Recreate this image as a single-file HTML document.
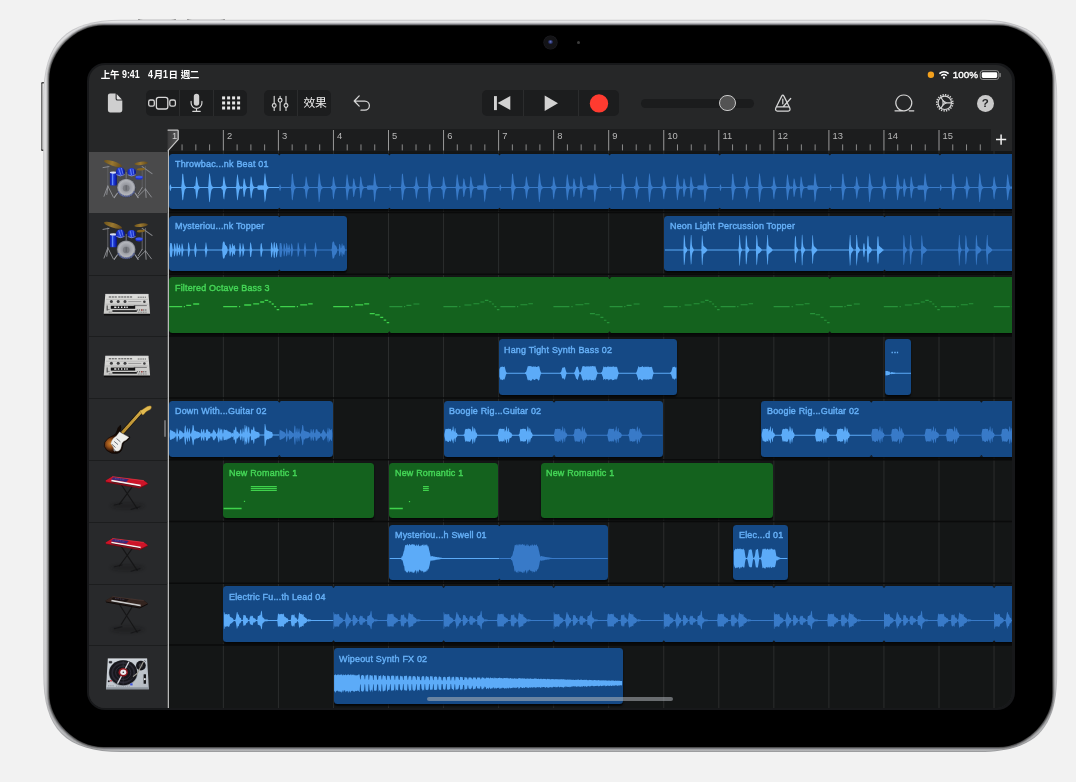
<!DOCTYPE html>
<html lang="zh-Hant">
<head>
<meta charset="utf-8">
<title>GarageBand</title>
<style>

*{box-sizing:border-box;margin:0;padding:0}
html,body{width:1076px;height:782px;overflow:hidden}
body{position:relative;background:#f2f2f2;font-family:"Liberation Sans","Noto Sans CJK TC",sans-serif;color:#fff}
.abs,.screen,.ui,.cam,.camdot,.sidebtn,.topbtn,.homebar{position:absolute}
.sidebtn{left:41.4px;top:81.8px;width:3.4px;height:69.6px;border-radius:1.6px 0 0 1.6px;background:linear-gradient(180deg,#1d1d1d 0,rgba(30,30,30,0) 3.5%,rgba(30,30,30,0) 96.5%,#1d1d1d 100%),linear-gradient(90deg,#8a8a8a 0,#5e5e5e 22%,#e8e8e8 50%,#f3f3f3 100%)}
.topbtn{top:18.7px;height:1.4px;border-radius:1px 1px 0 0;background:linear-gradient(90deg,#555 0,#b8b8b8 2.4px,#dcdcdc 5px,#dcdcdc calc(100% - 5px),#b8b8b8 calc(100% - 2.4px),#555 100%)}
.tb1{left:137.6px;width:38.4px}.tb2{left:187px;width:38.4px}
.cam{left:544px;top:35.5px;width:13px;height:13px;border-radius:50%;background:#131316;box-shadow:0 0 0 .6px #1d1d22}
.cam i{position:absolute;left:4.2px;top:4.2px;width:4.6px;height:4.6px;border-radius:50%;background:radial-gradient(circle at 50% 45%,#6d7bc8 0,#2b356e 45%,#10132a 100%)}
.camdot{left:576.5px;top:40.6px;width:3px;height:3px;border-radius:50%;background:#3c3c3c}
.screen{left:86.6px;top:62.8px;width:928.6px;height:647px;border-radius:18px;background:#17181a}
.ui{left:88.5px;top:64.5px;width:923.6px;height:643.3px;border-radius:16px;background:#262728;overflow:hidden}
.pg{position:absolute;left:-88.5px;top:-64.5px;width:1076px;height:782px;will-change:transform}
.pg>*{position:absolute}
.pg svg{position:absolute;overflow:visible}
/* status bar */
.st{top:68px;height:14px;line-height:14px;font-size:9.5px;font-weight:700;color:#fff;white-space:nowrap;letter-spacing:-.1px}
.st.cj{font-size:9.5px;letter-spacing:-.35px}
.st.dg{font-size:10.3px;transform:scaleX(.86);transform-origin:0 50%;letter-spacing:0}
/* toolbar */
.grp{top:90px;height:26.2px;border-radius:5px;background:#1c1d1e}
.grp i{position:absolute;top:0;width:1px;height:26.2px;background:#2b2c2d}
.fx{left:303.4px;top:95px;width:24px;height:16px;line-height:16px;font-size:11.8px;color:#ececec;white-space:nowrap;letter-spacing:-.2px}
.slider{left:640.7px;top:98.5px;width:113.7px;height:9.2px;border-radius:4.6px;background:#1b1c1d}
.knob{left:719.4px;top:95.1px;width:16.2px;height:16.2px;border-radius:50%;background:#535353;border:1.2px solid #c9c9c9}
.help{left:976.6px;top:94.8px;width:17.4px;height:17.4px;border-radius:50%;background:#c9c9c9;color:#262728;font-size:11.5px;font-weight:700;line-height:17.6px;text-align:center}
/* ruler */
.ruler{left:167px;top:128.7px;width:824px;height:22.5px;background:#1c1d1e}
.rnum{top:130.6px;height:10px;line-height:10px;font-size:9.4px;color:#b9b9b9;white-space:nowrap}
/* tracks */
.tracks{left:167px;top:151px;width:846px;height:557px;background:#141616}
.hdr{left:88.5px;width:78.2px;background:#28292b}
.hdr.sel{background:#4a4a4b}
.hsep{left:88.5px;width:78.2px;height:1px;background:#1c1d1e}
.rsep{left:167px;width:846px;height:1.2px;background:#0c0d0d}
.rg{border-radius:3.5px;background:#154985;overflow:hidden;box-shadow:0 1.2px 1.6px rgba(0,0,0,.75)}
.rg.g{background:#14621e}
.lbl{position:absolute;left:5.5px;top:4.4px;height:11px;line-height:11px;font-size:9.4px;color:#66b0f7;white-space:nowrap;letter-spacing:.2px;-webkit-text-stroke:.42px #66b0f7;transform:scaleX(.955);transform-origin:0 50%}
.rg.g .lbl{color:#45d657;-webkit-text-stroke-color:#45d657}
.homebar{left:338.6px;top:632.8px;width:246.4px;height:4px;border-radius:2px;background:rgba(175,180,186,.55)}
</style>
</head>
<body>
<div class="sidebtn"></div>
<div class="topbtn tb1"></div><div class="topbtn tb2"></div>
<svg class="abs" style="left:0;top:0" width="1076" height="782" viewBox="0 0 1076 782"><defs><linearGradient id="gDevO" x1="0" y1="0" x2="0" y2="1"><stop offset="0" stop-color="#c9c9cb"/><stop offset=".9" stop-color="#c4c4c6"/><stop offset="1" stop-color="#9c9d9f"/></linearGradient><linearGradient id="gDev" x1="0" y1="0" x2="0" y2="1"><stop offset="0" stop-color="#e6e6e8"/><stop offset=".04" stop-color="#dededf"/><stop offset=".55" stop-color="#dadadc"/><stop offset=".9" stop-color="#cdcdcf"/><stop offset="1" stop-color="#b6b7b9"/></linearGradient><filter id="fBez" x="-2%" y="-2%" width="104%" height="104%"><feGaussianBlur stdDeviation="1.05"/></filter></defs><path d="M43.2 97.8C43.2 42.42 65.82 19.8 121.2 19.8H979.2C1034.58 19.8 1057.2 42.42 1057.2 97.8V674C1057.2 729.38 1034.58 752 979.2 752H121.2C65.82 752 43.2 729.38 43.2 674Z" fill="url(#gDevO)"/><path d="M44.1 97.7C44.1 43.03 66.43 20.7 121.1 20.7H979.3C1033.97 20.7 1056.3 43.03 1056.3 97.7V674.1C1056.3 728.77 1033.97 751.1 979.3 751.1H121.1C66.43 751.1 44.1 728.77 44.1 674.1Z" fill="url(#gDev)"/><path d="M49.3 79.5C49.3 51.42 75.22 25.5 103.3 25.5H998.3C1026.38 25.5 1052.3 51.42 1052.3 79.5V692.9C1052.3 720.98 1026.38 746.9 998.3 746.9H103.3C75.22 746.9 49.3 720.98 49.3 692.9Z" fill="#2a2a2c" stroke="#2a2a2c" stroke-width="2.6" filter="url(#fBez)"/><path d="M49.3 79.5C49.3 51.42 75.22 25.5 103.3 25.5H998.3C1026.38 25.5 1052.3 51.42 1052.3 79.5V692.9C1052.3 720.98 1026.38 746.9 998.3 746.9H103.3C75.22 746.9 49.3 720.98 49.3 692.9Z" fill="#000"/></svg>
<div class="cam"><i></i></div><div class="camdot"></div>
<div class="screen"></div>
<div class="ui"><div class="pg">
<div class="tracks"></div><div class="ruler"></div>
<svg style="left:0;top:0" width="1076" height="782" viewBox="0 0 1076 782" fill="none"><path d="M223.35 151V708M278.4 151V708M333.45 151V708M388.5 151V708M443.55 151V708M498.6 151V708M553.65 151V708M608.7 151V708M663.75 151V708M718.8 151V708M773.85 151V708M828.9 151V708M883.95 151V708M939 151V708M994.05 151V708" stroke="#2b2d2d" stroke-width="1"/><path d="M167 212.5H1013M167 274.3H1013M167 336.1H1013M167 397.9H1013M167 459.7H1013M167 521.5H1013M167 583.3H1013M167 645.1H1013" stroke="#0a0b0b" stroke-width="1.5"/></svg>
<div class="rg" style="left:169.2px;top:153.8px;width:847.4px;height:55.6px;border-radius:3.5px 0 0 3.5px"><span class="lbl">Throwbac...nk Beat 01</span></div>
<div class="rg" style="left:169.2px;top:215.6px;width:177.8px;height:55.6px"><span class="lbl">Mysteriou...nk Topper</span></div>
<div class="rg" style="left:664.35px;top:215.6px;width:352.25px;height:55.6px;border-radius:3.5px 0 0 3.5px"><span class="lbl">Neon Light Percussion Topper</span></div>
<div class="rg g" style="left:169.2px;top:277.4px;width:847.4px;height:55.6px;border-radius:3.5px 0 0 3.5px"><span class="lbl">Filtered Octave Bass 3</span></div>
<div class="rg" style="left:498.9px;top:339.2px;width:178px;height:55.6px"><span class="lbl">Hang Tight Synth Bass 02</span></div>
<div class="rg" style="left:885px;top:339.2px;width:26.4px;height:55.6px"><span class="lbl">...</span></div>
<div class="rg" style="left:169.2px;top:401px;width:163.4px;height:55.6px"><span class="lbl">Down With...Guitar 02</span></div>
<div class="rg" style="left:443.95px;top:401px;width:219.25px;height:55.6px"><span class="lbl">Boogie Rig...Guitar 02</span></div>
<div class="rg" style="left:761.2px;top:401px;width:255.4px;height:55.6px;border-radius:3.5px 0 0 3.5px"><span class="lbl">Boogie Rig...Guitar 02</span></div>
<div class="rg g" style="left:223.4px;top:462.8px;width:150.6px;height:55.6px"><span class="lbl">New Romantic 1</span></div>
<div class="rg g" style="left:389.2px;top:462.8px;width:108.4px;height:55.6px"><span class="lbl">New Romantic 1</span></div>
<div class="rg g" style="left:540.6px;top:462.8px;width:232.8px;height:55.6px"><span class="lbl">New Romantic 1</span></div>
<div class="rg" style="left:389.2px;top:524.6px;width:219.2px;height:55.6px"><span class="lbl">Mysteriou...h Swell 01</span></div>
<div class="rg" style="left:733.4px;top:524.6px;width:54.4px;height:55.6px"><span class="lbl">Elec...d 01</span></div>
<div class="rg" style="left:223.4px;top:586.4px;width:793.2px;height:55.6px;border-radius:3.5px 0 0 3.5px"><span class="lbl">Electric Fu...th Lead 04</span></div>
<div class="rg" style="left:333.6px;top:648.2px;width:289.2px;height:55.6px"><span class="lbl">Wipeout Synth FX 02</span></div>
<svg style="left:0;top:0" width="1076" height="782" viewBox="0 0 1076 782" fill="none" shape-rendering="geometricPrecision">
<path d="M277.6 153.6l1.7 1.9l1.7-1.9zM277.6 209.6l1.7-1.9l1.7 1.9z" fill="#141616"/>
<path d="M387.7 153.6l1.7 1.9l1.7-1.9zM387.7 209.6l1.7-1.9l1.7 1.9z" fill="#141616"/>
<path d="M497.8 153.6l1.7 1.9l1.7-1.9zM497.8 209.6l1.7-1.9l1.7 1.9z" fill="#141616"/>
<path d="M607.9 153.6l1.7 1.9l1.7-1.9zM607.9 209.6l1.7-1.9l1.7 1.9z" fill="#141616"/>
<path d="M718 153.6l1.7 1.9l1.7-1.9zM718 209.6l1.7-1.9l1.7 1.9z" fill="#141616"/>
<path d="M828.1 153.6l1.7 1.9l1.7-1.9zM828.1 209.6l1.7-1.9l1.7 1.9z" fill="#141616"/>
<path d="M938.2 153.6l1.7 1.9l1.7-1.9zM938.2 209.6l1.7-1.9l1.7 1.9z" fill="#141616"/>
<path d="M169.7 186L170.2 184.4L170.7 184.4L171.2 186.6L171.7 187.1L172.2 187.1L172.7 187.1L173.2 187.1L173.7 187.1L174.2 187.1L174.7 187.1L175.2 187.1L175.7 187.1L176.2 187.1L176.7 187.1L177.2 187.1L177.7 187.1L178.2 187.1L178.7 187.1L179.2 187.1L179.7 187.1L180.2 187.1L180.7 187.1L181.2 187.1L181.7 183.5L182.2 174.5L182.7 173.4L183.2 174L183.7 179L184.2 182.8L184.7 185L185.2 186L185.7 186.5L186.2 186.9L186.7 187.1L187.2 187.1L187.7 187.1L188.2 187.1L188.7 187.1L189.2 187.1L189.7 187.1L190.2 187.1L190.7 187.1L191.2 187.1L191.7 187.1L192.2 187.1L192.7 187.1L193.2 187.1L193.7 187.1L194.2 186.3L194.7 185.8L195.2 186.4L195.7 182L196.2 176.6L196.7 176.6L197.2 178.7L197.7 182.2L198.2 184.8L198.7 186L199.2 186.5L199.7 186.9L200.2 187.1L200.7 187.1L201.2 187.1L201.7 187.1L202.2 187.1L202.7 187.1L203.2 187.1L203.7 187.1L204.2 187.1L204.7 187.1L205.2 187.1L205.7 187.1L206.2 187.1L206.7 187.1L207.2 187.1L207.7 187.1L208.2 186.8L208.7 180.5L209.2 173.6L209.7 173.6L210.2 176.3L210.7 180.8L211.2 184L211.7 185.6L212.2 186.2L212.7 186.7L213.2 187L213.7 187.1L214.2 187.1L214.7 187.1L215.2 187.1L215.7 187.1L216.2 187.1L216.7 187.1L217.2 187.1L217.7 187.1L218.2 187.1L218.7 187.1L219.2 187.1L219.7 187.1L220.2 187.1L220.7 187.1L221.2 187.1L221.7 186L222.2 185.9L222.7 185.4L223.2 178.9L223.7 176.4L224.2 176.4L224.7 180.1L225.2 183.3L225.7 185.3L226.2 186.3L226.7 186.7L227.2 187L227.7 187.1L228.2 187.1L228.7 187.1L229.2 187.1L229.7 187.1L230.2 187.1L230.7 187.1L231.2 187.1L231.7 187.1L232.2 187.1L232.7 187.1L233.2 187.1L233.7 187.1L234.2 187.1L234.7 187.1L235.2 187.1L235.7 187.1L236.2 186.1L236.7 179.3L237.2 174.6L237.7 174.6L238.2 178.1L238.7 181.9L239.2 184.6L239.7 185.9L240.2 186.4L240.7 186.8L241.2 186.6L241.7 186.2L242.2 187.1L242.7 187.1L243.2 184L243.7 178.4L244.2 178.4L244.7 179.5L245.2 182.6L245.7 184.9L246.2 186.1L246.7 186.6L247.2 186.9L247.7 187.1L248.2 187.1L248.7 187.1L249.2 187.1L249.7 187.1L250.2 183.3L250.7 176.6L251.2 176.6L251.7 177.9L252.2 181.6L252.7 184.3L253.2 185.8L253.7 186.5L254.2 186.8L254.7 187.1L255.2 187.1L255.7 187.1L256.2 187.1L256.7 187.1L257.2 187.1L257.7 185.8L258.2 185.3L258.7 185.4L259.2 185.4L259.7 185.2L260.2 185.2L260.7 185.4L261.2 185.3L261.7 185.3L262.2 185.5L262.7 185.3L263.2 185.4L263.7 185.3L264.2 178.6L264.7 173.4L265.2 173.4L265.7 177.2L266.2 181.4L266.7 184.3L267.2 185.8L267.7 186.3L268.2 186.8L268.7 187.1L269.2 187.1L269.7 187.1L270.2 187.1L270.7 187.1L271.2 187.1L271.7 187.1L272.2 187.1L272.7 187.1L273.2 187.1L273.7 187.1L274.2 187.1L274.7 187.1L275.2 187.1L275.7 187.1L276.2 187.1L276.7 187.1L277.2 187.1L277.7 187.1L278.2 187.1L278.7 187.1L279.2 187.1L279.2 188.1L278.7 188.1L278.2 188.1L277.7 188.1L277.2 188.1L276.7 188.1L276.2 188.1L275.7 188.1L275.2 188.1L274.7 188.1L274.2 188.1L273.7 188.1L273.2 188.1L272.7 188.1L272.2 188.1L271.7 188.1L271.2 188.1L270.7 188.1L270.2 188.1L269.7 188.1L269.2 188.1L268.7 188.2L268.2 188.5L267.7 189L267.2 189.5L266.7 190.8L266.2 193.3L265.7 198.7L265.2 201.1L264.7 202.5L264.2 195.7L263.7 189.9L263.2 189.7L262.7 189.9L262.2 189.5L261.7 189.7L261.2 190L260.7 189.6L260.2 190.1L259.7 189.8L259.2 189.9L258.7 189.7L258.2 189.8L257.7 189.4L257.2 188.1L256.7 188.1L256.2 188.1L255.7 188.1L255.2 188.1L254.7 188.1L254.2 188.4L253.7 188.6L253.2 189.3L252.7 190.7L252.2 193.1L251.7 197L251.2 198.8L250.7 197.5L250.2 191.5L249.7 188.1L249.2 188.1L248.7 188.1L248.2 188.1L247.7 188.1L247.2 188.2L246.7 188.4L246.2 189.1L245.7 190.1L245.2 192.2L244.7 195.4L244.2 197L243.7 196.7L243.2 191.5L242.7 188.1L242.2 188.1L241.7 188.9L241.2 188.7L240.7 188.4L240.2 188.7L239.7 189.3L239.2 190.8L238.7 193.3L238.2 196.4L237.7 200.2L237.2 199.9L236.7 194.9L236.2 189.1L235.7 188.1L235.2 188.1L234.7 188.1L234.2 188.1L233.7 188.1L233.2 188.1L232.7 188.1L232.2 188.1L231.7 188.1L231.2 188.1L230.7 188.1L230.2 188.1L229.7 188.1L229.2 188.1L228.7 188.1L228.2 188.1L227.7 188.1L227.2 188.2L226.7 188.5L226.2 188.8L225.7 190.1L225.2 192.1L224.7 194.5L224.2 199.5L223.7 199L223.2 196.6L222.7 189.9L222.2 189.4L221.7 189.2L221.2 188.1L220.7 188.1L220.2 188.1L219.7 188.1L219.2 188.1L218.7 188.1L218.2 188.1L217.7 188.1L217.2 188.1L216.7 188.1L216.2 188.1L215.7 188.1L215.2 188.1L214.7 188.1L214.2 188.1L213.7 188.1L213.2 188.2L212.7 188.4L212.2 188.9L211.7 189.5L211.2 191.2L210.7 194L210.2 198.5L209.7 202.1L209.2 202.2L208.7 194.7L208.2 188.5L207.7 188.1L207.2 188.1L206.7 188.1L206.2 188.1L205.7 188.1L205.2 188.1L204.7 188.1L204.2 188.1L203.7 188.1L203.2 188.1L202.7 188.1L202.2 188.1L201.7 188.1L201.2 188.1L200.7 188.1L200.2 188.1L199.7 188.3L199.2 188.7L198.7 189.3L198.2 190.6L197.7 193.2L197.2 197.1L196.7 199.4L196.2 197.3L195.7 193.1L195.2 188.8L194.7 189.2L194.2 188.7L193.7 188.1L193.2 188.1L192.7 188.1L192.2 188.1L191.7 188.1L191.2 188.1L190.7 188.1L190.2 188.1L189.7 188.1L189.2 188.1L188.7 188.1L188.2 188.1L187.7 188.1L187.2 188.1L186.7 188.1L186.2 188.3L185.7 188.7L185.2 189.1L184.7 190.1L184.2 192.4L183.7 195.2L183.2 199.6L182.7 200.4L182.2 199.3L181.7 191.4L181.2 188.1L180.7 188.1L180.2 188.1L179.7 188.1L179.2 188.1L178.7 188.1L178.2 188.1L177.7 188.1L177.2 188.1L176.7 188.1L176.2 188.1L175.7 188.1L175.2 188.1L174.7 188.1L174.2 188.1L173.7 188.1L173.2 188.1L172.7 188.1L172.2 188.1L171.7 188.1L171.2 188.7L170.7 190.9L170.2 190.8L169.7 189.1Z" fill="#5cabf8"/>
<path d="M279.3 186L279.8 184.4L280.3 184.4L280.8 186.6L281.3 187.1L281.8 187.1L282.3 187.1L282.8 187.1L283.3 187.1L283.8 187.1L284.3 187.1L284.8 187.1L285.3 187.1L285.8 187.1L286.3 187.1L286.8 187.1L287.3 187.1L287.8 187.1L288.3 187.1L288.8 187.1L289.3 187.1L289.8 187.1L290.3 187.1L290.8 187.1L291.3 183.5L291.8 174.5L292.3 173.4L292.8 174L293.3 179L293.8 182.8L294.3 185L294.8 186L295.3 186.5L295.8 186.9L296.3 187.1L296.8 187.1L297.3 187.1L297.8 187.1L298.3 187.1L298.8 187.1L299.3 187.1L299.8 187.1L300.3 187.1L300.8 187.1L301.3 187.1L301.8 187.1L302.3 187.1L302.8 187.1L303.3 187.1L303.8 186.3L304.3 185.8L304.8 186.4L305.3 182L305.8 176.6L306.3 176.6L306.8 178.7L307.3 182.2L307.8 184.8L308.3 186L308.8 186.5L309.3 186.9L309.8 187.1L310.3 187.1L310.8 187.1L311.3 187.1L311.8 187.1L312.3 187.1L312.8 187.1L313.3 187.1L313.8 187.1L314.3 187.1L314.8 187.1L315.3 187.1L315.8 187.1L316.3 187.1L316.8 187.1L317.3 187.1L317.8 186.8L318.3 180.5L318.8 173.6L319.3 173.6L319.8 176.3L320.3 180.8L320.8 184L321.3 185.6L321.8 186.2L322.3 186.7L322.8 187L323.3 187.1L323.8 187.1L324.3 187.1L324.8 187.1L325.3 187.1L325.8 187.1L326.3 187.1L326.8 187.1L327.3 187.1L327.8 187.1L328.3 187.1L328.8 187.1L329.3 187.1L329.8 187.1L330.3 187.1L330.8 187.1L331.3 186L331.8 185.9L332.3 185.4L332.8 178.9L333.3 176.4L333.8 176.4L334.3 180.1L334.8 183.3L335.3 185.3L335.8 186.3L336.3 186.7L336.8 187L337.3 187.1L337.8 187.1L338.3 187.1L338.8 187.1L339.3 187.1L339.8 187.1L340.3 187.1L340.8 187.1L341.3 187.1L341.8 187.1L342.3 187.1L342.8 187.1L343.3 187.1L343.8 187.1L344.3 187.1L344.8 187.1L345.3 187.1L345.8 186.1L346.3 179.3L346.8 174.6L347.3 174.6L347.8 178.1L348.3 181.9L348.8 184.6L349.3 185.9L349.8 186.4L350.3 186.8L350.8 186.6L351.3 186.2L351.8 187.1L352.3 187.1L352.8 184L353.3 178.4L353.8 178.4L354.3 179.5L354.8 182.6L355.3 184.9L355.8 186.1L356.3 186.6L356.8 186.9L357.3 187.1L357.8 187.1L358.3 187.1L358.8 187.1L359.3 187.1L359.8 183.3L360.3 176.6L360.8 176.6L361.3 177.9L361.8 181.6L362.3 184.3L362.8 185.8L363.3 186.5L363.8 186.8L364.3 187.1L364.8 187.1L365.3 187.1L365.8 187.1L366.3 187.1L366.8 187.1L367.3 185.8L367.8 185.3L368.3 185.4L368.8 185.4L369.3 185.2L369.8 185.2L370.3 185.4L370.8 185.3L371.3 185.3L371.8 185.5L372.3 185.3L372.8 185.4L373.3 185.3L373.8 178.6L374.3 173.4L374.8 173.4L375.3 177.2L375.8 181.4L376.3 184.3L376.8 185.8L377.3 186.3L377.8 186.8L378.3 187.1L378.8 187.1L379.3 187.1L379.8 187.1L380.3 187.1L380.8 187.1L381.3 187.1L381.8 187.1L382.3 187.1L382.8 187.1L383.3 187.1L383.8 187.1L384.3 187.1L384.8 187.1L385.3 187.1L385.8 187.1L386.3 187.1L386.8 187.1L387.3 187.1L387.8 187.1L388.3 187.1L388.8 187.1L389.3 187.1L389.3 188.1L388.8 188.1L388.3 188.1L387.8 188.1L387.3 188.1L386.8 188.1L386.3 188.1L385.8 188.1L385.3 188.1L384.8 188.1L384.3 188.1L383.8 188.1L383.3 188.1L382.8 188.1L382.3 188.1L381.8 188.1L381.3 188.1L380.8 188.1L380.3 188.1L379.8 188.1L379.3 188.1L378.8 188.1L378.3 188.2L377.8 188.5L377.3 189L376.8 189.5L376.3 190.8L375.8 193.3L375.3 198.7L374.8 201.1L374.3 202.5L373.8 195.7L373.3 189.9L372.8 189.7L372.3 189.9L371.8 189.5L371.3 189.7L370.8 190L370.3 189.6L369.8 190.1L369.3 189.8L368.8 189.9L368.3 189.7L367.8 189.8L367.3 189.4L366.8 188.1L366.3 188.1L365.8 188.1L365.3 188.1L364.8 188.1L364.3 188.1L363.8 188.4L363.3 188.6L362.8 189.3L362.3 190.7L361.8 193.1L361.3 197L360.8 198.8L360.3 197.5L359.8 191.5L359.3 188.1L358.8 188.1L358.3 188.1L357.8 188.1L357.3 188.1L356.8 188.2L356.3 188.4L355.8 189.1L355.3 190.1L354.8 192.2L354.3 195.4L353.8 197L353.3 196.7L352.8 191.5L352.3 188.1L351.8 188.1L351.3 188.9L350.8 188.7L350.3 188.4L349.8 188.7L349.3 189.3L348.8 190.8L348.3 193.3L347.8 196.4L347.3 200.2L346.8 199.9L346.3 194.9L345.8 189.1L345.3 188.1L344.8 188.1L344.3 188.1L343.8 188.1L343.3 188.1L342.8 188.1L342.3 188.1L341.8 188.1L341.3 188.1L340.8 188.1L340.3 188.1L339.8 188.1L339.3 188.1L338.8 188.1L338.3 188.1L337.8 188.1L337.3 188.1L336.8 188.2L336.3 188.5L335.8 188.8L335.3 190.1L334.8 192.1L334.3 194.5L333.8 199.5L333.3 199L332.8 196.6L332.3 189.9L331.8 189.4L331.3 189.2L330.8 188.1L330.3 188.1L329.8 188.1L329.3 188.1L328.8 188.1L328.3 188.1L327.8 188.1L327.3 188.1L326.8 188.1L326.3 188.1L325.8 188.1L325.3 188.1L324.8 188.1L324.3 188.1L323.8 188.1L323.3 188.1L322.8 188.2L322.3 188.4L321.8 188.9L321.3 189.5L320.8 191.2L320.3 194L319.8 198.5L319.3 202.1L318.8 202.2L318.3 194.7L317.8 188.5L317.3 188.1L316.8 188.1L316.3 188.1L315.8 188.1L315.3 188.1L314.8 188.1L314.3 188.1L313.8 188.1L313.3 188.1L312.8 188.1L312.3 188.1L311.8 188.1L311.3 188.1L310.8 188.1L310.3 188.1L309.8 188.1L309.3 188.3L308.8 188.7L308.3 189.3L307.8 190.6L307.3 193.2L306.8 197.1L306.3 199.4L305.8 197.3L305.3 193.1L304.8 188.8L304.3 189.2L303.8 188.7L303.3 188.1L302.8 188.1L302.3 188.1L301.8 188.1L301.3 188.1L300.8 188.1L300.3 188.1L299.8 188.1L299.3 188.1L298.8 188.1L298.3 188.1L297.8 188.1L297.3 188.1L296.8 188.1L296.3 188.1L295.8 188.3L295.3 188.7L294.8 189.1L294.3 190.1L293.8 192.4L293.3 195.2L292.8 199.6L292.3 200.4L291.8 199.3L291.3 191.4L290.8 188.1L290.3 188.1L289.8 188.1L289.3 188.1L288.8 188.1L288.3 188.1L287.8 188.1L287.3 188.1L286.8 188.1L286.3 188.1L285.8 188.1L285.3 188.1L284.8 188.1L284.3 188.1L283.8 188.1L283.3 188.1L282.8 188.1L282.3 188.1L281.8 188.1L281.3 188.1L280.8 188.7L280.3 190.9L279.8 190.8L279.3 189.1Z" fill="#387ac8"/>
<path d="M389.4 186L389.9 184.4L390.4 184.4L390.9 186.6L391.4 187.1L391.9 187.1L392.4 187.1L392.9 187.1L393.4 187.1L393.9 187.1L394.4 187.1L394.9 187.1L395.4 187.1L395.9 187.1L396.4 187.1L396.9 187.1L397.4 187.1L397.9 187.1L398.4 187.1L398.9 187.1L399.4 187.1L399.9 187.1L400.4 187.1L400.9 187.1L401.4 183.5L401.9 174.5L402.4 173.4L402.9 174L403.4 179L403.9 182.8L404.4 185L404.9 186L405.4 186.5L405.9 186.9L406.4 187.1L406.9 187.1L407.4 187.1L407.9 187.1L408.4 187.1L408.9 187.1L409.4 187.1L409.9 187.1L410.4 187.1L410.9 187.1L411.4 187.1L411.9 187.1L412.4 187.1L412.9 187.1L413.4 187.1L413.9 186.3L414.4 185.8L414.9 186.4L415.4 182L415.9 176.6L416.4 176.6L416.9 178.7L417.4 182.2L417.9 184.8L418.4 186L418.9 186.5L419.4 186.9L419.9 187.1L420.4 187.1L420.9 187.1L421.4 187.1L421.9 187.1L422.4 187.1L422.9 187.1L423.4 187.1L423.9 187.1L424.4 187.1L424.9 187.1L425.4 187.1L425.9 187.1L426.4 187.1L426.9 187.1L427.4 187.1L427.9 186.8L428.4 180.5L428.9 173.6L429.4 173.6L429.9 176.3L430.4 180.8L430.9 184L431.4 185.6L431.9 186.2L432.4 186.7L432.9 187L433.4 187.1L433.9 187.1L434.4 187.1L434.9 187.1L435.4 187.1L435.9 187.1L436.4 187.1L436.9 187.1L437.4 187.1L437.9 187.1L438.4 187.1L438.9 187.1L439.4 187.1L439.9 187.1L440.4 187.1L440.9 187.1L441.4 186L441.9 185.9L442.4 185.4L442.9 178.9L443.4 176.4L443.9 176.4L444.4 180.1L444.9 183.3L445.4 185.3L445.9 186.3L446.4 186.7L446.9 187L447.4 187.1L447.9 187.1L448.4 187.1L448.9 187.1L449.4 187.1L449.9 187.1L450.4 187.1L450.9 187.1L451.4 187.1L451.9 187.1L452.4 187.1L452.9 187.1L453.4 187.1L453.9 187.1L454.4 187.1L454.9 187.1L455.4 187.1L455.9 186.1L456.4 179.3L456.9 174.6L457.4 174.6L457.9 178.1L458.4 181.9L458.9 184.6L459.4 185.9L459.9 186.4L460.4 186.8L460.9 186.6L461.4 186.2L461.9 187.1L462.4 187.1L462.9 184L463.4 178.4L463.9 178.4L464.4 179.5L464.9 182.6L465.4 184.9L465.9 186.1L466.4 186.6L466.9 186.9L467.4 187.1L467.9 187.1L468.4 187.1L468.9 187.1L469.4 187.1L469.9 183.3L470.4 176.6L470.9 176.6L471.4 177.9L471.9 181.6L472.4 184.3L472.9 185.8L473.4 186.5L473.9 186.8L474.4 187.1L474.9 187.1L475.4 187.1L475.9 187.1L476.4 187.1L476.9 187.1L477.4 185.8L477.9 185.3L478.4 185.4L478.9 185.4L479.4 185.2L479.9 185.2L480.4 185.4L480.9 185.3L481.4 185.3L481.9 185.5L482.4 185.3L482.9 185.4L483.4 185.3L483.9 178.6L484.4 173.4L484.9 173.4L485.4 177.2L485.9 181.4L486.4 184.3L486.9 185.8L487.4 186.3L487.9 186.8L488.4 187.1L488.9 187.1L489.4 187.1L489.9 187.1L490.4 187.1L490.9 187.1L491.4 187.1L491.9 187.1L492.4 187.1L492.9 187.1L493.4 187.1L493.9 187.1L494.4 187.1L494.9 187.1L495.4 187.1L495.9 187.1L496.4 187.1L496.9 187.1L497.4 187.1L497.9 187.1L498.4 187.1L498.9 187.1L499.4 187.1L499.4 188.1L498.9 188.1L498.4 188.1L497.9 188.1L497.4 188.1L496.9 188.1L496.4 188.1L495.9 188.1L495.4 188.1L494.9 188.1L494.4 188.1L493.9 188.1L493.4 188.1L492.9 188.1L492.4 188.1L491.9 188.1L491.4 188.1L490.9 188.1L490.4 188.1L489.9 188.1L489.4 188.1L488.9 188.1L488.4 188.2L487.9 188.5L487.4 189L486.9 189.5L486.4 190.8L485.9 193.3L485.4 198.7L484.9 201.1L484.4 202.5L483.9 195.7L483.4 189.9L482.9 189.7L482.4 189.9L481.9 189.5L481.4 189.7L480.9 190L480.4 189.6L479.9 190.1L479.4 189.8L478.9 189.9L478.4 189.7L477.9 189.8L477.4 189.4L476.9 188.1L476.4 188.1L475.9 188.1L475.4 188.1L474.9 188.1L474.4 188.1L473.9 188.4L473.4 188.6L472.9 189.3L472.4 190.7L471.9 193.1L471.4 197L470.9 198.8L470.4 197.5L469.9 191.5L469.4 188.1L468.9 188.1L468.4 188.1L467.9 188.1L467.4 188.1L466.9 188.2L466.4 188.4L465.9 189.1L465.4 190.1L464.9 192.2L464.4 195.4L463.9 197L463.4 196.7L462.9 191.5L462.4 188.1L461.9 188.1L461.4 188.9L460.9 188.7L460.4 188.4L459.9 188.7L459.4 189.3L458.9 190.8L458.4 193.3L457.9 196.4L457.4 200.2L456.9 199.9L456.4 194.9L455.9 189.1L455.4 188.1L454.9 188.1L454.4 188.1L453.9 188.1L453.4 188.1L452.9 188.1L452.4 188.1L451.9 188.1L451.4 188.1L450.9 188.1L450.4 188.1L449.9 188.1L449.4 188.1L448.9 188.1L448.4 188.1L447.9 188.1L447.4 188.1L446.9 188.2L446.4 188.5L445.9 188.8L445.4 190.1L444.9 192.1L444.4 194.5L443.9 199.5L443.4 199L442.9 196.6L442.4 189.9L441.9 189.4L441.4 189.2L440.9 188.1L440.4 188.1L439.9 188.1L439.4 188.1L438.9 188.1L438.4 188.1L437.9 188.1L437.4 188.1L436.9 188.1L436.4 188.1L435.9 188.1L435.4 188.1L434.9 188.1L434.4 188.1L433.9 188.1L433.4 188.1L432.9 188.2L432.4 188.4L431.9 188.9L431.4 189.5L430.9 191.2L430.4 194L429.9 198.5L429.4 202.1L428.9 202.2L428.4 194.7L427.9 188.5L427.4 188.1L426.9 188.1L426.4 188.1L425.9 188.1L425.4 188.1L424.9 188.1L424.4 188.1L423.9 188.1L423.4 188.1L422.9 188.1L422.4 188.1L421.9 188.1L421.4 188.1L420.9 188.1L420.4 188.1L419.9 188.1L419.4 188.3L418.9 188.7L418.4 189.3L417.9 190.6L417.4 193.2L416.9 197.1L416.4 199.4L415.9 197.3L415.4 193.1L414.9 188.8L414.4 189.2L413.9 188.7L413.4 188.1L412.9 188.1L412.4 188.1L411.9 188.1L411.4 188.1L410.9 188.1L410.4 188.1L409.9 188.1L409.4 188.1L408.9 188.1L408.4 188.1L407.9 188.1L407.4 188.1L406.9 188.1L406.4 188.1L405.9 188.3L405.4 188.7L404.9 189.1L404.4 190.1L403.9 192.4L403.4 195.2L402.9 199.6L402.4 200.4L401.9 199.3L401.4 191.4L400.9 188.1L400.4 188.1L399.9 188.1L399.4 188.1L398.9 188.1L398.4 188.1L397.9 188.1L397.4 188.1L396.9 188.1L396.4 188.1L395.9 188.1L395.4 188.1L394.9 188.1L394.4 188.1L393.9 188.1L393.4 188.1L392.9 188.1L392.4 188.1L391.9 188.1L391.4 188.1L390.9 188.7L390.4 190.9L389.9 190.8L389.4 189.1Z" fill="#387ac8"/>
<path d="M499.5 186L500 184.4L500.5 184.4L501 186.6L501.5 187.1L502 187.1L502.5 187.1L503 187.1L503.5 187.1L504 187.1L504.5 187.1L505 187.1L505.5 187.1L506 187.1L506.5 187.1L507 187.1L507.5 187.1L508 187.1L508.5 187.1L509 187.1L509.5 187.1L510 187.1L510.5 187.1L511 187.1L511.5 183.5L512 174.5L512.5 173.4L513 174L513.5 179L514 182.8L514.5 185L515 186L515.5 186.5L516 186.9L516.5 187.1L517 187.1L517.5 187.1L518 187.1L518.5 187.1L519 187.1L519.5 187.1L520 187.1L520.5 187.1L521 187.1L521.5 187.1L522 187.1L522.5 187.1L523 187.1L523.5 187.1L524 186.3L524.5 185.8L525 186.4L525.5 182L526 176.6L526.5 176.6L527 178.7L527.5 182.2L528 184.8L528.5 186L529 186.5L529.5 186.9L530 187.1L530.5 187.1L531 187.1L531.5 187.1L532 187.1L532.5 187.1L533 187.1L533.5 187.1L534 187.1L534.5 187.1L535 187.1L535.5 187.1L536 187.1L536.5 187.1L537 187.1L537.5 187.1L538 186.8L538.5 180.5L539 173.6L539.5 173.6L540 176.3L540.5 180.8L541 184L541.5 185.6L542 186.2L542.5 186.7L543 187L543.5 187.1L544 187.1L544.5 187.1L545 187.1L545.5 187.1L546 187.1L546.5 187.1L547 187.1L547.5 187.1L548 187.1L548.5 187.1L549 187.1L549.5 187.1L550 187.1L550.5 187.1L551 187.1L551.5 186L552 185.9L552.5 185.4L553 178.9L553.5 176.4L554 176.4L554.5 180.1L555 183.3L555.5 185.3L556 186.3L556.5 186.7L557 187L557.5 187.1L558 187.1L558.5 187.1L559 187.1L559.5 187.1L560 187.1L560.5 187.1L561 187.1L561.5 187.1L562 187.1L562.5 187.1L563 187.1L563.5 187.1L564 187.1L564.5 187.1L565 187.1L565.5 187.1L566 186.1L566.5 179.3L567 174.6L567.5 174.6L568 178.1L568.5 181.9L569 184.6L569.5 185.9L570 186.4L570.5 186.8L571 186.6L571.5 186.2L572 187.1L572.5 187.1L573 184L573.5 178.4L574 178.4L574.5 179.5L575 182.6L575.5 184.9L576 186.1L576.5 186.6L577 186.9L577.5 187.1L578 187.1L578.5 187.1L579 187.1L579.5 187.1L580 183.3L580.5 176.6L581 176.6L581.5 177.9L582 181.6L582.5 184.3L583 185.8L583.5 186.5L584 186.8L584.5 187.1L585 187.1L585.5 187.1L586 187.1L586.5 187.1L587 187.1L587.5 185.8L588 185.3L588.5 185.4L589 185.4L589.5 185.2L590 185.2L590.5 185.4L591 185.3L591.5 185.3L592 185.5L592.5 185.3L593 185.4L593.5 185.3L594 178.6L594.5 173.4L595 173.4L595.5 177.2L596 181.4L596.5 184.3L597 185.8L597.5 186.3L598 186.8L598.5 187.1L599 187.1L599.5 187.1L600 187.1L600.5 187.1L601 187.1L601.5 187.1L602 187.1L602.5 187.1L603 187.1L603.5 187.1L604 187.1L604.5 187.1L605 187.1L605.5 187.1L606 187.1L606.5 187.1L607 187.1L607.5 187.1L608 187.1L608.5 187.1L609 187.1L609.5 187.1L609.5 188.1L609 188.1L608.5 188.1L608 188.1L607.5 188.1L607 188.1L606.5 188.1L606 188.1L605.5 188.1L605 188.1L604.5 188.1L604 188.1L603.5 188.1L603 188.1L602.5 188.1L602 188.1L601.5 188.1L601 188.1L600.5 188.1L600 188.1L599.5 188.1L599 188.1L598.5 188.2L598 188.5L597.5 189L597 189.5L596.5 190.8L596 193.3L595.5 198.7L595 201.1L594.5 202.5L594 195.7L593.5 189.9L593 189.7L592.5 189.9L592 189.5L591.5 189.7L591 190L590.5 189.6L590 190.1L589.5 189.8L589 189.9L588.5 189.7L588 189.8L587.5 189.4L587 188.1L586.5 188.1L586 188.1L585.5 188.1L585 188.1L584.5 188.1L584 188.4L583.5 188.6L583 189.3L582.5 190.7L582 193.1L581.5 197L581 198.8L580.5 197.5L580 191.5L579.5 188.1L579 188.1L578.5 188.1L578 188.1L577.5 188.1L577 188.2L576.5 188.4L576 189.1L575.5 190.1L575 192.2L574.5 195.4L574 197L573.5 196.7L573 191.5L572.5 188.1L572 188.1L571.5 188.9L571 188.7L570.5 188.4L570 188.7L569.5 189.3L569 190.8L568.5 193.3L568 196.4L567.5 200.2L567 199.9L566.5 194.9L566 189.1L565.5 188.1L565 188.1L564.5 188.1L564 188.1L563.5 188.1L563 188.1L562.5 188.1L562 188.1L561.5 188.1L561 188.1L560.5 188.1L560 188.1L559.5 188.1L559 188.1L558.5 188.1L558 188.1L557.5 188.1L557 188.2L556.5 188.5L556 188.8L555.5 190.1L555 192.1L554.5 194.5L554 199.5L553.5 199L553 196.6L552.5 189.9L552 189.4L551.5 189.2L551 188.1L550.5 188.1L550 188.1L549.5 188.1L549 188.1L548.5 188.1L548 188.1L547.5 188.1L547 188.1L546.5 188.1L546 188.1L545.5 188.1L545 188.1L544.5 188.1L544 188.1L543.5 188.1L543 188.2L542.5 188.4L542 188.9L541.5 189.5L541 191.2L540.5 194L540 198.5L539.5 202.1L539 202.2L538.5 194.7L538 188.5L537.5 188.1L537 188.1L536.5 188.1L536 188.1L535.5 188.1L535 188.1L534.5 188.1L534 188.1L533.5 188.1L533 188.1L532.5 188.1L532 188.1L531.5 188.1L531 188.1L530.5 188.1L530 188.1L529.5 188.3L529 188.7L528.5 189.3L528 190.6L527.5 193.2L527 197.1L526.5 199.4L526 197.3L525.5 193.1L525 188.8L524.5 189.2L524 188.7L523.5 188.1L523 188.1L522.5 188.1L522 188.1L521.5 188.1L521 188.1L520.5 188.1L520 188.1L519.5 188.1L519 188.1L518.5 188.1L518 188.1L517.5 188.1L517 188.1L516.5 188.1L516 188.3L515.5 188.7L515 189.1L514.5 190.1L514 192.4L513.5 195.2L513 199.6L512.5 200.4L512 199.3L511.5 191.4L511 188.1L510.5 188.1L510 188.1L509.5 188.1L509 188.1L508.5 188.1L508 188.1L507.5 188.1L507 188.1L506.5 188.1L506 188.1L505.5 188.1L505 188.1L504.5 188.1L504 188.1L503.5 188.1L503 188.1L502.5 188.1L502 188.1L501.5 188.1L501 188.7L500.5 190.9L500 190.8L499.5 189.1Z" fill="#387ac8"/>
<path d="M609.6 186L610.1 184.4L610.6 184.4L611.1 186.6L611.6 187.1L612.1 187.1L612.6 187.1L613.1 187.1L613.6 187.1L614.1 187.1L614.6 187.1L615.1 187.1L615.6 187.1L616.1 187.1L616.6 187.1L617.1 187.1L617.6 187.1L618.1 187.1L618.6 187.1L619.1 187.1L619.6 187.1L620.1 187.1L620.6 187.1L621.1 187.1L621.6 183.5L622.1 174.5L622.6 173.4L623.1 174L623.6 179L624.1 182.8L624.6 185L625.1 186L625.6 186.5L626.1 186.9L626.6 187.1L627.1 187.1L627.6 187.1L628.1 187.1L628.6 187.1L629.1 187.1L629.6 187.1L630.1 187.1L630.6 187.1L631.1 187.1L631.6 187.1L632.1 187.1L632.6 187.1L633.1 187.1L633.6 187.1L634.1 186.3L634.6 185.8L635.1 186.4L635.6 182L636.1 176.6L636.6 176.6L637.1 178.7L637.6 182.2L638.1 184.8L638.6 186L639.1 186.5L639.6 186.9L640.1 187.1L640.6 187.1L641.1 187.1L641.6 187.1L642.1 187.1L642.6 187.1L643.1 187.1L643.6 187.1L644.1 187.1L644.6 187.1L645.1 187.1L645.6 187.1L646.1 187.1L646.6 187.1L647.1 187.1L647.6 187.1L648.1 186.8L648.6 180.5L649.1 173.6L649.6 173.6L650.1 176.3L650.6 180.8L651.1 184L651.6 185.6L652.1 186.2L652.6 186.7L653.1 187L653.6 187.1L654.1 187.1L654.6 187.1L655.1 187.1L655.6 187.1L656.1 187.1L656.6 187.1L657.1 187.1L657.6 187.1L658.1 187.1L658.6 187.1L659.1 187.1L659.6 187.1L660.1 187.1L660.6 187.1L661.1 187.1L661.6 186L662.1 185.9L662.6 185.4L663.1 178.9L663.6 176.4L664.1 176.4L664.6 180.1L665.1 183.3L665.6 185.3L666.1 186.3L666.6 186.7L667.1 187L667.6 187.1L668.1 187.1L668.6 187.1L669.1 187.1L669.6 187.1L670.1 187.1L670.6 187.1L671.1 187.1L671.6 187.1L672.1 187.1L672.6 187.1L673.1 187.1L673.6 187.1L674.1 187.1L674.6 187.1L675.1 187.1L675.6 187.1L676.1 186.1L676.6 179.3L677.1 174.6L677.6 174.6L678.1 178.1L678.6 181.9L679.1 184.6L679.6 185.9L680.1 186.4L680.6 186.8L681.1 186.6L681.6 186.2L682.1 187.1L682.6 187.1L683.1 184L683.6 178.4L684.1 178.4L684.6 179.5L685.1 182.6L685.6 184.9L686.1 186.1L686.6 186.6L687.1 186.9L687.6 187.1L688.1 187.1L688.6 187.1L689.1 187.1L689.6 187.1L690.1 183.3L690.6 176.6L691.1 176.6L691.6 177.9L692.1 181.6L692.6 184.3L693.1 185.8L693.6 186.5L694.1 186.8L694.6 187.1L695.1 187.1L695.6 187.1L696.1 187.1L696.6 187.1L697.1 187.1L697.6 185.8L698.1 185.3L698.6 185.4L699.1 185.4L699.6 185.2L700.1 185.2L700.6 185.4L701.1 185.3L701.6 185.3L702.1 185.5L702.6 185.3L703.1 185.4L703.6 185.3L704.1 178.6L704.6 173.4L705.1 173.4L705.6 177.2L706.1 181.4L706.6 184.3L707.1 185.8L707.6 186.3L708.1 186.8L708.6 187.1L709.1 187.1L709.6 187.1L710.1 187.1L710.6 187.1L711.1 187.1L711.6 187.1L712.1 187.1L712.6 187.1L713.1 187.1L713.6 187.1L714.1 187.1L714.6 187.1L715.1 187.1L715.6 187.1L716.1 187.1L716.6 187.1L717.1 187.1L717.6 187.1L718.1 187.1L718.6 187.1L719.1 187.1L719.6 187.1L719.6 188.1L719.1 188.1L718.6 188.1L718.1 188.1L717.6 188.1L717.1 188.1L716.6 188.1L716.1 188.1L715.6 188.1L715.1 188.1L714.6 188.1L714.1 188.1L713.6 188.1L713.1 188.1L712.6 188.1L712.1 188.1L711.6 188.1L711.1 188.1L710.6 188.1L710.1 188.1L709.6 188.1L709.1 188.1L708.6 188.2L708.1 188.5L707.6 189L707.1 189.5L706.6 190.8L706.1 193.3L705.6 198.7L705.1 201.1L704.6 202.5L704.1 195.7L703.6 189.9L703.1 189.7L702.6 189.9L702.1 189.5L701.6 189.7L701.1 190L700.6 189.6L700.1 190.1L699.6 189.8L699.1 189.9L698.6 189.7L698.1 189.8L697.6 189.4L697.1 188.1L696.6 188.1L696.1 188.1L695.6 188.1L695.1 188.1L694.6 188.1L694.1 188.4L693.6 188.6L693.1 189.3L692.6 190.7L692.1 193.1L691.6 197L691.1 198.8L690.6 197.5L690.1 191.5L689.6 188.1L689.1 188.1L688.6 188.1L688.1 188.1L687.6 188.1L687.1 188.2L686.6 188.4L686.1 189.1L685.6 190.1L685.1 192.2L684.6 195.4L684.1 197L683.6 196.7L683.1 191.5L682.6 188.1L682.1 188.1L681.6 188.9L681.1 188.7L680.6 188.4L680.1 188.7L679.6 189.3L679.1 190.8L678.6 193.3L678.1 196.4L677.6 200.2L677.1 199.9L676.6 194.9L676.1 189.1L675.6 188.1L675.1 188.1L674.6 188.1L674.1 188.1L673.6 188.1L673.1 188.1L672.6 188.1L672.1 188.1L671.6 188.1L671.1 188.1L670.6 188.1L670.1 188.1L669.6 188.1L669.1 188.1L668.6 188.1L668.1 188.1L667.6 188.1L667.1 188.2L666.6 188.5L666.1 188.8L665.6 190.1L665.1 192.1L664.6 194.5L664.1 199.5L663.6 199L663.1 196.6L662.6 189.9L662.1 189.4L661.6 189.2L661.1 188.1L660.6 188.1L660.1 188.1L659.6 188.1L659.1 188.1L658.6 188.1L658.1 188.1L657.6 188.1L657.1 188.1L656.6 188.1L656.1 188.1L655.6 188.1L655.1 188.1L654.6 188.1L654.1 188.1L653.6 188.1L653.1 188.2L652.6 188.4L652.1 188.9L651.6 189.5L651.1 191.2L650.6 194L650.1 198.5L649.6 202.1L649.1 202.2L648.6 194.7L648.1 188.5L647.6 188.1L647.1 188.1L646.6 188.1L646.1 188.1L645.6 188.1L645.1 188.1L644.6 188.1L644.1 188.1L643.6 188.1L643.1 188.1L642.6 188.1L642.1 188.1L641.6 188.1L641.1 188.1L640.6 188.1L640.1 188.1L639.6 188.3L639.1 188.7L638.6 189.3L638.1 190.6L637.6 193.2L637.1 197.1L636.6 199.4L636.1 197.3L635.6 193.1L635.1 188.8L634.6 189.2L634.1 188.7L633.6 188.1L633.1 188.1L632.6 188.1L632.1 188.1L631.6 188.1L631.1 188.1L630.6 188.1L630.1 188.1L629.6 188.1L629.1 188.1L628.6 188.1L628.1 188.1L627.6 188.1L627.1 188.1L626.6 188.1L626.1 188.3L625.6 188.7L625.1 189.1L624.6 190.1L624.1 192.4L623.6 195.2L623.1 199.6L622.6 200.4L622.1 199.3L621.6 191.4L621.1 188.1L620.6 188.1L620.1 188.1L619.6 188.1L619.1 188.1L618.6 188.1L618.1 188.1L617.6 188.1L617.1 188.1L616.6 188.1L616.1 188.1L615.6 188.1L615.1 188.1L614.6 188.1L614.1 188.1L613.6 188.1L613.1 188.1L612.6 188.1L612.1 188.1L611.6 188.1L611.1 188.7L610.6 190.9L610.1 190.8L609.6 189.1Z" fill="#387ac8"/>
<path d="M719.7 186L720.2 184.4L720.7 184.4L721.2 186.6L721.7 187.1L722.2 187.1L722.7 187.1L723.2 187.1L723.7 187.1L724.2 187.1L724.7 187.1L725.2 187.1L725.7 187.1L726.2 187.1L726.7 187.1L727.2 187.1L727.7 187.1L728.2 187.1L728.7 187.1L729.2 187.1L729.7 187.1L730.2 187.1L730.7 187.1L731.2 187.1L731.7 183.5L732.2 174.5L732.7 173.4L733.2 174L733.7 179L734.2 182.8L734.7 185L735.2 186L735.7 186.5L736.2 186.9L736.7 187.1L737.2 187.1L737.7 187.1L738.2 187.1L738.7 187.1L739.2 187.1L739.7 187.1L740.2 187.1L740.7 187.1L741.2 187.1L741.7 187.1L742.2 187.1L742.7 187.1L743.2 187.1L743.7 187.1L744.2 186.3L744.7 185.8L745.2 186.4L745.7 182L746.2 176.6L746.7 176.6L747.2 178.7L747.7 182.2L748.2 184.8L748.7 186L749.2 186.5L749.7 186.9L750.2 187.1L750.7 187.1L751.2 187.1L751.7 187.1L752.2 187.1L752.7 187.1L753.2 187.1L753.7 187.1L754.2 187.1L754.7 187.1L755.2 187.1L755.7 187.1L756.2 187.1L756.7 187.1L757.2 187.1L757.7 187.1L758.2 186.8L758.7 180.5L759.2 173.6L759.7 173.6L760.2 176.3L760.7 180.8L761.2 184L761.7 185.6L762.2 186.2L762.7 186.7L763.2 187L763.7 187.1L764.2 187.1L764.7 187.1L765.2 187.1L765.7 187.1L766.2 187.1L766.7 187.1L767.2 187.1L767.7 187.1L768.2 187.1L768.7 187.1L769.2 187.1L769.7 187.1L770.2 187.1L770.7 187.1L771.2 187.1L771.7 186L772.2 185.9L772.7 185.4L773.2 178.9L773.7 176.4L774.2 176.4L774.7 180.1L775.2 183.3L775.7 185.3L776.2 186.3L776.7 186.7L777.2 187L777.7 187.1L778.2 187.1L778.7 187.1L779.2 187.1L779.7 187.1L780.2 187.1L780.7 187.1L781.2 187.1L781.7 187.1L782.2 187.1L782.7 187.1L783.2 187.1L783.7 187.1L784.2 187.1L784.7 187.1L785.2 187.1L785.7 187.1L786.2 186.1L786.7 179.3L787.2 174.6L787.7 174.6L788.2 178.1L788.7 181.9L789.2 184.6L789.7 185.9L790.2 186.4L790.7 186.8L791.2 186.6L791.7 186.2L792.2 187.1L792.7 187.1L793.2 184L793.7 178.4L794.2 178.4L794.7 179.5L795.2 182.6L795.7 184.9L796.2 186.1L796.7 186.6L797.2 186.9L797.7 187.1L798.2 187.1L798.7 187.1L799.2 187.1L799.7 187.1L800.2 183.3L800.7 176.6L801.2 176.6L801.7 177.9L802.2 181.6L802.7 184.3L803.2 185.8L803.7 186.5L804.2 186.8L804.7 187.1L805.2 187.1L805.7 187.1L806.2 187.1L806.7 187.1L807.2 187.1L807.7 185.8L808.2 185.3L808.7 185.4L809.2 185.4L809.7 185.2L810.2 185.2L810.7 185.4L811.2 185.3L811.7 185.3L812.2 185.5L812.7 185.3L813.2 185.4L813.7 185.3L814.2 178.6L814.7 173.4L815.2 173.4L815.7 177.2L816.2 181.4L816.7 184.3L817.2 185.8L817.7 186.3L818.2 186.8L818.7 187.1L819.2 187.1L819.7 187.1L820.2 187.1L820.7 187.1L821.2 187.1L821.7 187.1L822.2 187.1L822.7 187.1L823.2 187.1L823.7 187.1L824.2 187.1L824.7 187.1L825.2 187.1L825.7 187.1L826.2 187.1L826.7 187.1L827.2 187.1L827.7 187.1L828.2 187.1L828.7 187.1L829.2 187.1L829.7 187.1L829.7 188.1L829.2 188.1L828.7 188.1L828.2 188.1L827.7 188.1L827.2 188.1L826.7 188.1L826.2 188.1L825.7 188.1L825.2 188.1L824.7 188.1L824.2 188.1L823.7 188.1L823.2 188.1L822.7 188.1L822.2 188.1L821.7 188.1L821.2 188.1L820.7 188.1L820.2 188.1L819.7 188.1L819.2 188.1L818.7 188.2L818.2 188.5L817.7 189L817.2 189.5L816.7 190.8L816.2 193.3L815.7 198.7L815.2 201.1L814.7 202.5L814.2 195.7L813.7 189.9L813.2 189.7L812.7 189.9L812.2 189.5L811.7 189.7L811.2 190L810.7 189.6L810.2 190.1L809.7 189.8L809.2 189.9L808.7 189.7L808.2 189.8L807.7 189.4L807.2 188.1L806.7 188.1L806.2 188.1L805.7 188.1L805.2 188.1L804.7 188.1L804.2 188.4L803.7 188.6L803.2 189.3L802.7 190.7L802.2 193.1L801.7 197L801.2 198.8L800.7 197.5L800.2 191.5L799.7 188.1L799.2 188.1L798.7 188.1L798.2 188.1L797.7 188.1L797.2 188.2L796.7 188.4L796.2 189.1L795.7 190.1L795.2 192.2L794.7 195.4L794.2 197L793.7 196.7L793.2 191.5L792.7 188.1L792.2 188.1L791.7 188.9L791.2 188.7L790.7 188.4L790.2 188.7L789.7 189.3L789.2 190.8L788.7 193.3L788.2 196.4L787.7 200.2L787.2 199.9L786.7 194.9L786.2 189.1L785.7 188.1L785.2 188.1L784.7 188.1L784.2 188.1L783.7 188.1L783.2 188.1L782.7 188.1L782.2 188.1L781.7 188.1L781.2 188.1L780.7 188.1L780.2 188.1L779.7 188.1L779.2 188.1L778.7 188.1L778.2 188.1L777.7 188.1L777.2 188.2L776.7 188.5L776.2 188.8L775.7 190.1L775.2 192.1L774.7 194.5L774.2 199.5L773.7 199L773.2 196.6L772.7 189.9L772.2 189.4L771.7 189.2L771.2 188.1L770.7 188.1L770.2 188.1L769.7 188.1L769.2 188.1L768.7 188.1L768.2 188.1L767.7 188.1L767.2 188.1L766.7 188.1L766.2 188.1L765.7 188.1L765.2 188.1L764.7 188.1L764.2 188.1L763.7 188.1L763.2 188.2L762.7 188.4L762.2 188.9L761.7 189.5L761.2 191.2L760.7 194L760.2 198.5L759.7 202.1L759.2 202.2L758.7 194.7L758.2 188.5L757.7 188.1L757.2 188.1L756.7 188.1L756.2 188.1L755.7 188.1L755.2 188.1L754.7 188.1L754.2 188.1L753.7 188.1L753.2 188.1L752.7 188.1L752.2 188.1L751.7 188.1L751.2 188.1L750.7 188.1L750.2 188.1L749.7 188.3L749.2 188.7L748.7 189.3L748.2 190.6L747.7 193.2L747.2 197.1L746.7 199.4L746.2 197.3L745.7 193.1L745.2 188.8L744.7 189.2L744.2 188.7L743.7 188.1L743.2 188.1L742.7 188.1L742.2 188.1L741.7 188.1L741.2 188.1L740.7 188.1L740.2 188.1L739.7 188.1L739.2 188.1L738.7 188.1L738.2 188.1L737.7 188.1L737.2 188.1L736.7 188.1L736.2 188.3L735.7 188.7L735.2 189.1L734.7 190.1L734.2 192.4L733.7 195.2L733.2 199.6L732.7 200.4L732.2 199.3L731.7 191.4L731.2 188.1L730.7 188.1L730.2 188.1L729.7 188.1L729.2 188.1L728.7 188.1L728.2 188.1L727.7 188.1L727.2 188.1L726.7 188.1L726.2 188.1L725.7 188.1L725.2 188.1L724.7 188.1L724.2 188.1L723.7 188.1L723.2 188.1L722.7 188.1L722.2 188.1L721.7 188.1L721.2 188.7L720.7 190.9L720.2 190.8L719.7 189.1Z" fill="#387ac8"/>
<path d="M829.8 186L830.3 184.4L830.8 184.4L831.3 186.6L831.8 187.1L832.3 187.1L832.8 187.1L833.3 187.1L833.8 187.1L834.3 187.1L834.8 187.1L835.3 187.1L835.8 187.1L836.3 187.1L836.8 187.1L837.3 187.1L837.8 187.1L838.3 187.1L838.8 187.1L839.3 187.1L839.8 187.1L840.3 187.1L840.8 187.1L841.3 187.1L841.8 183.5L842.3 174.5L842.8 173.4L843.3 174L843.8 179L844.3 182.8L844.8 185L845.3 186L845.8 186.5L846.3 186.9L846.8 187.1L847.3 187.1L847.8 187.1L848.3 187.1L848.8 187.1L849.3 187.1L849.8 187.1L850.3 187.1L850.8 187.1L851.3 187.1L851.8 187.1L852.3 187.1L852.8 187.1L853.3 187.1L853.8 187.1L854.3 186.3L854.8 185.8L855.3 186.4L855.8 182L856.3 176.6L856.8 176.6L857.3 178.7L857.8 182.2L858.3 184.8L858.8 186L859.3 186.5L859.8 186.9L860.3 187.1L860.8 187.1L861.3 187.1L861.8 187.1L862.3 187.1L862.8 187.1L863.3 187.1L863.8 187.1L864.3 187.1L864.8 187.1L865.3 187.1L865.8 187.1L866.3 187.1L866.8 187.1L867.3 187.1L867.8 187.1L868.3 186.8L868.8 180.5L869.3 173.6L869.8 173.6L870.3 176.3L870.8 180.8L871.3 184L871.8 185.6L872.3 186.2L872.8 186.7L873.3 187L873.8 187.1L874.3 187.1L874.8 187.1L875.3 187.1L875.8 187.1L876.3 187.1L876.8 187.1L877.3 187.1L877.8 187.1L878.3 187.1L878.8 187.1L879.3 187.1L879.8 187.1L880.3 187.1L880.8 187.1L881.3 187.1L881.8 186L882.3 185.9L882.8 185.4L883.3 178.9L883.8 176.4L884.3 176.4L884.8 180.1L885.3 183.3L885.8 185.3L886.3 186.3L886.8 186.7L887.3 187L887.8 187.1L888.3 187.1L888.8 187.1L889.3 187.1L889.8 187.1L890.3 187.1L890.8 187.1L891.3 187.1L891.8 187.1L892.3 187.1L892.8 187.1L893.3 187.1L893.8 187.1L894.3 187.1L894.8 187.1L895.3 187.1L895.8 187.1L896.3 186.1L896.8 179.3L897.3 174.6L897.8 174.6L898.3 178.1L898.8 181.9L899.3 184.6L899.8 185.9L900.3 186.4L900.8 186.8L901.3 186.6L901.8 186.2L902.3 187.1L902.8 187.1L903.3 184L903.8 178.4L904.3 178.4L904.8 179.5L905.3 182.6L905.8 184.9L906.3 186.1L906.8 186.6L907.3 186.9L907.8 187.1L908.3 187.1L908.8 187.1L909.3 187.1L909.8 187.1L910.3 183.3L910.8 176.6L911.3 176.6L911.8 177.9L912.3 181.6L912.8 184.3L913.3 185.8L913.8 186.5L914.3 186.8L914.8 187.1L915.3 187.1L915.8 187.1L916.3 187.1L916.8 187.1L917.3 187.1L917.8 185.8L918.3 185.3L918.8 185.4L919.3 185.4L919.8 185.2L920.3 185.2L920.8 185.4L921.3 185.3L921.8 185.3L922.3 185.5L922.8 185.3L923.3 185.4L923.8 185.3L924.3 178.6L924.8 173.4L925.3 173.4L925.8 177.2L926.3 181.4L926.8 184.3L927.3 185.8L927.8 186.3L928.3 186.8L928.8 187.1L929.3 187.1L929.8 187.1L930.3 187.1L930.8 187.1L931.3 187.1L931.8 187.1L932.3 187.1L932.8 187.1L933.3 187.1L933.8 187.1L934.3 187.1L934.8 187.1L935.3 187.1L935.8 187.1L936.3 187.1L936.8 187.1L937.3 187.1L937.8 187.1L938.3 187.1L938.8 187.1L939.3 187.1L939.8 187.1L939.8 188.1L939.3 188.1L938.8 188.1L938.3 188.1L937.8 188.1L937.3 188.1L936.8 188.1L936.3 188.1L935.8 188.1L935.3 188.1L934.8 188.1L934.3 188.1L933.8 188.1L933.3 188.1L932.8 188.1L932.3 188.1L931.8 188.1L931.3 188.1L930.8 188.1L930.3 188.1L929.8 188.1L929.3 188.1L928.8 188.2L928.3 188.5L927.8 189L927.3 189.5L926.8 190.8L926.3 193.3L925.8 198.7L925.3 201.1L924.8 202.5L924.3 195.7L923.8 189.9L923.3 189.7L922.8 189.9L922.3 189.5L921.8 189.7L921.3 190L920.8 189.6L920.3 190.1L919.8 189.8L919.3 189.9L918.8 189.7L918.3 189.8L917.8 189.4L917.3 188.1L916.8 188.1L916.3 188.1L915.8 188.1L915.3 188.1L914.8 188.1L914.3 188.4L913.8 188.6L913.3 189.3L912.8 190.7L912.3 193.1L911.8 197L911.3 198.8L910.8 197.5L910.3 191.5L909.8 188.1L909.3 188.1L908.8 188.1L908.3 188.1L907.8 188.1L907.3 188.2L906.8 188.4L906.3 189.1L905.8 190.1L905.3 192.2L904.8 195.4L904.3 197L903.8 196.7L903.3 191.5L902.8 188.1L902.3 188.1L901.8 188.9L901.3 188.7L900.8 188.4L900.3 188.7L899.8 189.3L899.3 190.8L898.8 193.3L898.3 196.4L897.8 200.2L897.3 199.9L896.8 194.9L896.3 189.1L895.8 188.1L895.3 188.1L894.8 188.1L894.3 188.1L893.8 188.1L893.3 188.1L892.8 188.1L892.3 188.1L891.8 188.1L891.3 188.1L890.8 188.1L890.3 188.1L889.8 188.1L889.3 188.1L888.8 188.1L888.3 188.1L887.8 188.1L887.3 188.2L886.8 188.5L886.3 188.8L885.8 190.1L885.3 192.1L884.8 194.5L884.3 199.5L883.8 199L883.3 196.6L882.8 189.9L882.3 189.4L881.8 189.2L881.3 188.1L880.8 188.1L880.3 188.1L879.8 188.1L879.3 188.1L878.8 188.1L878.3 188.1L877.8 188.1L877.3 188.1L876.8 188.1L876.3 188.1L875.8 188.1L875.3 188.1L874.8 188.1L874.3 188.1L873.8 188.1L873.3 188.2L872.8 188.4L872.3 188.9L871.8 189.5L871.3 191.2L870.8 194L870.3 198.5L869.8 202.1L869.3 202.2L868.8 194.7L868.3 188.5L867.8 188.1L867.3 188.1L866.8 188.1L866.3 188.1L865.8 188.1L865.3 188.1L864.8 188.1L864.3 188.1L863.8 188.1L863.3 188.1L862.8 188.1L862.3 188.1L861.8 188.1L861.3 188.1L860.8 188.1L860.3 188.1L859.8 188.3L859.3 188.7L858.8 189.3L858.3 190.6L857.8 193.2L857.3 197.1L856.8 199.4L856.3 197.3L855.8 193.1L855.3 188.8L854.8 189.2L854.3 188.7L853.8 188.1L853.3 188.1L852.8 188.1L852.3 188.1L851.8 188.1L851.3 188.1L850.8 188.1L850.3 188.1L849.8 188.1L849.3 188.1L848.8 188.1L848.3 188.1L847.8 188.1L847.3 188.1L846.8 188.1L846.3 188.3L845.8 188.7L845.3 189.1L844.8 190.1L844.3 192.4L843.8 195.2L843.3 199.6L842.8 200.4L842.3 199.3L841.8 191.4L841.3 188.1L840.8 188.1L840.3 188.1L839.8 188.1L839.3 188.1L838.8 188.1L838.3 188.1L837.8 188.1L837.3 188.1L836.8 188.1L836.3 188.1L835.8 188.1L835.3 188.1L834.8 188.1L834.3 188.1L833.8 188.1L833.3 188.1L832.8 188.1L832.3 188.1L831.8 188.1L831.3 188.7L830.8 190.9L830.3 190.8L829.8 189.1Z" fill="#387ac8"/>
<path d="M939.9 186L940.4 184.4L940.9 184.4L941.4 186.6L941.9 187.1L942.4 187.1L942.9 187.1L943.4 187.1L943.9 187.1L944.4 187.1L944.9 187.1L945.4 187.1L945.9 187.1L946.4 187.1L946.9 187.1L947.4 187.1L947.9 187.1L948.4 187.1L948.9 187.1L949.4 187.1L949.9 187.1L950.4 187.1L950.9 187.1L951.4 187.1L951.9 183.5L952.4 174.5L952.9 173.4L953.4 174L953.9 179L954.4 182.8L954.9 185L955.4 186L955.9 186.5L956.4 186.9L956.9 187.1L957.4 187.1L957.9 187.1L958.4 187.1L958.9 187.1L959.4 187.1L959.9 187.1L960.4 187.1L960.9 187.1L961.4 187.1L961.9 187.1L962.4 187.1L962.9 187.1L963.4 187.1L963.9 187.1L964.4 186.3L964.9 185.8L965.4 186.4L965.9 182L966.4 176.6L966.9 176.6L967.4 178.7L967.9 182.2L968.4 184.8L968.9 186L969.4 186.5L969.9 186.9L970.4 187.1L970.9 187.1L971.4 187.1L971.9 187.1L972.4 187.1L972.9 187.1L973.4 187.1L973.9 187.1L974.4 187.1L974.9 187.1L975.4 187.1L975.9 187.1L976.4 187.1L976.9 187.1L977.4 187.1L977.9 187.1L978.4 186.8L978.9 180.5L979.4 173.6L979.9 173.6L980.4 176.3L980.9 180.8L981.4 184L981.9 185.6L982.4 186.2L982.9 186.7L983.4 187L983.9 187.1L984.4 187.1L984.9 187.1L985.4 187.1L985.9 187.1L986.4 187.1L986.9 187.1L987.4 187.1L987.9 187.1L988.4 187.1L988.9 187.1L989.4 187.1L989.9 187.1L990.4 187.1L990.9 187.1L991.4 187.1L991.9 186L992.4 185.9L992.9 185.4L993.4 178.9L993.9 176.4L994.4 176.4L994.9 180.1L995.4 183.3L995.9 185.3L996.4 186.3L996.9 186.7L997.4 187L997.9 187.1L998.4 187.1L998.9 187.1L999.4 187.1L999.9 187.1L1000.4 187.1L1000.9 187.1L1001.4 187.1L1001.9 187.1L1002.4 187.1L1002.9 187.1L1003.4 187.1L1003.9 187.1L1004.4 187.1L1004.9 187.1L1005.4 187.1L1005.9 187.1L1006.4 186.1L1006.9 179.3L1007.4 174.6L1007.9 174.6L1008.4 178.1L1008.9 181.9L1009.4 184.6L1009.9 185.9L1010.4 186.4L1010.9 186.8L1011.4 186.6L1011.9 186.2L1012.4 187.1L1012.4 188.1L1011.9 188.9L1011.4 188.7L1010.9 188.4L1010.4 188.7L1009.9 189.3L1009.4 190.8L1008.9 193.3L1008.4 196.4L1007.9 200.2L1007.4 199.9L1006.9 194.9L1006.4 189.1L1005.9 188.1L1005.4 188.1L1004.9 188.1L1004.4 188.1L1003.9 188.1L1003.4 188.1L1002.9 188.1L1002.4 188.1L1001.9 188.1L1001.4 188.1L1000.9 188.1L1000.4 188.1L999.9 188.1L999.4 188.1L998.9 188.1L998.4 188.1L997.9 188.1L997.4 188.2L996.9 188.5L996.4 188.8L995.9 190.1L995.4 192.1L994.9 194.5L994.4 199.5L993.9 199L993.4 196.6L992.9 189.9L992.4 189.4L991.9 189.2L991.4 188.1L990.9 188.1L990.4 188.1L989.9 188.1L989.4 188.1L988.9 188.1L988.4 188.1L987.9 188.1L987.4 188.1L986.9 188.1L986.4 188.1L985.9 188.1L985.4 188.1L984.9 188.1L984.4 188.1L983.9 188.1L983.4 188.2L982.9 188.4L982.4 188.9L981.9 189.5L981.4 191.2L980.9 194L980.4 198.5L979.9 202.1L979.4 202.2L978.9 194.7L978.4 188.5L977.9 188.1L977.4 188.1L976.9 188.1L976.4 188.1L975.9 188.1L975.4 188.1L974.9 188.1L974.4 188.1L973.9 188.1L973.4 188.1L972.9 188.1L972.4 188.1L971.9 188.1L971.4 188.1L970.9 188.1L970.4 188.1L969.9 188.3L969.4 188.7L968.9 189.3L968.4 190.6L967.9 193.2L967.4 197.1L966.9 199.4L966.4 197.3L965.9 193.1L965.4 188.8L964.9 189.2L964.4 188.7L963.9 188.1L963.4 188.1L962.9 188.1L962.4 188.1L961.9 188.1L961.4 188.1L960.9 188.1L960.4 188.1L959.9 188.1L959.4 188.1L958.9 188.1L958.4 188.1L957.9 188.1L957.4 188.1L956.9 188.1L956.4 188.3L955.9 188.7L955.4 189.1L954.9 190.1L954.4 192.4L953.9 195.2L953.4 199.6L952.9 200.4L952.4 199.3L951.9 191.4L951.4 188.1L950.9 188.1L950.4 188.1L949.9 188.1L949.4 188.1L948.9 188.1L948.4 188.1L947.9 188.1L947.4 188.1L946.9 188.1L946.4 188.1L945.9 188.1L945.4 188.1L944.9 188.1L944.4 188.1L943.9 188.1L943.4 188.1L942.9 188.1L942.4 188.1L941.9 188.1L941.4 188.7L940.9 190.9L940.4 190.8L939.9 189.1Z" fill="#387ac8"/>
<path d="M277.6 215.4l1.7 1.9l1.7-1.9zM277.6 271.4l1.7-1.9l1.7 1.9z" fill="#141616"/>
<path d="M169.7 248.9L170.2 243.1L170.7 243.1L171.2 243.3L171.7 243.1L172.2 245.9L172.7 249.5L173.2 249.5L173.7 249.5L174.2 243.5L174.7 243.5L175.2 245L175.7 248.3L176.2 249.5L176.7 243L177.2 243L177.7 244.6L178.2 248.2L178.7 248L179.2 244.5L179.7 244.5L180.2 247.1L180.7 249.3L181.2 249.5L181.7 243.5L182.2 243.5L182.7 245L183.2 248.3L183.7 249.5L184.2 249.5L184.7 249.5L185.2 249.5L185.7 249.5L186.2 249.5L186.7 249.5L187.2 249.5L187.7 249.5L188.2 242.5L188.7 242.5L189.2 244.2L189.7 248.1L190.2 249.5L190.7 249.5L191.2 249.5L191.7 249.5L192.2 249.5L192.7 249.5L193.2 249.5L193.7 249.5L194.2 249.5L194.7 245.9L195.2 243L195.7 243L196.2 247L196.7 249.4L197.2 249.5L197.7 249.5L198.2 249.5L198.7 249.5L199.2 249.5L199.7 249.5L200.2 249.5L200.7 249.5L201.2 249.5L201.7 249.5L202.2 249.5L202.7 249.5L203.2 249.5L203.7 249.5L204.2 249.5L204.7 249.5L205.2 247.3L205.7 242.5L206.2 242.5L206.7 246L207.2 249L207.7 249.5L208.2 249.5L208.7 249.5L209.2 249.5L209.7 249.5L210.2 249.5L210.7 249.5L211.2 249.5L211.7 249.5L212.2 249.5L212.7 249.5L213.2 249.5L213.7 249.5L214.2 249.5L214.7 249.5L215.2 249.5L215.7 249.5L216.2 249.5L216.7 249.5L217.2 249.5L217.7 249.5L218.2 249.5L218.7 249.5L219.2 249.5L219.7 249.5L220.2 249.5L220.7 249.5L221.2 249.5L221.7 249.5L222.2 248.6L222.7 243L223.2 241.7L223.7 241.4L224.2 241.6L224.7 242.7L225.2 244.9L225.7 245.1L226.2 245.9L226.7 246.2L227.2 247.5L227.7 249.5L228.2 249.5L228.7 249.5L229.2 249.5L229.7 244L230.2 244L230.7 245.3L231.2 248.5L231.7 247.7L232.2 243.5L232.7 243.5L233.2 246.6L233.7 245.7L234.2 245L234.7 245.4L235.2 248.3L235.7 249.5L236.2 249.5L236.7 249.5L237.2 249.5L237.7 249.5L238.2 249.5L238.7 249.5L239.2 248.8L239.7 243L240.2 243L240.7 245.5L241.2 248.7L241.7 249.5L242.2 248.9L242.7 243.5L243.2 243.5L243.7 245.8L244.2 248.8L244.7 249.5L245.2 249.5L245.7 249.5L246.2 249.5L246.7 249.5L247.2 249.5L247.7 249.5L248.2 249.5L248.7 249.5L249.2 249.5L249.7 249.5L250.2 242.5L250.7 242.5L251.2 244.2L251.7 248.1L252.2 249.5L252.7 249.5L253.2 249.5L253.7 249.5L254.2 249.5L254.7 249.5L255.2 249.5L255.7 249.5L256.2 249.5L256.7 249.5L257.2 249.5L257.7 249.5L258.2 249.5L258.7 249.5L259.2 249.5L259.7 249.5L260.2 249.5L260.7 244L261.2 243L261.7 243.5L262.2 247.7L262.7 249.5L263.2 249.5L263.7 249.5L264.2 249.5L264.7 249.5L265.2 249.5L265.7 249.5L266.2 249.5L266.7 249.5L267.2 249.5L267.7 249.5L268.2 249.5L268.7 249.5L269.2 249.5L269.7 249.5L270.2 249.5L270.7 249.5L271.2 242.5L271.7 242.5L272.2 244.2L272.7 248.1L273.2 249.5L273.7 243.2L274.2 242L274.7 242.6L275.2 247.3L275.7 248.8L276.2 243L276.7 243L277.2 245.5L277.7 248.7L278.2 249.5L278.7 249.5L279.2 249.5L279.2 250.5L278.7 250.5L278.2 250.5L277.7 251.4L277.2 254.8L276.7 257.2L276.2 257.3L275.7 251.3L275.2 252.4L274.7 257.6L274.2 258.3L273.7 256.8L273.2 250.5L272.7 252L272.2 255.2L271.7 257.4L271.2 257.2L270.7 250.5L270.2 250.5L269.7 250.5L269.2 250.5L268.7 250.5L268.2 250.5L267.7 250.5L267.2 250.5L266.7 250.5L266.2 250.5L265.7 250.5L265.2 250.5L264.7 250.5L264.2 250.5L263.7 250.5L263.2 250.5L262.7 250.5L262.2 252.5L261.7 255.7L261.2 256.9L260.7 256.4L260.2 250.5L259.7 250.5L259.2 250.5L258.7 250.5L258.2 250.5L257.7 250.5L257.2 250.5L256.7 250.5L256.2 250.5L255.7 250.5L255.2 250.5L254.7 250.5L254.2 250.5L253.7 250.5L253.2 250.5L252.7 250.5L252.2 250.5L251.7 251.9L251.2 256.3L250.7 257.1L250.2 256.9L249.7 250.5L249.2 250.5L248.7 250.5L248.2 250.5L247.7 250.5L247.2 250.5L246.7 250.5L246.2 250.5L245.7 250.5L245.2 250.5L244.7 250.5L244.2 251.2L243.7 254.4L243.2 256L242.7 256.8L242.2 251L241.7 250.5L241.2 251.4L240.7 254.4L240.2 256.8L239.7 257.5L239.2 251.1L238.7 250.5L238.2 250.5L237.7 250.5L237.2 250.5L236.7 250.5L236.2 250.5L235.7 250.5L235.2 251.8L234.7 254.9L234.2 255.1L233.7 253.9L233.2 253.1L232.7 256.9L232.2 256L231.7 252.1L231.2 251.4L230.7 254.3L230.2 256.3L229.7 255.8L229.2 250.5L228.7 250.5L228.2 250.5L227.7 250.5L227.2 252.4L226.7 253.6L226.2 254.2L225.7 255.1L225.2 255.2L224.7 257.3L224.2 258.4L223.7 258.2L223.2 259L222.7 256.5L222.2 251.2L221.7 250.5L221.2 250.5L220.7 250.5L220.2 250.5L219.7 250.5L219.2 250.5L218.7 250.5L218.2 250.5L217.7 250.5L217.2 250.5L216.7 250.5L216.2 250.5L215.7 250.5L215.2 250.5L214.7 250.5L214.2 250.5L213.7 250.5L213.2 250.5L212.7 250.5L212.2 250.5L211.7 250.5L211.2 250.5L210.7 250.5L210.2 250.5L209.7 250.5L209.2 250.5L208.7 250.5L208.2 250.5L207.7 250.5L207.2 251L206.7 253.8L206.2 256.7L205.7 257.6L205.2 252.8L204.7 250.5L204.2 250.5L203.7 250.5L203.2 250.5L202.7 250.5L202.2 250.5L201.7 250.5L201.2 250.5L200.7 250.5L200.2 250.5L199.7 250.5L199.2 250.5L198.7 250.5L198.2 250.5L197.7 250.5L197.2 250.5L196.7 250.6L196.2 253L195.7 257.1L195.2 257.1L194.7 254.3L194.2 250.5L193.7 250.5L193.2 250.5L192.7 250.5L192.2 250.5L191.7 250.5L191.2 250.5L190.7 250.5L190.2 250.5L189.7 251.7L189.2 255.3L188.7 256.6L188.2 256.9L187.7 250.5L187.2 250.5L186.7 250.5L186.2 250.5L185.7 250.5L185.2 250.5L184.7 250.5L184.2 250.5L183.7 250.5L183.2 251.6L182.7 255.2L182.2 256.4L181.7 256.4L181.2 250.5L180.7 250.7L180.2 252.6L179.7 255L179.2 255.4L178.7 251.9L178.2 251.7L177.7 255.1L177.2 256.3L176.7 256.3L176.2 250.5L175.7 251.6L175.2 254.5L174.7 256.5L174.2 256.3L173.7 250.5L173.2 250.5L172.7 250.5L172.2 254.2L171.7 257.2L171.2 257.2L170.7 256.7L170.2 256.8L169.7 251Z" fill="#5cabf8"/>
<path d="M279.3 248.9L279.8 243.1L280.3 243.1L280.8 243.3L281.3 243.1L281.8 245.9L282.3 249.5L282.8 249.5L283.3 249.5L283.8 243.5L284.3 243.5L284.8 245L285.3 248.3L285.8 249.5L286.3 243L286.8 243L287.3 244.6L287.8 248.2L288.3 248L288.8 244.5L289.3 244.5L289.8 247.1L290.3 249.3L290.8 249.5L291.3 243.5L291.8 243.5L292.3 245L292.8 248.3L293.3 249.5L293.8 249.5L294.3 249.5L294.8 249.5L295.3 249.5L295.8 249.5L296.3 249.5L296.8 249.5L297.3 249.5L297.8 242.5L298.3 242.5L298.8 244.2L299.3 248.1L299.8 249.5L300.3 249.5L300.8 249.5L301.3 249.5L301.8 249.5L302.3 249.5L302.8 249.5L303.3 249.5L303.8 249.5L304.3 245.9L304.8 243L305.3 243L305.8 247L306.3 249.4L306.8 249.5L307.3 249.5L307.8 249.5L308.3 249.5L308.8 249.5L309.3 249.5L309.8 249.5L310.3 249.5L310.8 249.5L311.3 249.5L311.8 249.5L312.3 249.5L312.8 249.5L313.3 249.5L313.8 249.5L314.3 249.5L314.8 247.3L315.3 242.5L315.8 242.5L316.3 246L316.8 249L317.3 249.5L317.8 249.5L318.3 249.5L318.8 249.5L319.3 249.5L319.8 249.5L320.3 249.5L320.8 249.5L321.3 249.5L321.8 249.5L322.3 249.5L322.8 249.5L323.3 249.5L323.8 249.5L324.3 249.5L324.8 249.5L325.3 249.5L325.8 249.5L326.3 249.5L326.8 249.5L327.3 249.5L327.8 249.5L328.3 249.5L328.8 249.5L329.3 249.5L329.8 249.5L330.3 249.5L330.8 249.5L331.3 249.5L331.8 248.6L332.3 243L332.8 241.7L333.3 241.4L333.8 241.6L334.3 242.7L334.8 244.9L335.3 245.1L335.8 245.9L336.3 246.2L336.8 247.5L337.3 249.5L337.8 249.5L338.3 249.5L338.8 249.5L339.3 244L339.8 244L340.3 245.3L340.8 248.5L341.3 247.7L341.8 243.5L342.3 243.5L342.8 246.6L343.3 245.7L343.8 245L344.3 245.4L344.8 248.3L345.3 249.5L345.8 249.5L346.3 249.5L346.8 249.5L346.8 250.5L346.3 250.5L345.8 250.5L345.3 250.5L344.8 251.8L344.3 254.9L343.8 255.1L343.3 253.9L342.8 253.1L342.3 256.9L341.8 256L341.3 252.1L340.8 251.4L340.3 254.3L339.8 256.3L339.3 255.8L338.8 250.5L338.3 250.5L337.8 250.5L337.3 250.5L336.8 252.4L336.3 253.6L335.8 254.2L335.3 255.1L334.8 255.2L334.3 257.3L333.8 258.4L333.3 258.2L332.8 259L332.3 256.5L331.8 251.2L331.3 250.5L330.8 250.5L330.3 250.5L329.8 250.5L329.3 250.5L328.8 250.5L328.3 250.5L327.8 250.5L327.3 250.5L326.8 250.5L326.3 250.5L325.8 250.5L325.3 250.5L324.8 250.5L324.3 250.5L323.8 250.5L323.3 250.5L322.8 250.5L322.3 250.5L321.8 250.5L321.3 250.5L320.8 250.5L320.3 250.5L319.8 250.5L319.3 250.5L318.8 250.5L318.3 250.5L317.8 250.5L317.3 250.5L316.8 251L316.3 253.8L315.8 256.7L315.3 257.6L314.8 252.8L314.3 250.5L313.8 250.5L313.3 250.5L312.8 250.5L312.3 250.5L311.8 250.5L311.3 250.5L310.8 250.5L310.3 250.5L309.8 250.5L309.3 250.5L308.8 250.5L308.3 250.5L307.8 250.5L307.3 250.5L306.8 250.5L306.3 250.6L305.8 253L305.3 257.1L304.8 257.1L304.3 254.3L303.8 250.5L303.3 250.5L302.8 250.5L302.3 250.5L301.8 250.5L301.3 250.5L300.8 250.5L300.3 250.5L299.8 250.5L299.3 251.7L298.8 255.3L298.3 256.6L297.8 256.9L297.3 250.5L296.8 250.5L296.3 250.5L295.8 250.5L295.3 250.5L294.8 250.5L294.3 250.5L293.8 250.5L293.3 250.5L292.8 251.6L292.3 255.2L291.8 256.4L291.3 256.4L290.8 250.5L290.3 250.7L289.8 252.6L289.3 255L288.8 255.4L288.3 251.9L287.8 251.7L287.3 255.1L286.8 256.3L286.3 256.3L285.8 250.5L285.3 251.6L284.8 254.5L284.3 256.5L283.8 256.3L283.3 250.5L282.8 250.5L282.3 250.5L281.8 254.2L281.3 257.2L280.8 257.2L280.3 256.7L279.8 256.8L279.3 251Z" fill="#387ac8"/>
<path d="M882.85 215.4l1.7 1.9l1.7-1.9zM882.85 271.4l1.7-1.9l1.7 1.9z" fill="#141616"/>
<path d="M664.9 249.5L665.4 249.5L665.9 249.5L666.4 249.5L666.9 249.5L667.4 249.5L667.9 249.5L668.4 249.5L668.9 249.5L669.4 249.5L669.9 249.5L670.4 249.5L670.9 249.5L671.4 249.5L671.9 249.5L672.4 249.5L672.9 249.5L673.4 249.5L673.9 249.5L674.4 249.5L674.9 249.5L675.4 249.5L675.9 249.5L676.4 249.5L676.9 249.5L677.4 249.5L677.9 249.5L678.4 249.5L678.9 249.5L679.4 249.5L679.9 249.5L680.4 249.5L680.9 249.5L681.4 249.5L681.9 249.5L682.4 249.5L682.9 249.5L683.4 249.5L683.9 235.2L684.4 235.2L684.9 239.1L685.4 246.3L685.9 247.1L686.4 247.8L686.9 248.6L687.4 249.4L687.9 249.5L688.4 249.5L688.9 249.5L689.4 249.5L689.9 249.5L690.4 242.4L690.9 235L691.4 235L691.9 244.9L692.4 247L692.9 247.9L693.4 248.8L693.9 249.5L694.4 249.5L694.9 249.5L695.4 249.5L695.9 249.5L696.4 249.5L696.9 249.5L697.4 249.5L697.9 249.5L698.4 249.5L698.9 249.5L699.4 249.5L699.9 249.5L700.4 249.5L700.9 249.5L701.4 249L701.9 235.6L702.4 235.6L702.9 241.6L703.4 245.8L703.9 246.2L704.4 246.7L704.9 247.1L705.4 247.6L705.9 248L706.4 248.5L706.9 249L707.4 249.5L707.9 249.5L708.4 249.5L708.9 249.5L709.4 249.5L709.9 249.5L710.4 249.5L710.9 249.5L711.4 249.5L711.9 249.5L712.4 249.5L712.9 249.5L713.4 249.5L713.9 249.5L714.4 249.5L714.9 249.5L715.4 249.5L715.9 249.5L716.4 249.5L716.9 249.5L717.4 249.5L717.9 249.5L718.4 249.5L718.9 249.5L719.4 249.5L719.9 249.5L720.4 249.5L720.9 249.5L721.4 249.5L721.9 249.5L722.4 249.5L722.9 249.5L723.4 249.5L723.9 249.5L724.4 249.5L724.9 249.5L725.4 249.5L725.9 249.5L726.4 249.5L726.9 249.5L727.4 249.5L727.9 249.5L728.4 249.5L728.9 249.5L729.4 249.5L729.9 249.5L730.4 249.5L730.9 249.5L731.4 249.5L731.9 249.5L732.4 249.5L732.9 249.5L733.4 249.5L733.9 249.5L734.4 249.5L734.9 249.5L735.4 249.5L735.9 249.5L736.4 249.5L736.9 249.5L737.4 249.5L737.9 249.5L738.4 249.5L738.9 246.2L739.4 234.9L739.9 234.9L740.4 243.2L740.9 247.2L741.4 248.2L741.9 249.3L742.4 249.5L742.9 249.5L743.4 249.5L743.9 249.5L744.4 249.5L744.9 249.5L745.4 249.5L745.9 235.4L746.4 235.4L746.9 239.3L747.4 246.3L747.9 247.1L748.4 247.8L748.9 248.6L749.4 249.4L749.9 249.5L750.4 249.5L750.9 249.5L751.4 249.5L751.9 249.5L752.4 249.5L752.9 249.5L753.4 249.5L753.9 249.5L754.4 249.5L754.9 249.5L755.4 249.5L755.9 249.5L756.4 235.2L756.9 235.2L757.4 239.2L757.9 245.7L758.4 246.2L758.9 246.6L759.4 247L759.9 247.5L760.4 247.9L760.9 248.4L761.4 248.9L761.9 249.4L762.4 249.5L762.9 249.5L763.4 249.5L763.9 249.5L764.4 249.5L764.9 249.5L765.4 249.5L765.9 249.5L766.4 249.5L766.9 242.3L767.4 234.9L767.9 234.9L768.4 244.9L768.9 246L769.4 246.4L769.9 246.9L770.4 247.3L770.9 247.8L771.4 248.2L771.9 248.7L772.4 249.2L772.9 249.5L773.4 249.5L773.9 249.5L774.4 249.5L774.9 249.5L775.4 249.5L775.9 249.5L776.4 249.5L776.9 249.5L777.4 249.5L777.9 249.5L778.4 249.5L778.9 249.5L779.4 249.5L779.9 249.5L780.4 249.5L780.9 249.5L781.4 249.5L781.9 249.5L782.4 249.5L782.9 249.5L783.4 249.5L783.9 249.5L784.4 249.5L784.9 249.5L785.4 249.5L785.9 249.5L786.4 249.5L786.9 249.5L787.4 249.5L787.9 249.5L788.4 249.5L788.9 249.5L789.4 249.5L789.9 249.5L790.4 249.5L790.9 249.5L791.4 249.5L791.9 249.5L792.4 249.5L792.9 249.5L793.4 249.5L793.9 249.5L794.4 249.5L794.9 238L795.4 235.4L795.9 236.8L796.4 246.4L796.9 247.2L797.4 248.1L797.9 249L798.4 249.5L798.9 249.5L799.4 249.5L799.9 249.5L800.4 249.5L800.9 249.5L801.4 246.2L801.9 234.8L802.4 234.8L802.9 243.2L803.4 246.6L803.9 247.4L804.4 248.1L804.9 248.9L805.4 249.5L805.9 249.5L806.4 249.5L806.9 249.5L807.4 249.5L807.9 249.5L808.4 249.5L808.9 249.5L809.4 249.5L809.9 249.5L810.4 249.5L810.9 249.5L811.4 249.5L811.9 246.3L812.4 235.3L812.9 235.3L813.4 243.4L813.9 246L814.4 246.5L814.9 247L815.4 247.5L815.9 248L816.4 248.6L816.9 249.1L817.4 249.5L817.9 249.5L818.4 249.5L818.9 249.5L819.4 249.5L819.9 249.5L820.4 249.5L820.9 249.5L821.4 249.5L821.9 249.5L822.4 249.5L822.9 249.5L823.4 249.5L823.9 249.5L824.4 249.5L824.9 249.5L825.4 249.5L825.9 249.5L826.4 249.5L826.9 249.5L827.4 249.5L827.9 249.5L828.4 249.5L828.9 249.5L829.4 249.5L829.9 249.5L830.4 249.5L830.9 249.5L831.4 249.5L831.9 249.5L832.4 249.5L832.9 249.5L833.4 249.5L833.9 249.5L834.4 249.5L834.9 249.5L835.4 249.5L835.9 249.5L836.4 249.5L836.9 249.5L837.4 249.5L837.9 249.5L838.4 249.5L838.9 249.5L839.4 249.5L839.9 249.5L840.4 249.5L840.9 249.5L841.4 249.5L841.9 249.5L842.4 249.5L842.9 249.5L843.4 249.5L843.9 249.5L844.4 249.5L844.9 249.5L845.4 249.5L845.9 249.5L846.4 249.5L846.9 249.5L847.4 249.5L847.9 249.5L848.4 249.5L848.9 249.5L849.4 242.3L849.9 234.9L850.4 234.9L850.9 244.9L851.4 246.7L851.9 247.4L852.4 248.1L852.9 248.8L853.4 249.5L853.9 249.5L854.4 249.5L854.9 249.5L855.4 249.5L855.9 248.9L856.4 234.9L856.9 234.9L857.4 241.2L857.9 246.4L858.4 247.1L858.9 247.8L859.4 248.5L859.9 249.3L860.4 249.5L860.9 249.5L861.4 249.5L861.9 249.5L862.4 249.5L862.9 249.5L863.4 244.3L863.9 243L864.4 243.7L864.9 248.4L865.4 249.5L865.9 249.5L866.4 249.5L866.9 249.5L867.4 237.9L867.9 235.3L868.4 236.7L868.9 245.9L869.4 246.4L869.9 247L870.4 247.6L870.9 248.1L871.4 248.8L871.9 249.4L872.4 249.5L872.9 249.5L873.4 249.5L873.9 249.5L874.4 249.5L874.9 249.5L875.4 249.5L875.9 249.5L876.4 249.5L876.9 249.5L877.4 238.3L877.9 235.8L878.4 237.1L878.9 245.6L879.4 246.1L879.9 246.5L880.4 246.9L880.9 247.4L881.4 247.8L881.9 248.3L882.4 248.8L882.9 249.3L883.4 249.5L883.9 249.5L884.4 249.5L884.4 250.5L883.9 250.5L883.4 250.5L882.9 250.7L882.4 251.2L881.9 251.8L881.4 252.1L880.9 252.8L880.4 253L879.9 253.5L879.4 253.8L878.9 254.6L878.4 262.4L877.9 264.4L877.4 261.3L876.9 250.5L876.4 250.5L875.9 250.5L875.4 250.5L874.9 250.5L874.4 250.5L873.9 250.5L873.4 250.5L872.9 250.5L872.4 250.5L871.9 250.6L871.4 251.3L870.9 251.9L870.4 252.4L869.9 253.2L869.4 253.5L868.9 253.9L868.4 262.1L867.9 263L867.4 261.1L866.9 250.5L866.4 250.5L865.9 250.5L865.4 250.5L864.9 251.4L864.4 256.3L863.9 257.5L863.4 255.2L862.9 250.5L862.4 250.5L861.9 250.5L861.4 250.5L860.9 250.5L860.4 250.5L859.9 250.7L859.4 251.4L858.9 252.2L858.4 252.9L857.9 253.5L857.4 258.6L856.9 263.5L856.4 266.2L855.9 251.1L855.4 250.5L854.9 250.5L854.4 250.5L853.9 250.5L853.4 250.5L852.9 251.1L852.4 251.8L851.9 252.5L851.4 252.9L850.9 255.3L850.4 264.7L849.9 266.1L849.4 257.5L848.9 250.5L848.4 250.5L847.9 250.5L847.4 250.5L846.9 250.5L846.4 250.5L845.9 250.5L845.4 250.5L844.9 250.5L844.4 250.5L843.9 250.5L843.4 250.5L842.9 250.5L842.4 250.5L841.9 250.5L841.4 250.5L840.9 250.5L840.4 250.5L839.9 250.5L839.4 250.5L838.9 250.5L838.4 250.5L837.9 250.5L837.4 250.5L836.9 250.5L836.4 250.5L835.9 250.5L835.4 250.5L834.9 250.5L834.4 250.5L833.9 250.5L833.4 250.5L832.9 250.5L832.4 250.5L831.9 250.5L831.4 250.5L830.9 250.5L830.4 250.5L829.9 250.5L829.4 250.5L828.9 250.5L828.4 250.5L827.9 250.5L827.4 250.5L826.9 250.5L826.4 250.5L825.9 250.5L825.4 250.5L824.9 250.5L824.4 250.5L823.9 250.5L823.4 250.5L822.9 250.5L822.4 250.5L821.9 250.5L821.4 250.5L820.9 250.5L820.4 250.5L819.9 250.5L819.4 250.5L818.9 250.5L818.4 250.5L817.9 250.5L817.4 250.5L816.9 250.9L816.4 251.4L815.9 252.1L815.4 252.5L814.9 253.2L814.4 253.6L813.9 254.2L813.4 256.1L812.9 263.5L812.4 263.7L811.9 253.6L811.4 250.5L810.9 250.5L810.4 250.5L809.9 250.5L809.4 250.5L808.9 250.5L808.4 250.5L807.9 250.5L807.4 250.5L806.9 250.5L806.4 250.5L805.9 250.5L805.4 250.5L804.9 251L804.4 251.8L803.9 252.4L803.4 253.5L802.9 256L802.4 264.9L801.9 265.4L801.4 253.5L800.9 250.5L800.4 250.5L799.9 250.5L799.4 250.5L798.9 250.5L798.4 250.5L797.9 251L797.4 252L796.9 252.7L796.4 253.7L795.9 261.9L795.4 263.4L794.9 261.1L794.4 250.5L793.9 250.5L793.4 250.5L792.9 250.5L792.4 250.5L791.9 250.5L791.4 250.5L790.9 250.5L790.4 250.5L789.9 250.5L789.4 250.5L788.9 250.5L788.4 250.5L787.9 250.5L787.4 250.5L786.9 250.5L786.4 250.5L785.9 250.5L785.4 250.5L784.9 250.5L784.4 250.5L783.9 250.5L783.4 250.5L782.9 250.5L782.4 250.5L781.9 250.5L781.4 250.5L780.9 250.5L780.4 250.5L779.9 250.5L779.4 250.5L778.9 250.5L778.4 250.5L777.9 250.5L777.4 250.5L776.9 250.5L776.4 250.5L775.9 250.5L775.4 250.5L774.9 250.5L774.4 250.5L773.9 250.5L773.4 250.5L772.9 250.5L772.4 250.7L771.9 251.3L771.4 251.8L770.9 252.2L770.4 252.4L769.9 253.1L769.4 253.4L768.9 253.8L768.4 254.8L767.9 263.9L767.4 264.9L766.9 257.4L766.4 250.5L765.9 250.5L765.4 250.5L764.9 250.5L764.4 250.5L763.9 250.5L763.4 250.5L762.9 250.5L762.4 250.5L761.9 250.6L761.4 251.1L760.9 251.6L760.4 251.9L759.9 252.7L759.4 253L758.9 253.4L758.4 253.5L757.9 254.4L757.4 259.6L756.9 265.4L756.4 264.1L755.9 250.5L755.4 250.5L754.9 250.5L754.4 250.5L753.9 250.5L753.4 250.5L752.9 250.5L752.4 250.5L751.9 250.5L751.4 250.5L750.9 250.5L750.4 250.5L749.9 250.5L749.4 250.6L748.9 251.3L748.4 252.1L747.9 252.6L747.4 253.6L746.9 260.6L746.4 264.3L745.9 264.2L745.4 250.5L744.9 250.5L744.4 250.5L743.9 250.5L743.4 250.5L742.9 250.5L742.4 250.5L741.9 250.8L741.4 251.6L740.9 252.8L740.4 257L739.9 264.7L739.4 266.2L738.9 253.9L738.4 250.5L737.9 250.5L737.4 250.5L736.9 250.5L736.4 250.5L735.9 250.5L735.4 250.5L734.9 250.5L734.4 250.5L733.9 250.5L733.4 250.5L732.9 250.5L732.4 250.5L731.9 250.5L731.4 250.5L730.9 250.5L730.4 250.5L729.9 250.5L729.4 250.5L728.9 250.5L728.4 250.5L727.9 250.5L727.4 250.5L726.9 250.5L726.4 250.5L725.9 250.5L725.4 250.5L724.9 250.5L724.4 250.5L723.9 250.5L723.4 250.5L722.9 250.5L722.4 250.5L721.9 250.5L721.4 250.5L720.9 250.5L720.4 250.5L719.9 250.5L719.4 250.5L718.9 250.5L718.4 250.5L717.9 250.5L717.4 250.5L716.9 250.5L716.4 250.5L715.9 250.5L715.4 250.5L714.9 250.5L714.4 250.5L713.9 250.5L713.4 250.5L712.9 250.5L712.4 250.5L711.9 250.5L711.4 250.5L710.9 250.5L710.4 250.5L709.9 250.5L709.4 250.5L708.9 250.5L708.4 250.5L707.9 250.5L707.4 250.5L706.9 251L706.4 251.5L705.9 251.9L705.4 252.6L704.9 253.1L704.4 253.6L703.9 253.4L703.4 253.9L702.9 258.6L702.4 265.3L701.9 264.4L701.4 251.1L700.9 250.5L700.4 250.5L699.9 250.5L699.4 250.5L698.9 250.5L698.4 250.5L697.9 250.5L697.4 250.5L696.9 250.5L696.4 250.5L695.9 250.5L695.4 250.5L694.9 250.5L694.4 250.5L693.9 250.5L693.4 251.3L692.9 251.9L692.4 253.1L691.9 255.4L691.4 263.7L690.9 264.7L690.4 258.1L689.9 250.5L689.4 250.5L688.9 250.5L688.4 250.5L687.9 250.5L687.4 250.5L686.9 251.4L686.4 252.2L685.9 252.7L685.4 253.7L684.9 261.1L684.4 264.5L683.9 265.2L683.4 250.5L682.9 250.5L682.4 250.5L681.9 250.5L681.4 250.5L680.9 250.5L680.4 250.5L679.9 250.5L679.4 250.5L678.9 250.5L678.4 250.5L677.9 250.5L677.4 250.5L676.9 250.5L676.4 250.5L675.9 250.5L675.4 250.5L674.9 250.5L674.4 250.5L673.9 250.5L673.4 250.5L672.9 250.5L672.4 250.5L671.9 250.5L671.4 250.5L670.9 250.5L670.4 250.5L669.9 250.5L669.4 250.5L668.9 250.5L668.4 250.5L667.9 250.5L667.4 250.5L666.9 250.5L666.4 250.5L665.9 250.5L665.4 250.5L664.9 250.5Z" fill="#5cabf8"/>
<path d="M884.5 249.5L885 249.5L885.5 249.5L886 249.5L886.5 249.5L887 249.5L887.5 249.5L888 249.5L888.5 249.5L889 249.5L889.5 249.5L890 249.5L890.5 249.5L891 249.5L891.5 249.5L892 249.5L892.5 249.5L893 249.5L893.5 249.5L894 249.5L894.5 249.5L895 249.5L895.5 249.5L896 249.5L896.5 249.5L897 249.5L897.5 249.5L898 249.5L898.5 249.5L899 249.5L899.5 249.5L900 249.5L900.5 249.5L901 249.5L901.5 249.5L902 249.5L902.5 249.5L903 249.5L903.5 235.2L904 235.2L904.5 239.1L905 246.3L905.5 247.1L906 247.8L906.5 248.6L907 249.4L907.5 249.5L908 249.5L908.5 249.5L909 249.5L909.5 249.5L910 242.4L910.5 235L911 235L911.5 244.9L912 247L912.5 247.9L913 248.8L913.5 249.5L914 249.5L914.5 249.5L915 249.5L915.5 249.5L916 249.5L916.5 249.5L917 249.5L917.5 249.5L918 249.5L918.5 249.5L919 249.5L919.5 249.5L920 249.5L920.5 249.5L921 249L921.5 235.6L922 235.6L922.5 241.6L923 245.8L923.5 246.2L924 246.7L924.5 247.1L925 247.6L925.5 248L926 248.5L926.5 249L927 249.5L927.5 249.5L928 249.5L928.5 249.5L929 249.5L929.5 249.5L930 249.5L930.5 249.5L931 249.5L931.5 249.5L932 249.5L932.5 249.5L933 249.5L933.5 249.5L934 249.5L934.5 249.5L935 249.5L935.5 249.5L936 249.5L936.5 249.5L937 249.5L937.5 249.5L938 249.5L938.5 249.5L939 249.5L939.5 249.5L940 249.5L940.5 249.5L941 249.5L941.5 249.5L942 249.5L942.5 249.5L943 249.5L943.5 249.5L944 249.5L944.5 249.5L945 249.5L945.5 249.5L946 249.5L946.5 249.5L947 249.5L947.5 249.5L948 249.5L948.5 249.5L949 249.5L949.5 249.5L950 249.5L950.5 249.5L951 249.5L951.5 249.5L952 249.5L952.5 249.5L953 249.5L953.5 249.5L954 249.5L954.5 249.5L955 249.5L955.5 249.5L956 249.5L956.5 249.5L957 249.5L957.5 249.5L958 249.5L958.5 246.2L959 234.9L959.5 234.9L960 243.2L960.5 247.2L961 248.2L961.5 249.3L962 249.5L962.5 249.5L963 249.5L963.5 249.5L964 249.5L964.5 249.5L965 249.5L965.5 235.4L966 235.4L966.5 239.3L967 246.3L967.5 247.1L968 247.8L968.5 248.6L969 249.4L969.5 249.5L970 249.5L970.5 249.5L971 249.5L971.5 249.5L972 249.5L972.5 249.5L973 249.5L973.5 249.5L974 249.5L974.5 249.5L975 249.5L975.5 249.5L976 235.2L976.5 235.2L977 239.2L977.5 245.7L978 246.2L978.5 246.6L979 247L979.5 247.5L980 247.9L980.5 248.4L981 248.9L981.5 249.4L982 249.5L982.5 249.5L983 249.5L983.5 249.5L984 249.5L984.5 249.5L985 249.5L985.5 249.5L986 249.5L986.5 242.3L987 234.9L987.5 234.9L988 244.9L988.5 246L989 246.4L989.5 246.9L990 247.3L990.5 247.8L991 248.2L991.5 248.7L992 249.2L992.5 249.5L993 249.5L993.5 249.5L994 249.5L994.5 249.5L995 249.5L995.5 249.5L996 249.5L996.5 249.5L997 249.5L997.5 249.5L998 249.5L998.5 249.5L999 249.5L999.5 249.5L1000 249.5L1000.5 249.5L1001 249.5L1001.5 249.5L1002 249.5L1002.5 249.5L1003 249.5L1003.5 249.5L1004 249.5L1004.5 249.5L1005 249.5L1005.5 249.5L1006 249.5L1006.5 249.5L1007 249.5L1007.5 249.5L1008 249.5L1008.5 249.5L1009 249.5L1009.5 249.5L1010 249.5L1010.5 249.5L1011 249.5L1011.5 249.5L1012 249.5L1012.5 249.5L1012.5 250.5L1012 250.5L1011.5 250.5L1011 250.5L1010.5 250.5L1010 250.5L1009.5 250.5L1009 250.5L1008.5 250.5L1008 250.5L1007.5 250.5L1007 250.5L1006.5 250.5L1006 250.5L1005.5 250.5L1005 250.5L1004.5 250.5L1004 250.5L1003.5 250.5L1003 250.5L1002.5 250.5L1002 250.5L1001.5 250.5L1001 250.5L1000.5 250.5L1000 250.5L999.5 250.5L999 250.5L998.5 250.5L998 250.5L997.5 250.5L997 250.5L996.5 250.5L996 250.5L995.5 250.5L995 250.5L994.5 250.5L994 250.5L993.5 250.5L993 250.5L992.5 250.5L992 250.7L991.5 251.3L991 251.8L990.5 252.2L990 252.4L989.5 253.1L989 253.4L988.5 253.8L988 254.8L987.5 263.9L987 264.9L986.5 257.4L986 250.5L985.5 250.5L985 250.5L984.5 250.5L984 250.5L983.5 250.5L983 250.5L982.5 250.5L982 250.5L981.5 250.6L981 251.1L980.5 251.6L980 251.9L979.5 252.7L979 253L978.5 253.4L978 253.5L977.5 254.4L977 259.6L976.5 265.4L976 264.1L975.5 250.5L975 250.5L974.5 250.5L974 250.5L973.5 250.5L973 250.5L972.5 250.5L972 250.5L971.5 250.5L971 250.5L970.5 250.5L970 250.5L969.5 250.5L969 250.6L968.5 251.3L968 252.1L967.5 252.6L967 253.6L966.5 260.6L966 264.3L965.5 264.2L965 250.5L964.5 250.5L964 250.5L963.5 250.5L963 250.5L962.5 250.5L962 250.5L961.5 250.8L961 251.6L960.5 252.8L960 257L959.5 264.7L959 266.2L958.5 253.9L958 250.5L957.5 250.5L957 250.5L956.5 250.5L956 250.5L955.5 250.5L955 250.5L954.5 250.5L954 250.5L953.5 250.5L953 250.5L952.5 250.5L952 250.5L951.5 250.5L951 250.5L950.5 250.5L950 250.5L949.5 250.5L949 250.5L948.5 250.5L948 250.5L947.5 250.5L947 250.5L946.5 250.5L946 250.5L945.5 250.5L945 250.5L944.5 250.5L944 250.5L943.5 250.5L943 250.5L942.5 250.5L942 250.5L941.5 250.5L941 250.5L940.5 250.5L940 250.5L939.5 250.5L939 250.5L938.5 250.5L938 250.5L937.5 250.5L937 250.5L936.5 250.5L936 250.5L935.5 250.5L935 250.5L934.5 250.5L934 250.5L933.5 250.5L933 250.5L932.5 250.5L932 250.5L931.5 250.5L931 250.5L930.5 250.5L930 250.5L929.5 250.5L929 250.5L928.5 250.5L928 250.5L927.5 250.5L927 250.5L926.5 251L926 251.5L925.5 251.9L925 252.6L924.5 253.1L924 253.6L923.5 253.4L923 253.9L922.5 258.6L922 265.3L921.5 264.4L921 251.1L920.5 250.5L920 250.5L919.5 250.5L919 250.5L918.5 250.5L918 250.5L917.5 250.5L917 250.5L916.5 250.5L916 250.5L915.5 250.5L915 250.5L914.5 250.5L914 250.5L913.5 250.5L913 251.3L912.5 251.9L912 253.1L911.5 255.4L911 263.7L910.5 264.7L910 258.1L909.5 250.5L909 250.5L908.5 250.5L908 250.5L907.5 250.5L907 250.5L906.5 251.4L906 252.2L905.5 252.7L905 253.7L904.5 261.1L904 264.5L903.5 265.2L903 250.5L902.5 250.5L902 250.5L901.5 250.5L901 250.5L900.5 250.5L900 250.5L899.5 250.5L899 250.5L898.5 250.5L898 250.5L897.5 250.5L897 250.5L896.5 250.5L896 250.5L895.5 250.5L895 250.5L894.5 250.5L894 250.5L893.5 250.5L893 250.5L892.5 250.5L892 250.5L891.5 250.5L891 250.5L890.5 250.5L890 250.5L889.5 250.5L889 250.5L888.5 250.5L888 250.5L887.5 250.5L887 250.5L886.5 250.5L886 250.5L885.5 250.5L885 250.5L884.5 250.5Z" fill="#387ac8"/>
<path d="M387.7 277.2l1.7 1.9l1.7-1.9zM387.7 333.2l1.7-1.9l1.7 1.9z" fill="#141616"/>
<path d="M607.9 277.2l1.7 1.9l1.7-1.9zM607.9 333.2l1.7-1.9l1.7 1.9z" fill="#141616"/>
<path d="M828.1 277.2l1.7 1.9l1.7-1.9zM828.1 333.2l1.7-1.9l1.7 1.9z" fill="#141616"/>
<path d="M499.4 369.6L499.9 367.9L500.4 367.2L500.9 366.7L501.4 366.8L501.9 366.9L502.4 366.4L502.9 366.8L503.4 366.9L503.9 367.1L504.4 366.3L504.9 367.6L505.4 369.4L505.9 371.5L506.4 372.3L506.9 372.7L507.4 372.7L507.9 372.7L508.4 372.7L508.9 372.7L509.4 372.7L509.9 372.7L510.4 372.7L510.9 372.7L511.4 372.7L511.9 372.7L512.4 372.7L512.9 372.7L513.4 372.7L513.9 372.7L514.4 372.7L514.9 372.7L515.4 372.7L515.9 372.7L516.4 372.7L516.9 372.7L517.4 372.7L517.9 372.7L518.4 372.7L518.9 372.7L519.4 372.7L519.9 372.7L520.4 372.7L520.9 372.7L521.4 372.7L521.9 372.7L522.4 372.7L522.9 372.7L523.4 372.7L523.9 372.7L524.4 372.7L524.9 372.7L525.4 372.1L525.9 372.3L526.4 371.1L526.9 369.2L527.4 367.4L527.9 366.1L528.4 365.9L528.9 366.5L529.4 366L529.9 366.1L530.4 366.2L530.9 365.9L531.4 366.4L531.9 366.4L532.4 366.9L532.9 366.5L533.4 366.6L533.9 366.5L534.4 366.7L534.9 366.4L535.4 366.2L535.9 367.1L536.4 367.1L536.9 366.9L537.4 366.7L537.9 366.3L538.4 366.2L538.9 366.2L539.4 366.8L539.9 369.3L540.4 370.9L540.9 372.3L541.4 372.7L541.9 372.7L542.4 372.7L542.9 372.7L543.4 372.7L543.9 372.7L544.4 372.7L544.9 372.7L545.4 372.7L545.9 372.7L546.4 372.7L546.9 372.7L547.4 372.7L547.9 372.7L548.4 372.7L548.9 372.7L549.4 372.7L549.9 372.7L550.4 372.7L550.9 372.7L551.4 372.7L551.9 372.7L552.4 372.7L552.9 372.7L553.4 372.7L553.9 372.7L554.4 372.7L554.9 372.7L555.4 372.7L555.9 372.7L556.4 372.7L556.9 372.7L557.4 372.7L557.9 372.7L558.4 372.7L558.9 372.7L559.4 372.7L559.9 372.7L560.4 372.3L560.9 372.4L561.4 371L561.9 368.9L562.4 367.4L562.9 367.7L563.4 367.3L563.9 367.8L564.4 367.2L564.9 366.9L565.4 369L565.9 370.7L566.4 372.2L566.9 372.7L567.4 372.7L567.9 372.7L568.4 372.7L568.9 372.7L569.4 372.7L569.9 372.7L570.4 372.7L570.9 372.7L571.4 372.7L571.9 372.7L572.4 372.7L572.9 372.7L573.4 372.7L573.9 372.7L574.4 372.2L574.9 371.5L575.4 370.1L575.9 368.4L576.4 366.7L576.9 366.9L577.4 366.7L577.9 366.7L578.4 369L578.9 370.4L579.4 372.2L579.9 372.7L580.4 372.2L580.9 372L581.4 370.3L581.9 368L582.4 366.6L582.9 365.9L583.4 366.3L583.9 366.1L584.4 366.1L584.9 366.9L585.4 366.8L585.9 366.2L586.4 366.8L586.9 366L587.4 366.3L587.9 366.8L588.4 366.6L588.9 365.9L589.4 367L589.9 366.1L590.4 366.1L590.9 366.7L591.4 366.2L591.9 366.2L592.4 365.9L592.9 365.9L593.4 366.5L593.9 366.1L594.4 366.5L594.9 366.2L595.4 366.3L595.9 368L596.4 369.4L596.9 371.3L597.4 372.2L597.9 372.7L598.4 372.7L598.9 372.7L599.4 372.7L599.9 372.7L600.4 372.7L600.9 372.7L601.4 372.2L601.9 372.1L602.4 370.5L602.9 368.8L603.4 366.5L603.9 366.4L604.4 367L604.9 367.3L605.4 366.4L605.9 367.3L606.4 367.2L606.9 366.9L607.4 366.7L607.9 366.3L608.4 366.2L608.9 367.3L609.4 366.5L609.9 367L610.4 366.5L610.9 367.1L611.4 366.9L611.9 366.5L612.4 366.4L612.9 367L613.4 366.3L613.9 366.5L614.4 366.8L614.9 367.2L615.4 366.9L615.9 366.5L616.4 367.2L616.9 366.4L617.4 368.2L617.9 370.2L618.4 372.1L618.9 372.7L619.4 372.7L619.9 372.7L620.4 372.7L620.9 372.7L621.4 372.7L621.9 372.7L622.4 372.7L622.9 372.7L623.4 372.7L623.9 372.7L624.4 372.7L624.9 372.7L625.4 372.7L625.9 372.7L626.4 372.7L626.9 372.7L627.4 372.7L627.9 372.7L628.4 372.7L628.9 372.7L629.4 372.7L629.9 372.7L630.4 372.7L630.9 372.7L631.4 372.7L631.9 372.7L632.4 372.7L632.9 372.7L633.4 372.7L633.9 372.7L634.4 372.7L634.9 372.7L635.4 372.7L635.9 372.7L636.4 372.2L636.9 371.3L637.4 369.5L637.9 367.9L638.4 366.3L638.9 366.6L639.4 367.2L639.9 367.3L640.4 366.9L640.9 367L641.4 366.9L641.9 366.4L642.4 366.2L642.9 366.2L643.4 367.2L643.9 367L644.4 367.3L644.9 366.2L645.4 366.9L645.9 366.7L646.4 367L646.9 366.6L647.4 367.3L647.9 366.3L648.4 366.8L648.9 367L649.4 367.2L649.9 367L650.4 367L650.9 367.1L651.4 367.2L651.9 366.6L652.4 368.7L652.9 370.5L653.4 372.2L653.9 372.7L654.4 372.7L654.9 372.7L655.4 372.7L655.9 372.7L656.4 372.7L656.9 372.7L657.4 372.7L657.9 372.7L658.4 372.7L658.9 372.7L659.4 372.7L659.9 372.7L660.4 372.7L660.9 372.7L661.4 372.7L661.9 372.7L662.4 372.7L662.9 372.7L663.4 372.7L663.9 372.7L664.4 372.7L664.9 372.7L665.4 372.7L665.9 372.7L666.4 372.7L666.9 372.7L667.4 372.7L667.9 372.7L668.4 372.7L668.9 372.7L669.4 372.7L669.9 372.7L670.4 372.2L670.9 372.3L671.4 371.2L671.9 369.4L672.4 367.8L672.9 366.8L673.4 367L673.9 367.1L674.4 366.5L674.9 367.1L675.4 367.5L675.9 367.4L676.4 367.2L676.4 378.6L675.9 378.8L675.4 378.3L674.9 379.6L674.4 379.6L673.9 379.3L673.4 378.6L672.9 379L672.4 378.2L671.9 376.8L671.4 375.3L670.9 374.1L670.4 374.2L669.9 373.7L669.4 373.7L668.9 373.7L668.4 373.7L667.9 373.7L667.4 373.7L666.9 373.7L666.4 373.7L665.9 373.7L665.4 373.7L664.9 373.7L664.4 373.7L663.9 373.7L663.4 373.7L662.9 373.7L662.4 373.7L661.9 373.7L661.4 373.7L660.9 373.7L660.4 373.7L659.9 373.7L659.4 373.7L658.9 373.7L658.4 373.7L657.9 373.7L657.4 373.7L656.9 373.7L656.4 373.7L655.9 373.7L655.4 373.7L654.9 373.7L654.4 373.7L653.9 373.7L653.4 374.1L652.9 375.8L652.4 377.4L651.9 380L651.4 378.7L650.9 379.2L650.4 378.7L649.9 379.5L649.4 378.9L648.9 379.5L648.4 379.6L647.9 380L647.4 379L646.9 379.6L646.4 379.8L645.9 379.3L645.4 379.5L644.9 380L644.4 378.8L643.9 379.7L643.4 378.7L642.9 380.4L642.4 380.2L641.9 380.3L641.4 380L640.9 379.7L640.4 379.1L639.9 378.7L639.4 379.5L638.9 380.1L638.4 380.6L637.9 378L637.4 377.1L636.9 375.1L636.4 374.2L635.9 373.7L635.4 373.7L634.9 373.7L634.4 373.7L633.9 373.7L633.4 373.7L632.9 373.7L632.4 373.7L631.9 373.7L631.4 373.7L630.9 373.7L630.4 373.7L629.9 373.7L629.4 373.7L628.9 373.7L628.4 373.7L627.9 373.7L627.4 373.7L626.9 373.7L626.4 373.7L625.9 373.7L625.4 373.7L624.9 373.7L624.4 373.7L623.9 373.7L623.4 373.7L622.9 373.7L622.4 373.7L621.9 373.7L621.4 373.7L620.9 373.7L620.4 373.7L619.9 373.7L619.4 373.7L618.9 373.7L618.4 374.2L617.9 376.1L617.4 377.8L616.9 379.9L616.4 378.5L615.9 379.9L615.4 378.9L614.9 378.8L614.4 379.7L613.9 380.1L613.4 380L612.9 379.7L612.4 380.4L611.9 379.8L611.4 379.3L610.9 379L610.4 379.5L609.9 379.6L609.4 379.9L608.9 379L608.4 380.7L607.9 379.7L607.4 379L606.9 379L606.4 379.5L605.9 378.5L605.4 380.5L604.9 379.1L604.4 379L603.9 379.6L603.4 380.2L602.9 377.1L602.4 376L601.9 374.3L601.4 374.1L600.9 373.7L600.4 373.7L599.9 373.7L599.4 373.7L598.9 373.7L598.4 373.7L597.9 373.7L597.4 374.1L596.9 375L596.4 377.2L595.9 378L595.4 380.4L594.9 379.8L594.4 379.5L593.9 380.7L593.4 380.2L592.9 380L592.4 380L591.9 380.6L591.4 380.4L590.9 379.4L590.4 379.8L589.9 380.1L589.4 379.2L588.9 380.7L588.4 380L587.9 379.4L587.4 380.4L586.9 379.8L586.4 379.2L585.9 380.5L585.4 379.9L584.9 379.5L584.4 380L583.9 380.9L583.4 380.3L582.9 380.4L582.4 379L581.9 378.2L581.4 376L580.9 374.5L580.4 374.3L579.9 373.7L579.4 374.1L578.9 376.1L578.4 377.3L577.9 379.4L577.4 380.1L576.9 379L576.4 379L575.9 378L575.4 376.3L574.9 375L574.4 374.1L573.9 373.7L573.4 373.7L572.9 373.7L572.4 373.7L571.9 373.7L571.4 373.7L570.9 373.7L570.4 373.7L569.9 373.7L569.4 373.7L568.9 373.7L568.4 373.7L567.9 373.7L567.4 373.7L566.9 373.7L566.4 374.1L565.9 375.8L565.4 377.5L564.9 379.7L564.4 379.6L563.9 378.3L563.4 378.8L562.9 378.2L562.4 378.8L561.9 377.2L561.4 375.3L560.9 374L560.4 374.1L559.9 373.7L559.4 373.7L558.9 373.7L558.4 373.7L557.9 373.7L557.4 373.7L556.9 373.7L556.4 373.7L555.9 373.7L555.4 373.7L554.9 373.7L554.4 373.7L553.9 373.7L553.4 373.7L552.9 373.7L552.4 373.7L551.9 373.7L551.4 373.7L550.9 373.7L550.4 373.7L549.9 373.7L549.4 373.7L548.9 373.7L548.4 373.7L547.9 373.7L547.4 373.7L546.9 373.7L546.4 373.7L545.9 373.7L545.4 373.7L544.9 373.7L544.4 373.7L543.9 373.7L543.4 373.7L542.9 373.7L542.4 373.7L541.9 373.7L541.4 373.7L540.9 374.1L540.4 375.4L539.9 377L539.4 379.8L538.9 380.2L538.4 380.8L537.9 379.6L537.4 379.6L536.9 378.8L536.4 379L535.9 378.7L535.4 379.5L534.9 380.1L534.4 379.9L533.9 379.7L533.4 379.3L532.9 379.5L532.4 378.8L531.9 380.3L531.4 380.4L530.9 380.8L530.4 380.7L529.9 380.3L529.4 380.3L528.9 379.5L528.4 380.4L527.9 380.2L527.4 379.2L526.9 377L526.4 375.2L525.9 374.1L525.4 374.2L524.9 373.7L524.4 373.7L523.9 373.7L523.4 373.7L522.9 373.7L522.4 373.7L521.9 373.7L521.4 373.7L520.9 373.7L520.4 373.7L519.9 373.7L519.4 373.7L518.9 373.7L518.4 373.7L517.9 373.7L517.4 373.7L516.9 373.7L516.4 373.7L515.9 373.7L515.4 373.7L514.9 373.7L514.4 373.7L513.9 373.7L513.4 373.7L512.9 373.7L512.4 373.7L511.9 373.7L511.4 373.7L510.9 373.7L510.4 373.7L509.9 373.7L509.4 373.7L508.9 373.7L508.4 373.7L507.9 373.7L507.4 373.7L506.9 373.7L506.4 374.1L505.9 374.8L505.4 376.7L504.9 378.2L504.4 379.4L503.9 379.8L503.4 378.9L502.9 379.7L502.4 380.3L501.9 379.7L501.4 379.5L500.9 379.7L500.4 379.5L499.9 378.1L499.4 376.7Z" fill="#5cabf8"/>
<path d="M885.5 370.9L886 371L886.5 371.1L887 371.1L887.5 371.1L888 371.3L888.5 371.4L889 371.5L889.5 371.6L890 372.4L890.5 372.7L891 372.6L891.5 372.1L892 372.1L892.5 372.3L893 372.3L893.5 372.4L894 372.5L894.5 372.6L895 372.6L895.5 372.7L896 372.7L896.5 372.7L897 372.7L897.5 372.7L898 372.7L898.5 372.7L899 372.7L899.5 372.7L900 372.7L900.5 372.7L901 372.7L901.5 372.7L902 372.7L902.5 372.7L903 372.7L903.5 372.7L904 372.7L904.5 372.7L905 372.7L905.5 372.7L906 372.7L906.5 372.7L907 372.7L907.5 372.7L908 372.7L908.5 372.7L909 372.7L909.5 372.7L910 372.7L910.5 372.7L911 372.7L911 373.7L910.5 373.7L910 373.7L909.5 373.7L909 373.7L908.5 373.7L908 373.7L907.5 373.7L907 373.7L906.5 373.7L906 373.7L905.5 373.7L905 373.7L904.5 373.7L904 373.7L903.5 373.7L903 373.7L902.5 373.7L902 373.7L901.5 373.7L901 373.7L900.5 373.7L900 373.7L899.5 373.7L899 373.7L898.5 373.7L898 373.7L897.5 373.7L897 373.7L896.5 373.7L896 373.7L895.5 373.7L895 373.7L894.5 373.9L894 373.9L893.5 374L893 374.1L892.5 374L892 374.1L891.5 374.3L891 373.9L890.5 373.7L890 374L889.5 374.7L889 375L888.5 375L888 374.9L887.5 375.4L887 375.1L886.5 375.5L886 375.4L885.5 375.3Z" fill="#5cabf8"/>
<path d="M277.6 400.8l1.7 1.9l1.7-1.9zM277.6 456.8l1.7-1.9l1.7 1.9z" fill="#141616"/>
<path d="M169.7 433.8L170.2 429.5L170.7 430L171.2 430.4L171.7 430.6L172.2 430.7L172.7 431.1L173.2 431.5L173.7 431.7L174.2 431.8L174.7 432.2L175.2 432.2L175.7 433.8L176.2 433.5L176.7 428.6L177.2 428.6L177.7 430.3L178.2 433.8L178.7 434L179.2 431.5L179.7 429.7L180.2 430.5L180.7 430.8L181.2 431L181.7 431.4L182.2 431.8L182.7 432.8L183.2 432.8L183.7 433.4L184.2 432.9L184.7 427.1L185.2 425.3L185.7 426.2L186.2 432.8L186.7 431.6L187.2 428.2L187.7 428.2L188.2 432.8L188.7 431.8L189.2 428.6L189.7 428.6L190.2 432.9L190.7 434.1L191.2 433.1L191.7 431.3L192.2 429.6L192.7 425L193.2 425L193.7 426.1L194.2 430.6L194.7 430.7L195.2 430.8L195.7 431.1L196.2 431.5L196.7 431.5L197.2 431.6L197.7 431.8L198.2 432L198.7 432.1L199.2 432.4L199.7 432.6L200.2 433.6L200.7 433L201.2 429.1L201.7 429.1L202.2 431.6L202.7 432.8L203.2 430.1L203.7 429L204.2 429.6L204.7 433.6L205.2 432.7L205.7 432.7L206.2 429.2L206.7 429.6L207.2 428.9L207.7 429.5L208.2 431.2L208.7 431.4L209.2 431.7L209.7 432.1L210.2 432.2L210.7 433.9L211.2 433.2L211.7 433.3L212.2 433.2L212.7 431.5L213.2 430.2L213.7 429.2L214.2 429.8L214.7 431.1L215.2 431.8L215.7 431.9L216.2 433.3L216.7 434.2L217.2 433.1L217.7 431.4L218.2 427.8L218.7 427.8L219.2 432.7L219.7 428.5L220.2 428.5L220.7 430.3L221.2 429.9L221.7 428.8L222.2 429.4L222.7 433.6L223.2 433.2L223.7 429.5L224.2 429.3L224.7 429.8L225.2 430.1L225.7 430.1L226.2 430.5L226.7 429.4L227.2 430L227.7 431.3L228.2 431.3L228.7 431.4L229.2 431.5L229.7 432L230.2 432L230.7 432.4L231.2 432.5L231.7 433.8L232.2 433.1L232.7 432.8L233.2 433.8L233.7 429.6L234.2 430L234.7 430.3L235.2 427.9L235.7 426.4L236.2 427.2L236.7 431.4L237.2 431.5L237.7 431.7L238.2 432.2L238.7 432.9L239.2 434.3L239.7 432.9L240.2 430.3L240.7 429.3L241.2 429.8L241.7 433.7L242.2 433.5L242.7 428.5L243.2 428.5L243.7 432.1L244.2 432.6L244.7 425L245.2 425L245.7 429.2L246.2 427.3L246.7 425.5L247.2 426.4L247.7 432.8L248.2 428.1L248.7 426.5L249.2 427.4L249.7 433.1L250.2 433.3L250.7 434L251.2 429.3L251.7 429.6L252.2 429.8L252.7 430.2L253.2 427.9L253.7 426.3L254.2 427.2L254.7 430.9L255.2 431.2L255.7 431.3L256.2 431.7L256.7 431.7L257.2 432.1L257.7 432L258.2 432.3L258.7 432.5L259.2 432.6L259.7 434.5L260.2 434.5L260.7 434.5L261.2 434.5L261.7 434.5L262.2 434.5L262.7 434.5L263.2 434.5L263.7 434.5L264.2 434.5L264.7 424L265.2 424L265.7 426.6L266.2 429.6L266.7 430.2L267.2 430.4L267.7 430.8L268.2 430.7L268.7 430.9L269.2 431.2L269.7 431.5L270.2 431.4L270.7 431.7L271.2 431.9L271.7 432.1L272.2 432.3L272.7 434.2L273.2 434.5L273.7 434.5L274.2 434.5L274.7 434.5L275.2 434.5L275.7 434.5L276.2 434.5L276.7 434.5L277.2 434.5L277.7 434.5L278.2 434.5L278.7 434.5L279.2 434.2L279.2 435.7L278.7 435.5L278.2 435.5L277.7 435.5L277.2 435.5L276.7 435.5L276.2 435.5L275.7 435.5L275.2 435.5L274.7 435.5L274.2 435.5L273.7 435.5L273.2 435.5L272.7 435.8L272.2 437.5L271.7 437.6L271.2 437.9L270.7 438.3L270.2 438.3L269.7 438.5L269.2 438.5L268.7 438.9L268.2 439.5L267.7 438.9L267.2 439.2L266.7 439.8L266.2 440.6L265.7 444L265.2 445.9L264.7 446.2L264.2 435.5L263.7 435.5L263.2 435.5L262.7 435.5L262.2 435.5L261.7 435.5L261.2 435.5L260.7 435.5L260.2 435.5L259.7 435.5L259.2 437.4L258.7 437.4L258.2 437.5L257.7 437.9L257.2 437.6L256.7 438.5L256.2 438.4L255.7 438.8L255.2 438.9L254.7 438.8L254.2 442.7L253.7 444.2L253.2 441.7L252.7 439.7L252.2 440.1L251.7 440.1L251.2 441L250.7 436L250.2 436.5L249.7 436.8L249.2 442.2L248.7 443.9L248.2 441.8L247.7 437.1L247.2 442.6L246.7 444.5L246.2 442.1L245.7 441.1L245.2 444.7L244.7 444.8L244.2 437.2L243.7 437.6L243.2 440.9L242.7 441.4L242.2 436.4L241.7 436.3L241.2 439.8L240.7 440.6L240.2 439.3L239.7 437.2L239.2 435.6L238.7 437.2L238.2 437.6L237.7 438.4L237.2 438.5L236.7 438.4L236.2 442.4L235.7 444.2L235.2 442.2L234.7 439.4L234.2 439.6L233.7 440.2L233.2 436.1L232.7 437.2L232.2 437L231.7 436.2L231.2 437.4L230.7 437.6L230.2 438L229.7 438.2L229.2 438.4L228.7 438.4L228.2 438.9L227.7 438.8L227.2 439.8L226.7 440.6L226.2 439.1L225.7 440.1L225.2 439.8L224.7 440L224.2 440.2L223.7 440.3L223.2 436.6L222.7 436.5L222.2 440.9L221.7 440.9L221.2 439.5L220.7 439.3L220.2 440.9L219.7 441.7L219.2 437.3L218.7 442.8L218.2 441.8L217.7 438.2L217.2 436.8L216.7 435.8L216.2 436.5L215.7 438.2L215.2 438.4L214.7 439.2L214.2 440.4L213.7 440.3L213.2 440L212.7 438.3L212.2 436.8L211.7 436.7L211.2 436.6L210.7 436L210.2 437.8L209.7 437.9L209.2 438.5L208.7 438.4L208.2 438.6L207.7 440.2L207.2 440.7L206.7 440.4L206.2 440.9L205.7 437.3L205.2 437.1L204.7 436.6L204.2 440.9L203.7 440.4L203.2 440L202.7 437.1L202.2 438.5L201.7 440.9L201.2 440.4L200.7 436.9L200.2 436.2L199.7 437.2L199.2 437.6L198.7 438.1L198.2 438L197.7 438.4L197.2 438.3L196.7 438.6L196.2 438.3L195.7 438.5L195.2 439.5L194.7 439.6L194.2 439.2L193.7 443.8L193.2 445.5L192.7 444.4L192.2 440.2L191.7 438.6L191.2 436.8L190.7 435.9L190.2 437L189.7 441.6L189.2 441.3L188.7 438.3L188.2 437.3L187.7 442.1L187.2 441.6L186.7 438.5L186.2 437.4L185.7 444.4L185.2 444.8L184.7 442.1L184.2 436.8L183.7 436.5L183.2 437L182.7 437L182.2 438.4L181.7 438.6L181.2 438.6L180.7 439.3L180.2 439.1L179.7 440.5L179.2 438.1L178.7 436L178.2 436.1L177.7 439.9L177.2 441.9L176.7 441.5L176.2 436.3L175.7 436.3L175.2 437.5L174.7 437.6L174.2 438L173.7 438.5L173.2 438.7L172.7 438.8L172.2 439.1L171.7 439.4L171.2 439.6L170.7 440.1L170.2 440L169.7 436.1Z" fill="#5cabf8"/>
<path d="M279.3 433.8L279.8 429.5L280.3 430L280.8 430.4L281.3 430.6L281.8 430.7L282.3 431.1L282.8 431.5L283.3 431.7L283.8 431.8L284.3 432.2L284.8 432.2L285.3 433.8L285.8 433.5L286.3 428.6L286.8 428.6L287.3 430.3L287.8 433.8L288.3 434L288.8 431.5L289.3 429.7L289.8 430.5L290.3 430.8L290.8 431L291.3 431.4L291.8 431.8L292.3 432.8L292.8 432.8L293.3 433.4L293.8 432.9L294.3 427.1L294.8 425.3L295.3 426.2L295.8 432.8L296.3 431.6L296.8 428.2L297.3 428.2L297.8 432.8L298.3 431.8L298.8 428.6L299.3 428.6L299.8 432.9L300.3 434.1L300.8 433.1L301.3 431.3L301.8 429.6L302.3 425L302.8 425L303.3 426.1L303.8 430.6L304.3 430.7L304.8 430.8L305.3 431.1L305.8 431.5L306.3 431.5L306.8 431.6L307.3 431.8L307.8 432L308.3 432.1L308.8 432.4L309.3 432.6L309.8 433.6L310.3 433L310.8 429.1L311.3 429.1L311.8 431.6L312.3 432.8L312.8 430.1L313.3 429L313.8 429.6L314.3 433.6L314.8 432.7L315.3 432.7L315.8 429.2L316.3 429.6L316.8 428.9L317.3 429.5L317.8 431.2L318.3 431.4L318.8 431.7L319.3 432.1L319.8 432.2L320.3 433.9L320.8 433.2L321.3 433.3L321.8 433.2L322.3 431.5L322.8 430.2L323.3 429.2L323.8 429.8L324.3 431.1L324.8 431.8L325.3 431.9L325.8 433.3L326.3 434.2L326.8 433.1L327.3 431.4L327.8 427.8L328.3 427.8L328.8 432.7L329.3 428.5L329.8 428.5L330.3 430.3L330.8 429.9L331.3 428.8L331.8 429.4L332.3 433.6L332.3 436.5L331.8 440.9L331.3 440.9L330.8 439.5L330.3 439.3L329.8 440.9L329.3 441.7L328.8 437.3L328.3 442.8L327.8 441.8L327.3 438.2L326.8 436.8L326.3 435.8L325.8 436.5L325.3 438.2L324.8 438.4L324.3 439.2L323.8 440.4L323.3 440.3L322.8 440L322.3 438.3L321.8 436.8L321.3 436.7L320.8 436.6L320.3 436L319.8 437.8L319.3 437.9L318.8 438.5L318.3 438.4L317.8 438.6L317.3 440.2L316.8 440.7L316.3 440.4L315.8 440.9L315.3 437.3L314.8 437.1L314.3 436.6L313.8 440.9L313.3 440.4L312.8 440L312.3 437.1L311.8 438.5L311.3 440.9L310.8 440.4L310.3 436.9L309.8 436.2L309.3 437.2L308.8 437.6L308.3 438.1L307.8 438L307.3 438.4L306.8 438.3L306.3 438.6L305.8 438.3L305.3 438.5L304.8 439.5L304.3 439.6L303.8 439.2L303.3 443.8L302.8 445.5L302.3 444.4L301.8 440.2L301.3 438.6L300.8 436.8L300.3 435.9L299.8 437L299.3 441.6L298.8 441.3L298.3 438.3L297.8 437.3L297.3 442.1L296.8 441.6L296.3 438.5L295.8 437.4L295.3 444.4L294.8 444.8L294.3 442.1L293.8 436.8L293.3 436.5L292.8 437L292.3 437L291.8 438.4L291.3 438.6L290.8 438.6L290.3 439.3L289.8 439.1L289.3 440.5L288.8 438.1L288.3 436L287.8 436.1L287.3 439.9L286.8 441.9L286.3 441.5L285.8 436.3L285.3 436.3L284.8 437.5L284.3 437.6L283.8 438L283.3 438.5L282.8 438.7L282.3 438.8L281.8 439.1L281.3 439.4L280.8 439.6L280.3 440.1L279.8 440L279.3 436.1Z" fill="#387ac8"/>
<path d="M552.35 400.8l1.7 1.9l1.7-1.9zM552.35 456.8l1.7-1.9l1.7 1.9z" fill="#141616"/>
<path d="M444.4 434.3L444.9 431.8L445.4 429.2L445.9 428.8L446.4 429.1L446.9 429.1L447.4 429L447.9 428.7L448.4 428.6L448.9 428.9L449.4 429.1L449.9 428.8L450.4 428.9L450.9 428.8L451.4 431.8L451.9 430.1L452.4 430L452.9 426.6L453.4 426.6L453.9 431.3L454.4 431.7L454.9 428.2L455.4 428.2L455.9 432.5L456.4 432.8L456.9 433.1L457.4 434.3L457.9 434.7L458.4 434.7L458.9 434.7L459.4 434.7L459.9 434.7L460.4 434.7L460.9 434.7L461.4 434.7L461.9 434.7L462.4 434.7L462.9 434.7L463.4 434.7L463.9 434.2L464.4 433.9L464.9 430.3L465.4 429.3L465.9 428.7L466.4 429.1L466.9 429.1L467.4 429.2L467.9 428.6L468.4 428.8L468.9 428.6L469.4 429.1L469.9 428.8L470.4 429.2L470.9 429.6L471.4 431.8L471.9 430.9L472.4 426.6L472.9 426.6L473.4 428.4L473.9 431.8L474.4 428.2L474.9 428.2L475.4 430.1L475.9 432.5L476.4 432.6L476.9 433.6L477.4 434.7L477.9 434.7L478.4 434.7L478.9 434.7L479.4 434.7L479.9 434.7L480.4 434.7L480.9 434.7L481.4 434.7L481.9 434.7L482.4 434.7L482.9 434.7L483.4 434.7L483.9 434.7L484.4 434.7L484.9 434.7L485.4 434.7L485.9 434.7L486.4 434.7L486.9 434.7L487.4 434.7L487.9 434.7L488.4 434.7L488.9 434.7L489.4 434.7L489.9 434.7L490.4 434.7L490.9 434.7L491.4 434.7L491.9 434.7L492.4 434.7L492.9 434.7L493.4 434.7L493.9 434.7L494.4 434.7L494.9 434.7L495.4 434.7L495.9 434.7L496.4 434.7L496.9 434.7L497.4 434.7L497.9 434.2L498.4 431.7L498.9 429.2L499.4 429L499.9 428.8L500.4 428.6L500.9 429.1L501.4 428.8L501.9 428.9L502.4 428.8L502.9 429L503.4 429.1L503.9 428.8L504.4 428.6L504.9 431.9L505.4 430.5L505.9 430L506.4 426.6L506.9 426.6L507.4 431.3L507.9 431.5L508.4 428.2L508.9 428.2L509.4 432L509.9 432.1L510.4 432.4L510.9 432.8L511.4 432.9L511.9 434.2L512.5 434.7L513 434.7L513.5 434.7L514 434.7L514.5 434.7L515 434.7L515.5 434.7L516 434.7L516.5 434.7L517 434.7L517.5 434.7L518 434.7L518.5 434.7L519 434.3L519.5 433.7L520 430.5L520.5 428.7L521 429.1L521.5 429.2L522 429L522.5 428.9L523 428.6L523.5 428.7L524 429L524.5 428.8L525 429L525.5 428.8L526 429.4L526.5 431.7L527 430.5L527.5 426.6L528 426.6L528.5 428.4L529 431.9L529.5 428.2L530 428.2L530.5 430.1L531 432.3L531.5 432.6L532 432.9L532.5 434.4L533 434.7L533.5 434.7L534 434.7L534.5 434.7L535 434.7L535.5 434.7L536 434.7L536.5 434.7L537 434.7L537.5 434.7L538 434.7L538.5 434.7L539 434.7L539.5 434.7L540 434.7L540.5 434.7L541 434.7L541.5 434.7L542 434.7L542.5 434.7L543 434.7L543.5 434.7L544 434.7L544.5 434.7L545 434.7L545.5 434.7L546 434.7L546.5 434.7L547 434.7L547.5 434.7L548 434.7L548.5 434.7L549 434.7L549.5 434.7L550 434.7L550.5 434.7L551 434.7L551.5 434.7L552 434.7L552.5 434.7L553 434.7L553.5 434.7L554 434.7L554 435.7L553.5 435.7L553 435.7L552.5 435.7L552 435.7L551.5 435.7L551 435.7L550.5 435.7L550 435.7L549.5 435.7L549 435.7L548.5 435.7L548 435.7L547.5 435.7L547 435.7L546.5 435.7L546 435.7L545.5 435.7L545 435.7L544.5 435.7L544 435.7L543.5 435.7L543 435.7L542.5 435.7L542 435.7L541.5 435.7L541 435.7L540.5 435.7L540 435.7L539.5 435.7L539 435.7L538.5 435.7L538 435.7L537.5 435.7L537 435.7L536.5 435.7L536 435.7L535.5 435.7L535 435.7L534.5 435.7L534 435.7L533.5 435.7L533 435.7L532.5 435.9L532 437.6L531.5 438L531 438.3L530.5 439.8L530 442.7L529.5 441.8L529 438.7L528.5 441.4L528 443.8L527.5 443.9L527 440.2L526.5 438.7L526 440.7L525.5 441.6L525 441.2L524.5 441.6L524 441.5L523.5 441.3L523 442.2L522.5 441.1L522 441.1L521.5 441.6L521 440.7L520.5 442.1L520 439.8L519.5 436.8L519 436L518.5 435.7L518 435.7L517.5 435.7L517 435.7L516.5 435.7L516 435.7L515.5 435.7L515 435.7L514.5 435.7L514 435.7L513.5 435.7L513 435.7L512.5 435.7L511.9 436.3L511.4 437.5L510.9 437.7L510.4 437.9L509.9 438.2L509.4 438.4L508.9 442.7L508.4 442.5L507.9 439.2L507.4 439.1L506.9 442.8L506.4 443.5L505.9 440.6L505.4 440.1L504.9 438.6L504.4 441.8L503.9 441.7L503.4 440.6L502.9 441.2L502.4 441.7L501.9 441.3L501.4 441.5L500.9 440.9L500.4 441.4L499.9 441.6L499.4 441.7L498.9 441L498.4 438.9L497.9 436.2L497.4 435.7L496.9 435.7L496.4 435.7L495.9 435.7L495.4 435.7L494.9 435.7L494.4 435.7L493.9 435.7L493.4 435.7L492.9 435.7L492.4 435.7L491.9 435.7L491.4 435.7L490.9 435.7L490.4 435.7L489.9 435.7L489.4 435.7L488.9 435.7L488.4 435.7L487.9 435.7L487.4 435.7L486.9 435.7L486.4 435.7L485.9 435.7L485.4 435.7L484.9 435.7L484.4 435.7L483.9 435.7L483.4 435.7L482.9 435.7L482.4 435.7L481.9 435.7L481.4 435.7L480.9 435.7L480.4 435.7L479.9 435.7L479.4 435.7L478.9 435.7L478.4 435.7L477.9 435.7L477.4 435.7L476.9 436.7L476.4 437.9L475.9 437.7L475.4 439.8L474.9 442.7L474.4 442.2L473.9 438.6L473.4 441.2L472.9 444.2L472.4 443L471.9 439.5L471.4 438.7L470.9 440.2L470.4 441.2L469.9 442L469.4 441.5L468.9 441.9L468.4 440.9L467.9 442L467.4 441.1L466.9 441.7L466.4 440.6L465.9 442.1L465.4 441.6L464.9 440L464.4 436.6L463.9 436.1L463.4 435.7L462.9 435.7L462.4 435.7L461.9 435.7L461.4 435.7L460.9 435.7L460.4 435.7L459.9 435.7L459.4 435.7L458.9 435.7L458.4 435.7L457.9 435.7L457.4 436L456.9 437.1L456.4 437.6L455.9 437.8L455.4 442.3L454.9 441.5L454.4 438.3L453.9 439.1L453.4 443.6L452.9 442.8L452.4 440.5L451.9 440.5L451.4 438.5L450.9 442.1L450.4 441.3L449.9 440.9L449.4 440.6L448.9 442L448.4 442.1L447.9 441.5L447.4 441.8L446.9 441.2L446.4 440.6L445.9 441.4L445.4 440.8L444.9 438.3L444.4 436.1Z" fill="#5cabf8"/>
<path d="M554 434.3L554.5 431.8L555 429.2L555.5 428.8L556 429.1L556.5 429.1L557 429L557.5 428.7L558 428.6L558.5 428.9L559 429.1L559.5 428.8L560 428.9L560.5 428.8L561 431.8L561.5 430.1L562 430L562.5 426.6L563 426.6L563.5 431.3L564 431.7L564.5 428.2L565 428.2L565.5 432.5L566 432.8L566.5 433.1L567 434.3L567.5 434.7L568 434.7L568.5 434.7L569 434.7L569.5 434.7L570 434.7L570.5 434.7L571 434.7L571.5 434.7L572 434.7L572.5 434.7L573 434.7L573.5 434.2L574 433.9L574.5 430.3L575 429.3L575.5 428.7L576 429.1L576.5 429.1L577 429.2L577.5 428.6L578 428.8L578.5 428.6L579 429.1L579.5 428.8L580 429.2L580.5 429.6L581 431.8L581.5 430.9L582 426.6L582.5 426.6L583 428.4L583.5 431.8L584 428.2L584.5 428.2L585 430.1L585.5 432.5L586 432.6L586.5 433.6L587 434.7L587.5 434.7L588 434.7L588.5 434.7L589 434.7L589.5 434.7L590 434.7L590.5 434.7L591 434.7L591.5 434.7L592 434.7L592.5 434.7L593 434.7L593.5 434.7L594 434.7L594.5 434.7L595 434.7L595.5 434.7L596 434.7L596.5 434.7L597 434.7L597.5 434.7L598 434.7L598.5 434.7L599 434.7L599.5 434.7L600 434.7L600.5 434.7L601 434.7L601.5 434.7L602 434.7L602.5 434.7L603 434.7L603.5 434.7L604 434.7L604.5 434.7L605 434.7L605.5 434.7L606 434.7L606.5 434.7L607 434.7L607.5 434.2L608 431.7L608.5 429.2L609 429L609.5 428.8L610 428.6L610.5 429.1L611 428.8L611.5 428.9L612 428.8L612.5 429L613 429.1L613.5 428.8L614 428.6L614.5 431.9L615 430.5L615.5 430L616 426.6L616.5 426.6L617 431.3L617.5 431.5L618 428.2L618.5 428.2L619 432L619.5 432.1L620 432.4L620.5 432.8L621 432.9L621.5 434.2L622 434.7L622.5 434.7L623 434.7L623.5 434.7L624 434.7L624.5 434.7L625 434.7L625.5 434.7L626 434.7L626.5 434.7L627 434.7L627.5 434.7L628 434.7L628.5 434.3L629 433.7L629.5 430.5L630 428.7L630.5 429.1L631 429.2L631.5 429L632 428.9L632.5 428.6L633 428.7L633.5 429L634 428.8L634.5 429L635 428.8L635.5 429.4L636 431.7L636.5 430.5L637 426.6L637.5 426.6L638 428.4L638.5 431.9L639 428.2L639.5 428.2L640 430.1L640.5 432.3L641 432.6L641.5 432.9L642 434.4L642.5 434.7L643 434.7L643.5 434.7L644 434.7L644.5 434.7L645 434.7L645.5 434.7L646 434.7L646.5 434.7L647 434.7L647.5 434.7L648 434.7L648.5 434.7L649 434.7L649.5 434.7L650 434.7L650.5 434.7L651 434.7L651.5 434.7L652 434.7L652.5 434.7L653 434.7L653.5 434.7L654 434.7L654.5 434.7L655 434.7L655.5 434.7L656 434.7L656.5 434.7L657 434.7L657.5 434.7L658 434.7L658.5 434.7L659 434.7L659.5 434.7L660 434.7L660.5 434.7L661 434.7L661.5 434.7L662 434.7L662.5 434.7L662.5 435.7L662 435.7L661.5 435.7L661 435.7L660.5 435.7L660 435.7L659.5 435.7L659 435.7L658.5 435.7L658 435.7L657.5 435.7L657 435.7L656.5 435.7L656 435.7L655.5 435.7L655 435.7L654.5 435.7L654 435.7L653.5 435.7L653 435.7L652.5 435.7L652 435.7L651.5 435.7L651 435.7L650.5 435.7L650 435.7L649.5 435.7L649 435.7L648.5 435.7L648 435.7L647.5 435.7L647 435.7L646.5 435.7L646 435.7L645.5 435.7L645 435.7L644.5 435.7L644 435.7L643.5 435.7L643 435.7L642.5 435.7L642 435.9L641.5 437.6L641 438L640.5 438.3L640 439.8L639.5 442.7L639 441.8L638.5 438.7L638 441.4L637.5 443.8L637 443.9L636.5 440.2L636 438.7L635.5 440.7L635 441.6L634.5 441.2L634 441.6L633.5 441.5L633 441.3L632.5 442.2L632 441.1L631.5 441.1L631 441.6L630.5 440.7L630 442.1L629.5 439.8L629 436.8L628.5 436L628 435.7L627.5 435.7L627 435.7L626.5 435.7L626 435.7L625.5 435.7L625 435.7L624.5 435.7L624 435.7L623.5 435.7L623 435.7L622.5 435.7L622 435.7L621.5 436.3L621 437.5L620.5 437.7L620 437.9L619.5 438.2L619 438.4L618.5 442.7L618 442.5L617.5 439.2L617 439.1L616.5 442.8L616 443.5L615.5 440.6L615 440.1L614.5 438.6L614 441.8L613.5 441.7L613 440.6L612.5 441.2L612 441.7L611.5 441.3L611 441.5L610.5 440.9L610 441.4L609.5 441.6L609 441.7L608.5 441L608 438.9L607.5 436.2L607 435.7L606.5 435.7L606 435.7L605.5 435.7L605 435.7L604.5 435.7L604 435.7L603.5 435.7L603 435.7L602.5 435.7L602 435.7L601.5 435.7L601 435.7L600.5 435.7L600 435.7L599.5 435.7L599 435.7L598.5 435.7L598 435.7L597.5 435.7L597 435.7L596.5 435.7L596 435.7L595.5 435.7L595 435.7L594.5 435.7L594 435.7L593.5 435.7L593 435.7L592.5 435.7L592 435.7L591.5 435.7L591 435.7L590.5 435.7L590 435.7L589.5 435.7L589 435.7L588.5 435.7L588 435.7L587.5 435.7L587 435.7L586.5 436.7L586 437.9L585.5 437.7L585 439.8L584.5 442.7L584 442.2L583.5 438.6L583 441.2L582.5 444.2L582 443L581.5 439.5L581 438.7L580.5 440.2L580 441.2L579.5 442L579 441.5L578.5 441.9L578 440.9L577.5 442L577 441.1L576.5 441.7L576 440.6L575.5 442.1L575 441.6L574.5 440L574 436.6L573.5 436.1L573 435.7L572.5 435.7L572 435.7L571.5 435.7L571 435.7L570.5 435.7L570 435.7L569.5 435.7L569 435.7L568.5 435.7L568 435.7L567.5 435.7L567 436L566.5 437.1L566 437.6L565.5 437.8L565 442.3L564.5 441.5L564 438.3L563.5 439.1L563 443.6L562.5 442.8L562 440.5L561.5 440.5L561 438.5L560.5 442.1L560 441.3L559.5 440.9L559 440.6L558.5 442L558 442.1L557.5 441.5L557 441.8L556.5 441.2L556 440.6L555.5 441.4L555 440.8L554.5 438.3L554 436.1Z" fill="#387ac8"/>
<path d="M869.6 400.8l1.7 1.9l1.7-1.9zM869.6 456.8l1.7-1.9l1.7 1.9z" fill="#141616"/>
<path d="M979.7 400.8l1.7 1.9l1.7-1.9zM979.7 456.8l1.7-1.9l1.7 1.9z" fill="#141616"/>
<path d="M761.7 434.3L762.2 431.8L762.7 429.2L763.2 428.8L763.7 429.1L764.2 429.1L764.7 429L765.2 428.7L765.7 428.6L766.2 428.9L766.7 429.1L767.2 428.8L767.7 428.9L768.2 428.8L768.7 431.8L769.2 430.1L769.7 430L770.2 426.6L770.7 426.6L771.2 431.3L771.7 431.7L772.2 428.2L772.7 428.2L773.2 432.5L773.7 432.8L774.2 433.1L774.7 434.3L775.2 434.7L775.7 434.7L776.2 434.7L776.7 434.7L777.2 434.7L777.7 434.7L778.2 434.7L778.7 434.7L779.2 434.7L779.7 434.7L780.2 434.7L780.7 434.7L781.2 434.2L781.7 433.9L782.2 430.3L782.7 429.3L783.2 428.7L783.7 429.1L784.2 429.1L784.7 429.2L785.2 428.6L785.7 428.8L786.2 428.6L786.7 429.1L787.2 428.8L787.7 429.2L788.2 429.6L788.7 431.8L789.2 430.9L789.7 426.6L790.2 426.6L790.7 428.4L791.2 431.8L791.7 428.2L792.2 428.2L792.7 430.1L793.2 432.5L793.7 432.6L794.2 433.6L794.7 434.7L795.2 434.7L795.7 434.7L796.2 434.7L796.7 434.7L797.2 434.7L797.7 434.7L798.2 434.7L798.7 434.7L799.2 434.7L799.7 434.7L800.2 434.7L800.7 434.7L801.2 434.7L801.7 434.7L802.2 434.7L802.7 434.7L803.2 434.7L803.7 434.7L804.2 434.7L804.7 434.7L805.2 434.7L805.7 434.7L806.2 434.7L806.7 434.7L807.2 434.7L807.7 434.7L808.2 434.7L808.7 434.7L809.2 434.7L809.7 434.7L810.2 434.7L810.7 434.7L811.2 434.7L811.7 434.7L812.2 434.7L812.7 434.7L813.2 434.7L813.7 434.7L814.2 434.7L814.7 434.7L815.2 434.2L815.7 431.7L816.2 429.2L816.7 429L817.2 428.8L817.7 428.6L818.2 429.1L818.7 428.8L819.2 428.9L819.7 428.8L820.2 429L820.7 429.1L821.2 428.8L821.7 428.6L822.2 431.9L822.7 430.5L823.2 430L823.7 426.6L824.2 426.6L824.7 431.3L825.2 431.5L825.7 428.2L826.2 428.2L826.7 432L827.2 432.1L827.7 432.4L828.2 432.8L828.7 432.9L829.2 434.2L829.7 434.7L830.2 434.7L830.7 434.7L831.2 434.7L831.7 434.7L832.2 434.7L832.7 434.7L833.2 434.7L833.7 434.7L834.2 434.7L834.7 434.7L835.2 434.7L835.7 434.7L836.2 434.3L836.7 433.7L837.2 430.5L837.7 428.7L838.2 429.1L838.7 429.2L839.2 429L839.7 428.9L840.2 428.6L840.7 428.7L841.2 429L841.7 428.8L842.2 429L842.7 428.8L843.2 429.4L843.7 431.7L844.2 430.5L844.7 426.6L845.2 426.6L845.7 428.4L846.2 431.9L846.7 428.2L847.2 428.2L847.7 430.1L848.2 432.3L848.7 432.6L849.2 432.9L849.7 434.4L850.2 434.7L850.7 434.7L851.2 434.7L851.7 434.7L852.2 434.7L852.7 434.7L853.2 434.7L853.7 434.7L854.2 434.7L854.7 434.7L855.2 434.7L855.7 434.7L856.2 434.7L856.7 434.7L857.2 434.7L857.7 434.7L858.2 434.7L858.7 434.7L859.2 434.7L859.7 434.7L860.2 434.7L860.7 434.7L861.2 434.7L861.7 434.7L862.2 434.7L862.7 434.7L863.2 434.7L863.7 434.7L864.2 434.7L864.7 434.7L865.2 434.7L865.7 434.7L866.2 434.7L866.7 434.7L867.2 434.7L867.7 434.7L868.2 434.7L868.7 434.7L869.2 434.7L869.7 434.7L870.2 434.7L870.7 434.7L871.2 434.7L871.2 435.7L870.7 435.7L870.2 435.7L869.7 435.7L869.2 435.7L868.7 435.7L868.2 435.7L867.7 435.7L867.2 435.7L866.7 435.7L866.2 435.7L865.7 435.7L865.2 435.7L864.7 435.7L864.2 435.7L863.7 435.7L863.2 435.7L862.7 435.7L862.2 435.7L861.7 435.7L861.2 435.7L860.7 435.7L860.2 435.7L859.7 435.7L859.2 435.7L858.7 435.7L858.2 435.7L857.7 435.7L857.2 435.7L856.7 435.7L856.2 435.7L855.7 435.7L855.2 435.7L854.7 435.7L854.2 435.7L853.7 435.7L853.2 435.7L852.7 435.7L852.2 435.7L851.7 435.7L851.2 435.7L850.7 435.7L850.2 435.7L849.7 435.9L849.2 437.6L848.7 438L848.2 438.3L847.7 439.8L847.2 442.7L846.7 441.8L846.2 438.7L845.7 441.4L845.2 443.8L844.7 443.9L844.2 440.2L843.7 438.7L843.2 440.7L842.7 441.6L842.2 441.2L841.7 441.6L841.2 441.5L840.7 441.3L840.2 442.2L839.7 441.1L839.2 441.1L838.7 441.6L838.2 440.7L837.7 442.1L837.2 439.8L836.7 436.8L836.2 436L835.7 435.7L835.2 435.7L834.7 435.7L834.2 435.7L833.7 435.7L833.2 435.7L832.7 435.7L832.2 435.7L831.7 435.7L831.2 435.7L830.7 435.7L830.2 435.7L829.7 435.7L829.2 436.3L828.7 437.5L828.2 437.7L827.7 437.9L827.2 438.2L826.7 438.4L826.2 442.7L825.7 442.5L825.2 439.2L824.7 439.1L824.2 442.8L823.7 443.5L823.2 440.6L822.7 440.1L822.2 438.6L821.7 441.8L821.2 441.7L820.7 440.6L820.2 441.2L819.7 441.7L819.2 441.3L818.7 441.5L818.2 440.9L817.7 441.4L817.2 441.6L816.7 441.7L816.2 441L815.7 438.9L815.2 436.2L814.7 435.7L814.2 435.7L813.7 435.7L813.2 435.7L812.7 435.7L812.2 435.7L811.7 435.7L811.2 435.7L810.7 435.7L810.2 435.7L809.7 435.7L809.2 435.7L808.7 435.7L808.2 435.7L807.7 435.7L807.2 435.7L806.7 435.7L806.2 435.7L805.7 435.7L805.2 435.7L804.7 435.7L804.2 435.7L803.7 435.7L803.2 435.7L802.7 435.7L802.2 435.7L801.7 435.7L801.2 435.7L800.7 435.7L800.2 435.7L799.7 435.7L799.2 435.7L798.7 435.7L798.2 435.7L797.7 435.7L797.2 435.7L796.7 435.7L796.2 435.7L795.7 435.7L795.2 435.7L794.7 435.7L794.2 436.7L793.7 437.9L793.2 437.7L792.7 439.8L792.2 442.7L791.7 442.2L791.2 438.6L790.7 441.2L790.2 444.2L789.7 443L789.2 439.5L788.7 438.7L788.2 440.2L787.7 441.2L787.2 442L786.7 441.5L786.2 441.9L785.7 440.9L785.2 442L784.7 441.1L784.2 441.7L783.7 440.6L783.2 442.1L782.7 441.6L782.2 440L781.7 436.6L781.2 436.1L780.7 435.7L780.2 435.7L779.7 435.7L779.2 435.7L778.7 435.7L778.2 435.7L777.7 435.7L777.2 435.7L776.7 435.7L776.2 435.7L775.7 435.7L775.2 435.7L774.7 436L774.2 437.1L773.7 437.6L773.2 437.8L772.7 442.3L772.2 441.5L771.7 438.3L771.2 439.1L770.7 443.6L770.2 442.8L769.7 440.5L769.2 440.5L768.7 438.5L768.2 442.1L767.7 441.3L767.2 440.9L766.7 440.6L766.2 442L765.7 442.1L765.2 441.5L764.7 441.8L764.2 441.2L763.7 440.6L763.2 441.4L762.7 440.8L762.2 438.3L761.7 436.1Z" fill="#5cabf8"/>
<path d="M871.3 434.3L871.8 431.8L872.3 429.2L872.8 428.8L873.3 429.1L873.8 429.1L874.3 429L874.8 428.7L875.3 428.6L875.8 428.9L876.3 429.1L876.8 428.8L877.3 428.9L877.8 428.8L878.3 431.8L878.8 430.1L879.3 430L879.8 426.6L880.3 426.6L880.8 431.3L881.3 431.7L881.8 428.2L882.3 428.2L882.8 432.5L883.3 432.8L883.8 433.1L884.3 434.3L884.8 434.7L885.3 434.7L885.8 434.7L886.3 434.7L886.8 434.7L887.3 434.7L887.8 434.7L888.3 434.7L888.8 434.7L889.3 434.7L889.8 434.7L890.3 434.7L890.8 434.2L891.3 433.9L891.8 430.3L892.3 429.3L892.8 428.7L893.3 429.1L893.8 429.1L894.3 429.2L894.8 428.6L895.3 428.8L895.8 428.6L896.3 429.1L896.8 428.8L897.3 429.2L897.8 429.6L898.3 431.8L898.8 430.9L899.3 426.6L899.8 426.6L900.3 428.4L900.8 431.8L901.3 428.2L901.8 428.2L902.3 430.1L902.8 432.5L903.3 432.6L903.8 433.6L904.3 434.7L904.8 434.7L905.3 434.7L905.8 434.7L906.3 434.7L906.8 434.7L907.3 434.7L907.8 434.7L908.3 434.7L908.8 434.7L909.3 434.7L909.8 434.7L910.3 434.7L910.8 434.7L911.3 434.7L911.8 434.7L912.3 434.7L912.8 434.7L913.3 434.7L913.8 434.7L914.3 434.7L914.8 434.7L915.3 434.7L915.8 434.7L916.3 434.7L916.8 434.7L917.3 434.7L917.8 434.7L918.3 434.7L918.8 434.7L919.3 434.7L919.8 434.7L920.3 434.7L920.8 434.7L921.3 434.7L921.8 434.7L922.3 434.7L922.8 434.7L923.3 434.7L923.8 434.7L924.3 434.7L924.8 434.2L925.3 431.7L925.8 429.2L926.3 429L926.8 428.8L927.3 428.6L927.8 429.1L928.3 428.8L928.8 428.9L929.3 428.8L929.8 429L930.3 429.1L930.8 428.8L931.3 428.6L931.8 431.9L932.3 430.5L932.8 430L933.3 426.6L933.8 426.6L934.3 431.3L934.8 431.5L935.3 428.2L935.8 428.2L936.3 432L936.8 432.1L937.3 432.4L937.8 432.8L938.3 432.9L938.8 434.2L939.3 434.7L939.8 434.7L940.3 434.7L940.8 434.7L941.3 434.7L941.8 434.7L942.3 434.7L942.8 434.7L943.3 434.7L943.8 434.7L944.3 434.7L944.8 434.7L945.3 434.7L945.8 434.3L946.3 433.7L946.8 430.5L947.3 428.7L947.8 429.1L948.3 429.2L948.8 429L949.3 428.9L949.8 428.6L950.3 428.7L950.8 429L951.3 428.8L951.8 429L952.3 428.8L952.8 429.4L953.3 431.7L953.8 430.5L954.3 426.6L954.8 426.6L955.3 428.4L955.8 431.9L956.3 428.2L956.8 428.2L957.3 430.1L957.8 432.3L958.3 432.6L958.8 432.9L959.3 434.4L959.8 434.7L960.3 434.7L960.8 434.7L961.3 434.7L961.8 434.7L962.3 434.7L962.8 434.7L963.3 434.7L963.8 434.7L964.3 434.7L964.8 434.7L965.3 434.7L965.8 434.7L966.3 434.7L966.8 434.7L967.3 434.7L967.8 434.7L968.3 434.7L968.8 434.7L969.3 434.7L969.8 434.7L970.3 434.7L970.8 434.7L971.3 434.7L971.8 434.7L972.3 434.7L972.8 434.7L973.3 434.7L973.8 434.7L974.3 434.7L974.8 434.7L975.3 434.7L975.8 434.7L976.3 434.7L976.8 434.7L977.3 434.7L977.8 434.7L978.3 434.7L978.8 434.7L979.3 434.7L979.8 434.7L980.3 434.7L980.8 434.7L981.3 434.7L981.3 435.7L980.8 435.7L980.3 435.7L979.8 435.7L979.3 435.7L978.8 435.7L978.3 435.7L977.8 435.7L977.3 435.7L976.8 435.7L976.3 435.7L975.8 435.7L975.3 435.7L974.8 435.7L974.3 435.7L973.8 435.7L973.3 435.7L972.8 435.7L972.3 435.7L971.8 435.7L971.3 435.7L970.8 435.7L970.3 435.7L969.8 435.7L969.3 435.7L968.8 435.7L968.3 435.7L967.8 435.7L967.3 435.7L966.8 435.7L966.3 435.7L965.8 435.7L965.3 435.7L964.8 435.7L964.3 435.7L963.8 435.7L963.3 435.7L962.8 435.7L962.3 435.7L961.8 435.7L961.3 435.7L960.8 435.7L960.3 435.7L959.8 435.7L959.3 435.9L958.8 437.6L958.3 438L957.8 438.3L957.3 439.8L956.8 442.7L956.3 441.8L955.8 438.7L955.3 441.4L954.8 443.8L954.3 443.9L953.8 440.2L953.3 438.7L952.8 440.7L952.3 441.6L951.8 441.2L951.3 441.6L950.8 441.5L950.3 441.3L949.8 442.2L949.3 441.1L948.8 441.1L948.3 441.6L947.8 440.7L947.3 442.1L946.8 439.8L946.3 436.8L945.8 436L945.3 435.7L944.8 435.7L944.3 435.7L943.8 435.7L943.3 435.7L942.8 435.7L942.3 435.7L941.8 435.7L941.3 435.7L940.8 435.7L940.3 435.7L939.8 435.7L939.3 435.7L938.8 436.3L938.3 437.5L937.8 437.7L937.3 437.9L936.8 438.2L936.3 438.4L935.8 442.7L935.3 442.5L934.8 439.2L934.3 439.1L933.8 442.8L933.3 443.5L932.8 440.6L932.3 440.1L931.8 438.6L931.3 441.8L930.8 441.7L930.3 440.6L929.8 441.2L929.3 441.7L928.8 441.3L928.3 441.5L927.8 440.9L927.3 441.4L926.8 441.6L926.3 441.7L925.8 441L925.3 438.9L924.8 436.2L924.3 435.7L923.8 435.7L923.3 435.7L922.8 435.7L922.3 435.7L921.8 435.7L921.3 435.7L920.8 435.7L920.3 435.7L919.8 435.7L919.3 435.7L918.8 435.7L918.3 435.7L917.8 435.7L917.3 435.7L916.8 435.7L916.3 435.7L915.8 435.7L915.3 435.7L914.8 435.7L914.3 435.7L913.8 435.7L913.3 435.7L912.8 435.7L912.3 435.7L911.8 435.7L911.3 435.7L910.8 435.7L910.3 435.7L909.8 435.7L909.3 435.7L908.8 435.7L908.3 435.7L907.8 435.7L907.3 435.7L906.8 435.7L906.3 435.7L905.8 435.7L905.3 435.7L904.8 435.7L904.3 435.7L903.8 436.7L903.3 437.9L902.8 437.7L902.3 439.8L901.8 442.7L901.3 442.2L900.8 438.6L900.3 441.2L899.8 444.2L899.3 443L898.8 439.5L898.3 438.7L897.8 440.2L897.3 441.2L896.8 442L896.3 441.5L895.8 441.9L895.3 440.9L894.8 442L894.3 441.1L893.8 441.7L893.3 440.6L892.8 442.1L892.3 441.6L891.8 440L891.3 436.6L890.8 436.1L890.3 435.7L889.8 435.7L889.3 435.7L888.8 435.7L888.3 435.7L887.8 435.7L887.3 435.7L886.8 435.7L886.3 435.7L885.8 435.7L885.3 435.7L884.8 435.7L884.3 436L883.8 437.1L883.3 437.6L882.8 437.8L882.3 442.3L881.8 441.5L881.3 438.3L880.8 439.1L880.3 443.6L879.8 442.8L879.3 440.5L878.8 440.5L878.3 438.5L877.8 442.1L877.3 441.3L876.8 440.9L876.3 440.6L875.8 442L875.3 442.1L874.8 441.5L874.3 441.8L873.8 441.2L873.3 440.6L872.8 441.4L872.3 440.8L871.8 438.3L871.3 436.1Z" fill="#387ac8"/>
<path d="M981.4 434.3L981.9 431.8L982.4 429.2L982.9 428.8L983.4 429.1L983.9 429.1L984.4 429L984.9 428.7L985.4 428.6L985.9 428.9L986.4 429.1L986.9 428.8L987.4 428.9L987.9 428.8L988.4 431.8L988.9 430.1L989.4 430L989.9 426.6L990.4 426.6L990.9 431.3L991.4 431.7L991.9 428.2L992.4 428.2L992.9 432.5L993.4 432.8L993.9 433.1L994.4 434.3L994.9 434.7L995.4 434.7L995.9 434.7L996.4 434.7L996.9 434.7L997.4 434.7L997.9 434.7L998.4 434.7L998.9 434.7L999.4 434.7L999.9 434.7L1000.4 434.7L1000.9 434.2L1001.4 433.9L1001.9 430.3L1002.4 429.3L1002.9 428.7L1003.4 429.1L1003.9 429.1L1004.4 429.2L1004.9 428.6L1005.4 428.8L1005.9 428.6L1006.4 429.1L1006.9 428.8L1007.4 429.2L1007.9 429.6L1008.4 431.8L1008.9 430.9L1009.4 426.6L1009.9 426.6L1010.4 428.4L1010.9 431.8L1011.4 428.2L1011.9 428.2L1012.4 430.1L1012.4 439.8L1011.9 442.7L1011.4 442.2L1010.9 438.6L1010.4 441.2L1009.9 444.2L1009.4 443L1008.9 439.5L1008.4 438.7L1007.9 440.2L1007.4 441.2L1006.9 442L1006.4 441.5L1005.9 441.9L1005.4 440.9L1004.9 442L1004.4 441.1L1003.9 441.7L1003.4 440.6L1002.9 442.1L1002.4 441.6L1001.9 440L1001.4 436.6L1000.9 436.1L1000.4 435.7L999.9 435.7L999.4 435.7L998.9 435.7L998.4 435.7L997.9 435.7L997.4 435.7L996.9 435.7L996.4 435.7L995.9 435.7L995.4 435.7L994.9 435.7L994.4 436L993.9 437.1L993.4 437.6L992.9 437.8L992.4 442.3L991.9 441.5L991.4 438.3L990.9 439.1L990.4 443.6L989.9 442.8L989.4 440.5L988.9 440.5L988.4 438.5L987.9 442.1L987.4 441.3L986.9 440.9L986.4 440.6L985.9 442L985.4 442.1L984.9 441.5L984.4 441.8L983.9 441.2L983.4 440.6L982.9 441.4L982.4 440.8L981.9 438.3L981.4 436.1Z" fill="#387ac8"/>
<path d="M497.6 524.4l1.7 1.9l1.7-1.9zM497.6 580.4l1.7-1.9l1.7 1.9z" fill="#141616"/>
<path d="M389.7 557.9L390.2 557.9L390.7 557.9L391.2 557.9L391.7 557.9L392.2 557.9L392.7 557.9L393.2 557.9L393.7 557.9L394.2 557.9L394.7 557.9L395.2 557.9L395.7 557.9L396.2 557.9L396.7 557.9L397.2 557.9L397.7 557.9L398.2 557.9L398.7 557.9L399.2 557.9L399.7 557.9L400.2 557.9L400.7 557.9L401.2 557.9L401.7 556.6L402.2 556.6L402.7 555.6L403.2 553.7L403.7 551.6L404.2 550.4L404.7 547.4L405.2 545.1L405.7 545.3L406.2 544.7L406.7 545.4L407.2 543.9L407.7 544.4L408.2 545.4L408.7 545.4L409.2 544.1L409.7 544L410.2 544.9L410.7 545.2L411.2 543.8L411.7 545.1L412.2 544.6L412.7 544L413.2 544.3L413.7 544.6L414.2 545.2L414.7 544.1L415.2 545.6L415.7 546.1L416.2 545.4L416.7 544L417.2 545.7L417.7 545.7L418.2 543.8L418.7 544.9L419.2 545.7L419.7 546.2L420.2 546.3L420.7 545.5L421.2 545.1L421.7 546L422.2 544.4L422.7 545.3L423.2 544L423.7 545.7L424.2 545.7L424.7 544.4L425.2 544.4L425.7 545.3L426.2 545.5L426.7 544.2L427.2 544.7L427.7 546.5L428.2 546.1L428.7 547.8L429.2 550.3L429.7 552.1L430.2 554.6L430.7 556.4L431.2 556.4L431.7 556.1L432.2 556.1L432.7 556.3L433.2 556.4L433.7 556.5L434.2 556.5L434.7 556.8L435.2 556.7L435.7 556.9L436.2 557.1L436.7 557.1L437.2 557.2L437.7 557.2L438.2 557.3L438.7 557.3L439.2 557.4L439.7 557.5L440.2 557.6L440.7 557.7L441.2 557.8L441.7 557.8L442.2 557.9L442.7 557.9L443.2 557.9L443.7 557.9L444.2 557.9L444.7 557.9L445.2 557.9L445.7 557.9L446.2 557.9L446.7 557.9L447.2 557.9L447.7 557.9L448.2 557.9L448.7 557.9L449.2 557.9L449.7 557.9L450.2 557.9L450.7 557.9L451.2 557.9L451.7 557.9L452.2 557.9L452.7 557.9L453.2 557.9L453.7 557.9L454.2 557.9L454.7 557.9L455.2 557.9L455.7 557.9L456.2 557.9L456.7 557.9L457.2 557.9L457.7 557.9L458.2 557.9L458.7 557.9L459.2 557.9L459.7 557.9L460.2 557.9L460.7 557.9L461.2 557.9L461.7 557.9L462.2 557.9L462.7 557.9L463.2 557.9L463.7 557.9L464.2 557.9L464.7 557.9L465.2 557.9L465.7 557.9L466.2 557.9L466.7 557.9L467.2 557.9L467.7 557.9L468.2 557.9L468.7 557.9L469.2 557.9L469.7 557.9L470.2 557.9L470.7 557.9L471.2 557.9L471.7 557.9L472.2 557.9L472.7 557.9L473.2 557.9L473.7 557.9L474.2 557.9L474.7 557.9L475.2 557.9L475.7 557.9L476.2 557.9L476.7 557.9L477.2 557.9L477.7 557.9L478.2 557.9L478.7 557.9L479.2 557.9L479.7 557.9L480.2 557.9L480.7 557.9L481.2 557.9L481.7 557.9L482.2 557.9L482.7 557.9L483.2 557.9L483.7 557.9L484.2 557.9L484.7 557.9L485.2 557.9L485.7 557.9L486.2 557.9L486.7 557.9L487.2 557.9L487.7 557.9L488.2 557.9L488.7 557.9L489.2 557.9L489.7 557.9L490.2 557.9L490.7 557.9L491.2 557.9L491.7 557.9L492.2 557.9L492.7 557.9L493.2 557.9L493.7 557.9L494.2 557.9L494.7 557.9L495.2 557.9L495.7 557.9L496.2 557.9L496.7 557.9L497.2 557.9L497.7 557.9L498.2 557.9L498.7 557.9L499.2 557.9L499.2 558.9L498.7 558.9L498.2 558.9L497.7 558.9L497.2 558.9L496.7 558.9L496.2 558.9L495.7 558.9L495.2 558.9L494.7 558.9L494.2 558.9L493.7 558.9L493.2 558.9L492.7 558.9L492.2 558.9L491.7 558.9L491.2 558.9L490.7 558.9L490.2 558.9L489.7 558.9L489.2 558.9L488.7 558.9L488.2 558.9L487.7 558.9L487.2 558.9L486.7 558.9L486.2 558.9L485.7 558.9L485.2 558.9L484.7 558.9L484.2 558.9L483.7 558.9L483.2 558.9L482.7 558.9L482.2 558.9L481.7 558.9L481.2 558.9L480.7 558.9L480.2 558.9L479.7 558.9L479.2 558.9L478.7 558.9L478.2 558.9L477.7 558.9L477.2 558.9L476.7 558.9L476.2 558.9L475.7 558.9L475.2 558.9L474.7 558.9L474.2 558.9L473.7 558.9L473.2 558.9L472.7 558.9L472.2 558.9L471.7 558.9L471.2 558.9L470.7 558.9L470.2 558.9L469.7 558.9L469.2 558.9L468.7 558.9L468.2 558.9L467.7 558.9L467.2 558.9L466.7 558.9L466.2 558.9L465.7 558.9L465.2 558.9L464.7 558.9L464.2 558.9L463.7 558.9L463.2 558.9L462.7 558.9L462.2 558.9L461.7 558.9L461.2 558.9L460.7 558.9L460.2 558.9L459.7 558.9L459.2 558.9L458.7 558.9L458.2 558.9L457.7 558.9L457.2 558.9L456.7 558.9L456.2 558.9L455.7 558.9L455.2 558.9L454.7 558.9L454.2 558.9L453.7 558.9L453.2 558.9L452.7 558.9L452.2 558.9L451.7 558.9L451.2 558.9L450.7 558.9L450.2 558.9L449.7 558.9L449.2 558.9L448.7 558.9L448.2 558.9L447.7 558.9L447.2 558.9L446.7 558.9L446.2 558.9L445.7 558.9L445.2 558.9L444.7 558.9L444.2 558.9L443.7 558.9L443.2 558.9L442.7 558.9L442.2 558.9L441.7 559L441.2 559L440.7 559.1L440.2 559.2L439.7 559.3L439.2 559.4L438.7 559.4L438.2 559.4L437.7 559.6L437.2 559.7L436.7 559.8L436.2 559.7L435.7 559.8L435.2 560.2L434.7 560L434.2 560.4L433.7 560.2L433.2 560.4L432.7 560.5L432.2 560.5L431.7 560.9L431.2 560.3L430.7 560.5L430.2 561.8L429.7 564.8L429.2 566.7L428.7 568.4L428.2 569.5L427.7 569.3L427.2 571L426.7 571.7L426.2 569.9L425.7 571.8L425.2 571.7L424.7 572.6L424.2 571.6L423.7 571.6L423.2 573L422.7 571.1L422.2 570.7L421.7 571.8L421.2 570.6L420.7 571.1L420.2 570.1L419.7 569.6L419.2 570.1L418.7 571.1L418.2 572.9L417.7 570.2L417.2 571.9L416.7 573.9L416.2 571.1L415.7 569.8L415.2 571.2L414.7 573.1L414.2 571.1L413.7 573.2L413.2 572.6L412.7 572.9L412.2 571.5L411.7 572.4L411.2 571.3L410.7 572.1L410.2 571.4L409.7 571.6L409.2 573.3L408.7 570.5L408.2 571.5L407.7 573L407.2 572L406.7 572.4L406.2 572L405.7 570.2L405.2 571.7L404.7 570.2L404.2 566.1L403.7 565.5L403.2 563L402.7 560.9L402.2 560L401.7 560.2L401.2 558.9L400.7 558.9L400.2 558.9L399.7 558.9L399.2 558.9L398.7 558.9L398.2 558.9L397.7 558.9L397.2 558.9L396.7 558.9L396.2 558.9L395.7 558.9L395.2 558.9L394.7 558.9L394.2 558.9L393.7 558.9L393.2 558.9L392.7 558.9L392.2 558.9L391.7 558.9L391.2 558.9L390.7 558.9L390.2 558.9L389.7 558.9Z" fill="#5cabf8"/>
<path d="M499.3 557.9L499.8 557.9L500.3 557.9L500.8 557.9L501.3 557.9L501.8 557.9L502.3 557.9L502.8 557.9L503.3 557.9L503.8 557.9L504.3 557.9L504.8 557.9L505.3 557.9L505.8 557.9L506.3 557.9L506.8 557.9L507.3 557.9L507.8 557.9L508.3 557.9L508.8 557.9L509.3 557.9L509.8 557.9L510.3 557.9L510.8 557.9L511.3 556.6L511.8 556.6L512.3 555.6L512.8 553.7L513.3 551.6L513.8 550.4L514.3 547.4L514.8 545.1L515.3 545.3L515.8 544.7L516.3 545.4L516.8 543.9L517.3 544.4L517.8 545.4L518.3 545.4L518.8 544.1L519.3 544L519.8 544.9L520.3 545.2L520.8 543.8L521.3 545.1L521.8 544.6L522.3 544L522.8 544.3L523.3 544.6L523.8 545.2L524.3 544.1L524.8 545.6L525.3 546.1L525.8 545.4L526.3 544L526.8 545.7L527.3 545.7L527.8 543.8L528.3 544.9L528.8 545.7L529.3 546.2L529.8 546.3L530.3 545.5L530.8 545.1L531.3 546L531.8 544.4L532.3 545.3L532.8 544L533.3 545.7L533.8 545.7L534.3 544.4L534.8 544.4L535.3 545.3L535.8 545.5L536.3 544.2L536.8 544.7L537.3 546.5L537.8 546.1L538.3 547.8L538.8 550.3L539.3 552.1L539.8 554.6L540.3 556.4L540.8 556.4L541.3 556.1L541.8 556.1L542.3 556.3L542.8 556.4L543.3 556.5L543.8 556.5L544.3 556.8L544.8 556.7L545.3 556.9L545.8 557.1L546.3 557.1L546.8 557.2L547.3 557.2L547.8 557.3L548.3 557.3L548.8 557.4L549.3 557.5L549.8 557.6L550.3 557.7L550.8 557.8L551.3 557.8L551.8 557.9L552.3 557.9L552.8 557.9L553.3 557.9L553.8 557.9L554.3 557.9L554.8 557.9L555.3 557.9L555.8 557.9L556.3 557.9L556.8 557.9L557.3 557.9L557.8 557.9L558.3 557.9L558.8 557.9L559.3 557.9L559.8 557.9L560.3 557.9L560.8 557.9L561.3 557.9L561.8 557.9L562.3 557.9L562.8 557.9L563.3 557.9L563.8 557.9L564.3 557.9L564.8 557.9L565.3 557.9L565.8 557.9L566.3 557.9L566.8 557.9L567.3 557.9L567.8 557.9L568.3 557.9L568.8 557.9L569.3 557.9L569.8 557.9L570.3 557.9L570.8 557.9L571.3 557.9L571.8 557.9L572.3 557.9L572.8 557.9L573.3 557.9L573.8 557.9L574.3 557.9L574.8 557.9L575.3 557.9L575.8 557.9L576.3 557.9L576.8 557.9L577.3 557.9L577.8 557.9L578.3 557.9L578.8 557.9L579.3 557.9L579.8 557.9L580.3 557.9L580.8 557.9L581.3 557.9L581.8 557.9L582.3 557.9L582.8 557.9L583.3 557.9L583.8 557.9L584.3 557.9L584.8 557.9L585.3 557.9L585.8 557.9L586.3 557.9L586.8 557.9L587.3 557.9L587.8 557.9L588.3 557.9L588.8 557.9L589.3 557.9L589.8 557.9L590.3 557.9L590.8 557.9L591.3 557.9L591.8 557.9L592.3 557.9L592.8 557.9L593.3 557.9L593.8 557.9L594.3 557.9L594.8 557.9L595.3 557.9L595.8 557.9L596.3 557.9L596.8 557.9L597.3 557.9L597.8 557.9L598.3 557.9L598.8 557.9L599.3 557.9L599.8 557.9L600.3 557.9L600.8 557.9L601.3 557.9L601.8 557.9L602.3 557.9L602.8 557.9L603.3 557.9L603.8 557.9L604.3 557.9L604.8 557.9L605.3 557.9L605.8 557.9L606.3 557.9L606.8 557.9L607.3 557.9L607.8 557.9L607.8 558.9L607.3 558.9L606.8 558.9L606.3 558.9L605.8 558.9L605.3 558.9L604.8 558.9L604.3 558.9L603.8 558.9L603.3 558.9L602.8 558.9L602.3 558.9L601.8 558.9L601.3 558.9L600.8 558.9L600.3 558.9L599.8 558.9L599.3 558.9L598.8 558.9L598.3 558.9L597.8 558.9L597.3 558.9L596.8 558.9L596.3 558.9L595.8 558.9L595.3 558.9L594.8 558.9L594.3 558.9L593.8 558.9L593.3 558.9L592.8 558.9L592.3 558.9L591.8 558.9L591.3 558.9L590.8 558.9L590.3 558.9L589.8 558.9L589.3 558.9L588.8 558.9L588.3 558.9L587.8 558.9L587.3 558.9L586.8 558.9L586.3 558.9L585.8 558.9L585.3 558.9L584.8 558.9L584.3 558.9L583.8 558.9L583.3 558.9L582.8 558.9L582.3 558.9L581.8 558.9L581.3 558.9L580.8 558.9L580.3 558.9L579.8 558.9L579.3 558.9L578.8 558.9L578.3 558.9L577.8 558.9L577.3 558.9L576.8 558.9L576.3 558.9L575.8 558.9L575.3 558.9L574.8 558.9L574.3 558.9L573.8 558.9L573.3 558.9L572.8 558.9L572.3 558.9L571.8 558.9L571.3 558.9L570.8 558.9L570.3 558.9L569.8 558.9L569.3 558.9L568.8 558.9L568.3 558.9L567.8 558.9L567.3 558.9L566.8 558.9L566.3 558.9L565.8 558.9L565.3 558.9L564.8 558.9L564.3 558.9L563.8 558.9L563.3 558.9L562.8 558.9L562.3 558.9L561.8 558.9L561.3 558.9L560.8 558.9L560.3 558.9L559.8 558.9L559.3 558.9L558.8 558.9L558.3 558.9L557.8 558.9L557.3 558.9L556.8 558.9L556.3 558.9L555.8 558.9L555.3 558.9L554.8 558.9L554.3 558.9L553.8 558.9L553.3 558.9L552.8 558.9L552.3 558.9L551.8 558.9L551.3 559L550.8 559L550.3 559.1L549.8 559.2L549.3 559.3L548.8 559.4L548.3 559.4L547.8 559.4L547.3 559.6L546.8 559.7L546.3 559.8L545.8 559.7L545.3 559.8L544.8 560.2L544.3 560L543.8 560.4L543.3 560.2L542.8 560.4L542.3 560.5L541.8 560.5L541.3 560.9L540.8 560.3L540.3 560.5L539.8 561.8L539.3 564.8L538.8 566.7L538.3 568.4L537.8 569.5L537.3 569.3L536.8 571L536.3 571.7L535.8 569.9L535.3 571.8L534.8 571.7L534.3 572.6L533.8 571.6L533.3 571.6L532.8 573L532.3 571.1L531.8 570.7L531.3 571.8L530.8 570.6L530.3 571.1L529.8 570.1L529.3 569.6L528.8 570.1L528.3 571.1L527.8 572.9L527.3 570.2L526.8 571.9L526.3 573.9L525.8 571.1L525.3 569.8L524.8 571.2L524.3 573.1L523.8 571.1L523.3 573.2L522.8 572.6L522.3 572.9L521.8 571.5L521.3 572.4L520.8 571.3L520.3 572.1L519.8 571.4L519.3 571.6L518.8 573.3L518.3 570.5L517.8 571.5L517.3 573L516.8 572L516.3 572.4L515.8 572L515.3 570.2L514.8 571.7L514.3 570.2L513.8 566.1L513.3 565.5L512.8 563L512.3 560.9L511.8 560L511.3 560.2L510.8 558.9L510.3 558.9L509.8 558.9L509.3 558.9L508.8 558.9L508.3 558.9L507.8 558.9L507.3 558.9L506.8 558.9L506.3 558.9L505.8 558.9L505.3 558.9L504.8 558.9L504.3 558.9L503.8 558.9L503.3 558.9L502.8 558.9L502.3 558.9L501.8 558.9L501.3 558.9L500.8 558.9L500.3 558.9L499.8 558.9L499.3 558.9Z" fill="#387ac8"/>
<path d="M733.9 552.3L734.4 549.9L734.9 549.8L735.4 548.5L735.9 549.3L736.4 549.1L736.9 549.2L737.4 548.6L737.9 548.7L738.4 549.1L738.9 548.8L739.4 549.1L739.9 548.4L740.4 548.5L740.9 549.5L741.4 549.1L741.9 549.2L742.4 549.6L742.9 549L743.4 548.5L743.9 549.7L744.4 550L744.9 553.3L745.4 556.5L745.9 557.9L746.4 557.9L746.9 557.9L747.4 557.2L747.9 555.2L748.4 552.4L748.9 549.5L749.4 549.8L749.9 549.9L750.4 549.4L750.9 549L751.4 549.6L751.9 550.6L752.4 553.5L752.9 556.5L753.4 557.9L753.9 557.9L754.4 557.1L754.9 555.8L755.4 552.5L755.9 549.4L756.4 550.1L756.9 549.2L757.4 549.1L757.9 549L758.4 552.3L758.9 555.8L759.4 557.9L759.9 557.9L760.4 557.9L760.9 557L761.4 556.5L761.9 552.9L762.4 549.5L762.9 548.7L763.4 548.7L763.9 549.5L764.4 549.1L764.9 548.6L765.4 548.4L765.9 549.5L766.4 549.4L766.9 549.6L767.4 548.6L767.9 549.1L768.4 549.7L768.9 549.2L769.4 549.7L769.9 548.5L770.4 549.8L770.9 548.3L771.4 548.9L771.9 548.2L772.4 549.5L772.9 549.3L773.4 549.8L773.9 549.5L774.4 549.7L774.9 549.1L775.4 550.4L775.9 553.3L776.4 556.3L776.9 556.3L777.4 556.5L777.9 556.8L778.4 557L778.9 557.3L779.4 557.4L779.9 557.6L780.4 557.9L780.9 557.9L781.4 557.9L781.9 557.9L782.4 557.9L782.9 557.9L783.4 557.9L783.9 557.9L784.4 557.9L784.9 557.9L785.4 557.9L785.9 557.9L786.4 557.9L786.9 557.9L787.4 557.9L787.4 558.9L786.9 558.9L786.4 558.9L785.9 558.9L785.4 558.9L784.9 558.9L784.4 558.9L783.9 558.9L783.4 558.9L782.9 558.9L782.4 558.9L781.9 558.9L781.4 558.9L780.9 558.9L780.4 558.9L779.9 559.3L779.4 559.3L778.9 559.6L778.4 559.8L777.9 559.9L777.4 560.4L776.9 560.5L776.4 560.3L775.9 563L775.4 565.4L774.9 567.2L774.4 567L773.9 567.6L773.4 567.1L772.9 567.5L772.4 566.8L771.9 567.8L771.4 567.9L770.9 567.4L770.4 566.2L769.9 568.5L769.4 567.3L768.9 566.8L768.4 567.6L767.9 567.9L767.4 567.3L766.9 567.2L766.4 567.3L765.9 567.2L765.4 568.8L764.9 568.4L764.4 568.3L763.9 567.8L763.4 567.4L762.9 568.2L762.4 567.8L761.9 564.2L761.4 560.4L760.9 559.8L760.4 558.9L759.9 558.9L759.4 558.9L758.9 561L758.4 564.5L757.9 567.2L757.4 567.6L756.9 567.9L756.4 566.9L755.9 567.4L755.4 564.8L754.9 561L754.4 559.6L753.9 558.9L753.4 558.9L752.9 560.2L752.4 563L751.9 566.7L751.4 567.6L750.9 567L750.4 567.4L749.9 567.2L749.4 566.7L748.9 566.3L748.4 563.8L747.9 561.6L747.4 559.5L746.9 558.9L746.4 558.9L745.9 558.9L745.4 560.5L744.9 563.1L744.4 567.4L743.9 567.2L743.4 567.8L742.9 567.1L742.4 566.5L741.9 566.9L741.4 568L740.9 566.7L740.4 567.7L739.9 569.1L739.4 568.3L738.9 567L738.4 567.4L737.9 567.1L737.4 568.1L736.9 567.9L736.4 567.4L735.9 567.7L735.4 568.5L734.9 567.3L734.4 566.6L733.9 563.9Z" fill="#5cabf8"/>
<path d="M331.8 586.2l1.7 1.9l1.7-1.9zM331.8 642.2l1.7-1.9l1.7 1.9z" fill="#141616"/>
<path d="M441.9 586.2l1.7 1.9l1.7-1.9zM441.9 642.2l1.7-1.9l1.7 1.9z" fill="#141616"/>
<path d="M552 586.2l1.7 1.9l1.7-1.9zM552 642.2l1.7-1.9l1.7 1.9z" fill="#141616"/>
<path d="M662.1 586.2l1.7 1.9l1.7-1.9zM662.1 642.2l1.7-1.9l1.7 1.9z" fill="#141616"/>
<path d="M772.2 586.2l1.7 1.9l1.7-1.9zM772.2 642.2l1.7-1.9l1.7 1.9z" fill="#141616"/>
<path d="M882.3 586.2l1.7 1.9l1.7-1.9zM882.3 642.2l1.7-1.9l1.7 1.9z" fill="#141616"/>
<path d="M992.4 586.2l1.7 1.9l1.7-1.9zM992.4 642.2l1.7-1.9l1.7 1.9z" fill="#141616"/>
<path d="M223.9 612.2L224.4 612.2L224.9 614.7L225.4 614L225.9 614.3L226.4 614.1L226.9 614.2L227.4 614.9L227.9 613.7L228.4 614.2L228.9 613.9L229.4 614.1L229.9 616.4L230.4 617.1L230.9 617.2L231.4 617.3L231.9 617.9L232.4 618.1L232.9 618.6L233.4 619.4L233.9 619.9L234.4 619.9L234.9 619.9L235.4 619.5L235.9 617.9L236.4 614.5L236.9 612L237.4 612L237.9 614.3L238.4 614.5L238.9 614.8L239.4 617.1L239.9 617.4L240.4 618.1L240.9 618.1L241.4 619.9L241.9 619.9L242.4 619.9L242.9 619.6L243.4 615L243.9 615L244.4 615.2L244.9 614.9L245.4 615.2L245.9 616.2L246.4 617.9L246.9 617.9L247.4 618.1L247.9 619.4L248.4 619.9L248.9 619.9L249.4 619.8L249.9 617L250.4 616.4L250.9 615.6L251.4 615.7L251.9 616.4L252.4 615.4L252.9 616.3L253.4 618.3L253.9 618.1L254.4 618.3L254.9 618.5L255.4 618.7L255.9 619.8L256.4 619.9L256.9 619.9L257.4 619.6L257.9 615.7L258.4 616L258.9 616L259.4 615.6L259.9 615L260.4 615.2L260.9 612.2L261.4 610.6L261.9 611.4L262.4 617.1L262.9 617.5L263.4 617.8L263.9 618.5L264.4 618.8L264.9 619.8L265.4 619.6L265.9 619.2L266.4 619.4L266.9 619.4L267.4 619.6L267.9 619.8L268.4 619.9L268.9 619.9L269.4 619.9L269.9 619.9L270.4 619.9L270.9 619.9L271.4 619.9L271.9 619.9L272.4 619.9L272.9 619.9L273.4 619.9L273.9 619.9L274.4 619.9L274.9 619.9L275.4 619.9L275.9 619.9L276.4 619.9L276.9 619.9L277.4 619.5L277.9 614.5L278.4 613.6L278.9 613.7L279.4 614.5L279.9 614.3L280.4 614.1L280.9 614.3L281.4 614L281.9 613.7L282.4 614.2L282.9 614.3L283.4 613.3L283.9 614.4L284.4 616.7L284.9 616.8L285.4 617.1L285.9 617.5L286.4 618.1L286.9 618.2L287.4 618.3L287.9 618.7L288.4 619.9L288.9 619.9L289.4 619.9L289.9 619.9L290.4 619.9L290.9 619.5L291.4 614.8L291.9 615.3L292.4 614.4L292.9 615.2L293.4 615.2L293.9 614.6L294.4 614.3L294.9 617.4L295.4 617.4L295.9 617.5L296.4 617.9L296.9 619.1L297.4 619.9L297.9 619.5L298.4 618.2L298.9 613.7L299.4 612.2L299.9 613L300.4 614L300.9 614L301.4 613.8L301.9 614.6L302.4 614.4L302.9 614.6L303.4 613.7L303.9 617L304.4 616.8L304.9 617.2L305.4 617.8L305.9 617.9L306.4 618.3L306.9 619.1L307.4 619.9L307.9 619.3L308.4 619.2L308.9 619.3L309.4 619.4L309.9 619.5L310.4 619.6L310.9 619.7L311.4 619.9L311.9 619.9L312.4 619.9L312.9 619.9L313.4 619.9L313.9 619.9L314.4 619.9L314.9 619.9L315.4 619.9L315.9 619.9L316.4 619.9L316.9 619.9L317.4 619.9L317.9 619.9L318.4 619.9L318.9 619.9L319.4 619.9L319.9 619.9L320.4 619.9L320.9 619.9L321.4 619.9L321.9 619.9L322.4 619.9L322.9 619.9L323.4 619.9L323.9 619.9L324.4 619.9L324.9 619.9L325.4 619.9L325.9 619.9L326.4 619.9L326.9 619.9L327.4 619.9L327.9 619.9L328.4 619.9L328.9 619.9L329.4 619.9L329.9 619.9L330.4 619.9L330.9 619.9L331.4 619.9L331.9 619.9L332.4 619.9L332.9 619.9L333.4 619.9L333.4 620.9L332.9 620.9L332.4 620.9L331.9 620.9L331.4 620.9L330.9 620.9L330.4 620.9L329.9 620.9L329.4 620.9L328.9 620.9L328.4 620.9L327.9 620.9L327.4 620.9L326.9 620.9L326.4 620.9L325.9 620.9L325.4 620.9L324.9 620.9L324.4 620.9L323.9 620.9L323.4 620.9L322.9 620.9L322.4 620.9L321.9 620.9L321.4 620.9L320.9 620.9L320.4 620.9L319.9 620.9L319.4 620.9L318.9 620.9L318.4 620.9L317.9 620.9L317.4 620.9L316.9 620.9L316.4 620.9L315.9 620.9L315.4 620.9L314.9 620.9L314.4 620.9L313.9 620.9L313.4 620.9L312.9 620.9L312.4 620.9L311.9 620.9L311.4 620.9L310.9 621L310.4 621.2L309.9 621.3L309.4 621.3L308.9 621.6L308.4 621.6L307.9 621.4L307.4 620.9L306.9 621.8L306.4 622.5L305.9 623.1L305.4 623.1L304.9 623.4L304.4 623.7L303.9 623.6L303.4 626.5L302.9 625.9L302.4 625.8L301.9 626.3L301.4 626.8L300.9 626.7L300.4 626.8L299.9 627L299.4 628.6L298.9 626.3L298.4 622.5L297.9 621.4L297.4 620.9L296.9 621.7L296.4 622.9L295.9 623L295.4 623.2L294.9 623.3L294.4 626.4L293.9 626.7L293.4 625.4L292.9 625.8L292.4 626.8L291.9 625.7L291.4 625.6L290.9 621.3L290.4 620.9L289.9 620.9L289.4 620.9L288.9 620.9L288.4 620.9L287.9 622L287.4 622.6L286.9 622.3L286.4 622.6L285.9 623.4L285.4 623.7L284.9 623.8L284.4 624L283.9 626.6L283.4 627L282.9 626.6L282.4 626.1L281.9 626.8L281.4 626.1L280.9 626.2L280.4 626.7L279.9 626.4L279.4 626.3L278.9 626.6L278.4 626.5L277.9 626.5L277.4 621.3L276.9 620.9L276.4 620.9L275.9 620.9L275.4 620.9L274.9 620.9L274.4 620.9L273.9 620.9L273.4 620.9L272.9 620.9L272.4 620.9L271.9 620.9L271.4 620.9L270.9 620.9L270.4 620.9L269.9 620.9L269.4 620.9L268.9 620.9L268.4 620.9L267.9 621L267.4 621.2L266.9 621.3L266.4 621.3L265.9 621.4L265.4 621.2L264.9 621.1L264.4 621.9L263.9 622.3L263.4 622.7L262.9 623.3L262.4 623.8L261.9 628.8L261.4 629.5L260.9 627.8L260.4 625.8L259.9 626L259.4 624.9L258.9 625L258.4 624.8L257.9 625.2L257.4 621.2L256.9 620.9L256.4 620.9L255.9 621L255.4 621.9L254.9 622.3L254.4 622.6L253.9 622.7L253.4 622.3L252.9 624.5L252.4 625.6L251.9 624.5L251.4 624.9L250.9 625.1L250.4 624.1L249.9 623.8L249.4 621L248.9 620.9L248.4 620.9L247.9 621.5L247.4 622.7L246.9 623L246.4 623L245.9 624.2L245.4 625.2L244.9 625.4L244.4 625.2L243.9 626.1L243.4 625.5L242.9 621.1L242.4 620.9L241.9 620.9L241.4 620.9L240.9 622.6L240.4 622.7L239.9 623.4L239.4 623.6L238.9 625.8L238.4 626.5L237.9 626L237.4 628L236.9 629L236.4 625.7L235.9 622.8L235.4 621.2L234.9 620.9L234.4 620.9L233.9 620.9L233.4 621.4L232.9 622.1L232.4 622.5L231.9 622.9L231.4 623.3L230.9 623.7L230.4 623.7L229.9 624.4L229.4 626.5L228.9 626.6L228.4 627.1L227.9 626.5L227.4 626.1L226.9 626.9L226.4 626L225.9 626.8L225.4 627.2L224.9 625.4L224.4 629.1L223.9 628.8Z" fill="#5cabf8"/>
<path d="M333.5 612.2L334 612.2L334.5 614.7L335 614L335.5 614.3L336 614.1L336.5 614.2L337 614.9L337.5 613.7L338 614.2L338.5 613.9L339 614.1L339.5 616.4L340 617.1L340.5 617.2L341 617.3L341.5 617.9L342 618.1L342.5 618.6L343 619.4L343.5 619.9L344 619.9L344.5 619.9L345 619.5L345.5 617.9L346 614.5L346.5 612L347 612L347.5 614.3L348 614.5L348.5 614.8L349 617.1L349.5 617.4L350 618.1L350.5 618.1L351 619.9L351.5 619.9L352 619.9L352.5 619.6L353 615L353.5 615L354 615.2L354.5 614.9L355 615.2L355.5 616.2L356 617.9L356.5 617.9L357 618.1L357.5 619.4L358 619.9L358.5 619.9L359 619.8L359.5 617L360 616.4L360.5 615.6L361 615.7L361.5 616.4L362 615.4L362.5 616.3L363 618.3L363.5 618.1L364 618.3L364.5 618.5L365 618.7L365.5 619.8L366 619.9L366.5 619.9L367 619.6L367.5 615.7L368 616L368.5 616L369 615.6L369.5 615L370 615.2L370.5 612.2L371 610.6L371.5 611.4L372 617.1L372.5 617.5L373 617.8L373.5 618.5L374 618.8L374.5 619.8L375 619.6L375.5 619.2L376 619.4L376.5 619.4L377 619.6L377.5 619.8L378 619.9L378.5 619.9L379 619.9L379.5 619.9L380 619.9L380.5 619.9L381 619.9L381.5 619.9L382 619.9L382.5 619.9L383 619.9L383.5 619.9L384 619.9L384.5 619.9L385 619.9L385.5 619.9L386 619.9L386.5 619.9L387 619.5L387.5 614.5L388 613.6L388.5 613.7L389 614.5L389.5 614.3L390 614.1L390.5 614.3L391 614L391.5 613.7L392 614.2L392.5 614.3L393 613.3L393.5 614.4L394 616.7L394.5 616.8L395 617.1L395.5 617.5L396 618.1L396.5 618.2L397 618.3L397.5 618.7L398 619.9L398.5 619.9L399 619.9L399.5 619.9L400 619.9L400.5 619.5L401 614.8L401.5 615.3L402 614.4L402.5 615.2L403 615.2L403.5 614.6L404 614.3L404.5 617.4L405 617.4L405.5 617.5L406 617.9L406.5 619.1L407 619.9L407.5 619.5L408 618.2L408.5 613.7L409 612.2L409.5 613L410 614L410.5 614L411 613.8L411.5 614.6L412 614.4L412.5 614.6L413 613.7L413.5 617L414 616.8L414.5 617.2L415 617.8L415.5 617.9L416 618.3L416.5 619.1L417 619.9L417.5 619.3L418 619.2L418.5 619.3L419 619.4L419.5 619.5L420 619.6L420.5 619.7L421 619.9L421.5 619.9L422 619.9L422.5 619.9L423 619.9L423.5 619.9L424 619.9L424.5 619.9L425 619.9L425.5 619.9L426 619.9L426.5 619.9L427 619.9L427.5 619.9L428 619.9L428.5 619.9L429 619.9L429.5 619.9L430 619.9L430.5 619.9L431 619.9L431.5 619.9L432 619.9L432.5 619.9L433 619.9L433.5 619.9L434 619.9L434.5 619.9L435 619.9L435.5 619.9L436 619.9L436.5 619.9L437 619.9L437.5 619.9L438 619.9L438.5 619.9L439 619.9L439.5 619.9L440 619.9L440.5 619.9L441 619.9L441.5 619.9L442 619.9L442.5 619.9L443 619.9L443.5 619.9L443.5 620.9L443 620.9L442.5 620.9L442 620.9L441.5 620.9L441 620.9L440.5 620.9L440 620.9L439.5 620.9L439 620.9L438.5 620.9L438 620.9L437.5 620.9L437 620.9L436.5 620.9L436 620.9L435.5 620.9L435 620.9L434.5 620.9L434 620.9L433.5 620.9L433 620.9L432.5 620.9L432 620.9L431.5 620.9L431 620.9L430.5 620.9L430 620.9L429.5 620.9L429 620.9L428.5 620.9L428 620.9L427.5 620.9L427 620.9L426.5 620.9L426 620.9L425.5 620.9L425 620.9L424.5 620.9L424 620.9L423.5 620.9L423 620.9L422.5 620.9L422 620.9L421.5 620.9L421 620.9L420.5 621L420 621.2L419.5 621.3L419 621.3L418.5 621.6L418 621.6L417.5 621.4L417 620.9L416.5 621.8L416 622.5L415.5 623.1L415 623.1L414.5 623.4L414 623.7L413.5 623.6L413 626.5L412.5 625.9L412 625.8L411.5 626.3L411 626.8L410.5 626.7L410 626.8L409.5 627L409 628.6L408.5 626.3L408 622.5L407.5 621.4L407 620.9L406.5 621.7L406 622.9L405.5 623L405 623.2L404.5 623.3L404 626.4L403.5 626.7L403 625.4L402.5 625.8L402 626.8L401.5 625.7L401 625.6L400.5 621.3L400 620.9L399.5 620.9L399 620.9L398.5 620.9L398 620.9L397.5 622L397 622.6L396.5 622.3L396 622.6L395.5 623.4L395 623.7L394.5 623.8L394 624L393.5 626.6L393 627L392.5 626.6L392 626.1L391.5 626.8L391 626.1L390.5 626.2L390 626.7L389.5 626.4L389 626.3L388.5 626.6L388 626.5L387.5 626.5L387 621.3L386.5 620.9L386 620.9L385.5 620.9L385 620.9L384.5 620.9L384 620.9L383.5 620.9L383 620.9L382.5 620.9L382 620.9L381.5 620.9L381 620.9L380.5 620.9L380 620.9L379.5 620.9L379 620.9L378.5 620.9L378 620.9L377.5 621L377 621.2L376.5 621.3L376 621.3L375.5 621.4L375 621.2L374.5 621.1L374 621.9L373.5 622.3L373 622.7L372.5 623.3L372 623.8L371.5 628.8L371 629.5L370.5 627.8L370 625.8L369.5 626L369 624.9L368.5 625L368 624.8L367.5 625.2L367 621.2L366.5 620.9L366 620.9L365.5 621L365 621.9L364.5 622.3L364 622.6L363.5 622.7L363 622.3L362.5 624.5L362 625.6L361.5 624.5L361 624.9L360.5 625.1L360 624.1L359.5 623.8L359 621L358.5 620.9L358 620.9L357.5 621.5L357 622.7L356.5 623L356 623L355.5 624.2L355 625.2L354.5 625.4L354 625.2L353.5 626.1L353 625.5L352.5 621.1L352 620.9L351.5 620.9L351 620.9L350.5 622.6L350 622.7L349.5 623.4L349 623.6L348.5 625.8L348 626.5L347.5 626L347 628L346.5 629L346 625.7L345.5 622.8L345 621.2L344.5 620.9L344 620.9L343.5 620.9L343 621.4L342.5 622.1L342 622.5L341.5 622.9L341 623.3L340.5 623.7L340 623.7L339.5 624.4L339 626.5L338.5 626.6L338 627.1L337.5 626.5L337 626.1L336.5 626.9L336 626L335.5 626.8L335 627.2L334.5 625.4L334 629.1L333.5 628.8Z" fill="#387ac8"/>
<path d="M443.6 612.2L444.1 612.2L444.6 614.7L445.1 614L445.6 614.3L446.1 614.1L446.6 614.2L447.1 614.9L447.6 613.7L448.1 614.2L448.6 613.9L449.1 614.1L449.6 616.4L450.1 617.1L450.6 617.2L451.1 617.3L451.6 617.9L452.1 618.1L452.6 618.6L453.1 619.4L453.6 619.9L454.1 619.9L454.6 619.9L455.1 619.5L455.6 617.9L456.1 614.5L456.6 612L457.1 612L457.6 614.3L458.1 614.5L458.6 614.8L459.1 617.1L459.6 617.4L460.1 618.1L460.6 618.1L461.1 619.9L461.6 619.9L462.1 619.9L462.6 619.6L463.1 615L463.6 615L464.1 615.2L464.6 614.9L465.1 615.2L465.6 616.2L466.1 617.9L466.6 617.9L467.1 618.1L467.6 619.4L468.1 619.9L468.6 619.9L469.1 619.8L469.6 617L470.1 616.4L470.6 615.6L471.1 615.7L471.6 616.4L472.1 615.4L472.6 616.3L473.1 618.3L473.6 618.1L474.1 618.3L474.6 618.5L475.1 618.7L475.6 619.8L476.1 619.9L476.6 619.9L477.1 619.6L477.6 615.7L478.1 616L478.6 616L479.1 615.6L479.6 615L480.1 615.2L480.6 612.2L481.1 610.6L481.6 611.4L482.1 617.1L482.6 617.5L483.1 617.8L483.6 618.5L484.1 618.8L484.6 619.8L485.1 619.6L485.6 619.2L486.1 619.4L486.6 619.4L487.1 619.6L487.6 619.8L488.1 619.9L488.6 619.9L489.1 619.9L489.6 619.9L490.1 619.9L490.6 619.9L491.1 619.9L491.6 619.9L492.1 619.9L492.6 619.9L493.1 619.9L493.6 619.9L494.1 619.9L494.6 619.9L495.1 619.9L495.6 619.9L496.1 619.9L496.6 619.9L497.1 619.5L497.6 614.5L498.1 613.6L498.6 613.7L499.1 614.5L499.6 614.3L500.1 614.1L500.6 614.3L501.1 614L501.6 613.7L502.1 614.2L502.6 614.3L503.1 613.3L503.6 614.4L504.1 616.7L504.6 616.8L505.1 617.1L505.6 617.5L506.1 618.1L506.6 618.2L507.1 618.3L507.6 618.7L508.1 619.9L508.6 619.9L509.1 619.9L509.6 619.9L510.1 619.9L510.6 619.5L511.1 614.8L511.6 615.3L512.1 614.4L512.6 615.2L513.1 615.2L513.6 614.6L514.1 614.3L514.6 617.4L515.1 617.4L515.6 617.5L516.1 617.9L516.6 619.1L517.1 619.9L517.6 619.5L518.1 618.2L518.6 613.7L519.1 612.2L519.6 613L520.1 614L520.6 614L521.1 613.8L521.6 614.6L522.1 614.4L522.6 614.6L523.1 613.7L523.6 617L524.1 616.8L524.6 617.2L525.1 617.8L525.6 617.9L526.1 618.3L526.6 619.1L527.1 619.9L527.6 619.3L528.1 619.2L528.6 619.3L529.1 619.4L529.6 619.5L530.1 619.6L530.6 619.7L531.1 619.9L531.6 619.9L532.1 619.9L532.6 619.9L533.1 619.9L533.6 619.9L534.1 619.9L534.6 619.9L535.1 619.9L535.6 619.9L536.1 619.9L536.6 619.9L537.1 619.9L537.6 619.9L538.1 619.9L538.6 619.9L539.1 619.9L539.6 619.9L540.1 619.9L540.6 619.9L541.1 619.9L541.6 619.9L542.1 619.9L542.6 619.9L543.1 619.9L543.6 619.9L544.1 619.9L544.6 619.9L545.1 619.9L545.6 619.9L546.1 619.9L546.6 619.9L547.1 619.9L547.6 619.9L548.1 619.9L548.6 619.9L549.1 619.9L549.6 619.9L550.1 619.9L550.6 619.9L551.1 619.9L551.6 619.9L552.1 619.9L552.6 619.9L553.1 619.9L553.6 619.9L553.6 620.9L553.1 620.9L552.6 620.9L552.1 620.9L551.6 620.9L551.1 620.9L550.6 620.9L550.1 620.9L549.6 620.9L549.1 620.9L548.6 620.9L548.1 620.9L547.6 620.9L547.1 620.9L546.6 620.9L546.1 620.9L545.6 620.9L545.1 620.9L544.6 620.9L544.1 620.9L543.6 620.9L543.1 620.9L542.6 620.9L542.1 620.9L541.6 620.9L541.1 620.9L540.6 620.9L540.1 620.9L539.6 620.9L539.1 620.9L538.6 620.9L538.1 620.9L537.6 620.9L537.1 620.9L536.6 620.9L536.1 620.9L535.6 620.9L535.1 620.9L534.6 620.9L534.1 620.9L533.6 620.9L533.1 620.9L532.6 620.9L532.1 620.9L531.6 620.9L531.1 620.9L530.6 621L530.1 621.2L529.6 621.3L529.1 621.3L528.6 621.6L528.1 621.6L527.6 621.4L527.1 620.9L526.6 621.8L526.1 622.5L525.6 623.1L525.1 623.1L524.6 623.4L524.1 623.7L523.6 623.6L523.1 626.5L522.6 625.9L522.1 625.8L521.6 626.3L521.1 626.8L520.6 626.7L520.1 626.8L519.6 627L519.1 628.6L518.6 626.3L518.1 622.5L517.6 621.4L517.1 620.9L516.6 621.7L516.1 622.9L515.6 623L515.1 623.2L514.6 623.3L514.1 626.4L513.6 626.7L513.1 625.4L512.6 625.8L512.1 626.8L511.6 625.7L511.1 625.6L510.6 621.3L510.1 620.9L509.6 620.9L509.1 620.9L508.6 620.9L508.1 620.9L507.6 622L507.1 622.6L506.6 622.3L506.1 622.6L505.6 623.4L505.1 623.7L504.6 623.8L504.1 624L503.6 626.6L503.1 627L502.6 626.6L502.1 626.1L501.6 626.8L501.1 626.1L500.6 626.2L500.1 626.7L499.6 626.4L499.1 626.3L498.6 626.6L498.1 626.5L497.6 626.5L497.1 621.3L496.6 620.9L496.1 620.9L495.6 620.9L495.1 620.9L494.6 620.9L494.1 620.9L493.6 620.9L493.1 620.9L492.6 620.9L492.1 620.9L491.6 620.9L491.1 620.9L490.6 620.9L490.1 620.9L489.6 620.9L489.1 620.9L488.6 620.9L488.1 620.9L487.6 621L487.1 621.2L486.6 621.3L486.1 621.3L485.6 621.4L485.1 621.2L484.6 621.1L484.1 621.9L483.6 622.3L483.1 622.7L482.6 623.3L482.1 623.8L481.6 628.8L481.1 629.5L480.6 627.8L480.1 625.8L479.6 626L479.1 624.9L478.6 625L478.1 624.8L477.6 625.2L477.1 621.2L476.6 620.9L476.1 620.9L475.6 621L475.1 621.9L474.6 622.3L474.1 622.6L473.6 622.7L473.1 622.3L472.6 624.5L472.1 625.6L471.6 624.5L471.1 624.9L470.6 625.1L470.1 624.1L469.6 623.8L469.1 621L468.6 620.9L468.1 620.9L467.6 621.5L467.1 622.7L466.6 623L466.1 623L465.6 624.2L465.1 625.2L464.6 625.4L464.1 625.2L463.6 626.1L463.1 625.5L462.6 621.1L462.1 620.9L461.6 620.9L461.1 620.9L460.6 622.6L460.1 622.7L459.6 623.4L459.1 623.6L458.6 625.8L458.1 626.5L457.6 626L457.1 628L456.6 629L456.1 625.7L455.6 622.8L455.1 621.2L454.6 620.9L454.1 620.9L453.6 620.9L453.1 621.4L452.6 622.1L452.1 622.5L451.6 622.9L451.1 623.3L450.6 623.7L450.1 623.7L449.6 624.4L449.1 626.5L448.6 626.6L448.1 627.1L447.6 626.5L447.1 626.1L446.6 626.9L446.1 626L445.6 626.8L445.1 627.2L444.6 625.4L444.1 629.1L443.6 628.8Z" fill="#387ac8"/>
<path d="M553.7 612.2L554.2 612.2L554.7 614.7L555.2 614L555.7 614.3L556.2 614.1L556.7 614.2L557.2 614.9L557.7 613.7L558.2 614.2L558.7 613.9L559.2 614.1L559.7 616.4L560.2 617.1L560.7 617.2L561.2 617.3L561.7 617.9L562.2 618.1L562.7 618.6L563.2 619.4L563.7 619.9L564.2 619.9L564.7 619.9L565.2 619.5L565.7 617.9L566.2 614.5L566.7 612L567.2 612L567.7 614.3L568.2 614.5L568.7 614.8L569.2 617.1L569.7 617.4L570.2 618.1L570.7 618.1L571.2 619.9L571.7 619.9L572.2 619.9L572.7 619.6L573.2 615L573.7 615L574.2 615.2L574.7 614.9L575.2 615.2L575.7 616.2L576.2 617.9L576.7 617.9L577.2 618.1L577.7 619.4L578.2 619.9L578.7 619.9L579.2 619.8L579.7 617L580.2 616.4L580.7 615.6L581.2 615.7L581.7 616.4L582.2 615.4L582.7 616.3L583.2 618.3L583.7 618.1L584.2 618.3L584.7 618.5L585.2 618.7L585.7 619.8L586.2 619.9L586.7 619.9L587.2 619.6L587.7 615.7L588.2 616L588.7 616L589.2 615.6L589.7 615L590.2 615.2L590.7 612.2L591.2 610.6L591.7 611.4L592.2 617.1L592.7 617.5L593.2 617.8L593.7 618.5L594.2 618.8L594.7 619.8L595.2 619.6L595.7 619.2L596.2 619.4L596.7 619.4L597.2 619.6L597.7 619.8L598.2 619.9L598.7 619.9L599.2 619.9L599.7 619.9L600.2 619.9L600.7 619.9L601.2 619.9L601.7 619.9L602.2 619.9L602.7 619.9L603.2 619.9L603.7 619.9L604.2 619.9L604.7 619.9L605.2 619.9L605.7 619.9L606.2 619.9L606.7 619.9L607.2 619.5L607.7 614.5L608.2 613.6L608.7 613.7L609.2 614.5L609.7 614.3L610.2 614.1L610.7 614.3L611.2 614L611.7 613.7L612.2 614.2L612.7 614.3L613.2 613.3L613.7 614.4L614.2 616.7L614.7 616.8L615.2 617.1L615.7 617.5L616.2 618.1L616.7 618.2L617.2 618.3L617.7 618.7L618.2 619.9L618.7 619.9L619.2 619.9L619.7 619.9L620.2 619.9L620.7 619.5L621.2 614.8L621.7 615.3L622.2 614.4L622.7 615.2L623.2 615.2L623.7 614.6L624.2 614.3L624.7 617.4L625.2 617.4L625.7 617.5L626.2 617.9L626.7 619.1L627.2 619.9L627.7 619.5L628.2 618.2L628.7 613.7L629.2 612.2L629.7 613L630.2 614L630.7 614L631.2 613.8L631.7 614.6L632.2 614.4L632.7 614.6L633.2 613.7L633.7 617L634.2 616.8L634.7 617.2L635.2 617.8L635.7 617.9L636.2 618.3L636.7 619.1L637.2 619.9L637.7 619.3L638.2 619.2L638.7 619.3L639.2 619.4L639.7 619.5L640.2 619.6L640.7 619.7L641.2 619.9L641.7 619.9L642.2 619.9L642.7 619.9L643.2 619.9L643.7 619.9L644.2 619.9L644.7 619.9L645.2 619.9L645.7 619.9L646.2 619.9L646.7 619.9L647.2 619.9L647.7 619.9L648.2 619.9L648.7 619.9L649.2 619.9L649.7 619.9L650.2 619.9L650.7 619.9L651.2 619.9L651.7 619.9L652.2 619.9L652.7 619.9L653.2 619.9L653.7 619.9L654.2 619.9L654.7 619.9L655.2 619.9L655.7 619.9L656.2 619.9L656.7 619.9L657.2 619.9L657.7 619.9L658.2 619.9L658.7 619.9L659.2 619.9L659.7 619.9L660.2 619.9L660.7 619.9L661.2 619.9L661.7 619.9L662.2 619.9L662.7 619.9L663.2 619.9L663.7 619.9L663.7 620.9L663.2 620.9L662.7 620.9L662.2 620.9L661.7 620.9L661.2 620.9L660.7 620.9L660.2 620.9L659.7 620.9L659.2 620.9L658.7 620.9L658.2 620.9L657.7 620.9L657.2 620.9L656.7 620.9L656.2 620.9L655.7 620.9L655.2 620.9L654.7 620.9L654.2 620.9L653.7 620.9L653.2 620.9L652.7 620.9L652.2 620.9L651.7 620.9L651.2 620.9L650.7 620.9L650.2 620.9L649.7 620.9L649.2 620.9L648.7 620.9L648.2 620.9L647.7 620.9L647.2 620.9L646.7 620.9L646.2 620.9L645.7 620.9L645.2 620.9L644.7 620.9L644.2 620.9L643.7 620.9L643.2 620.9L642.7 620.9L642.2 620.9L641.7 620.9L641.2 620.9L640.7 621L640.2 621.2L639.7 621.3L639.2 621.3L638.7 621.6L638.2 621.6L637.7 621.4L637.2 620.9L636.7 621.8L636.2 622.5L635.7 623.1L635.2 623.1L634.7 623.4L634.2 623.7L633.7 623.6L633.2 626.5L632.7 625.9L632.2 625.8L631.7 626.3L631.2 626.8L630.7 626.7L630.2 626.8L629.7 627L629.2 628.6L628.7 626.3L628.2 622.5L627.7 621.4L627.2 620.9L626.7 621.7L626.2 622.9L625.7 623L625.2 623.2L624.7 623.3L624.2 626.4L623.7 626.7L623.2 625.4L622.7 625.8L622.2 626.8L621.7 625.7L621.2 625.6L620.7 621.3L620.2 620.9L619.7 620.9L619.2 620.9L618.7 620.9L618.2 620.9L617.7 622L617.2 622.6L616.7 622.3L616.2 622.6L615.7 623.4L615.2 623.7L614.7 623.8L614.2 624L613.7 626.6L613.2 627L612.7 626.6L612.2 626.1L611.7 626.8L611.2 626.1L610.7 626.2L610.2 626.7L609.7 626.4L609.2 626.3L608.7 626.6L608.2 626.5L607.7 626.5L607.2 621.3L606.7 620.9L606.2 620.9L605.7 620.9L605.2 620.9L604.7 620.9L604.2 620.9L603.7 620.9L603.2 620.9L602.7 620.9L602.2 620.9L601.7 620.9L601.2 620.9L600.7 620.9L600.2 620.9L599.7 620.9L599.2 620.9L598.7 620.9L598.2 620.9L597.7 621L597.2 621.2L596.7 621.3L596.2 621.3L595.7 621.4L595.2 621.2L594.7 621.1L594.2 621.9L593.7 622.3L593.2 622.7L592.7 623.3L592.2 623.8L591.7 628.8L591.2 629.5L590.7 627.8L590.2 625.8L589.7 626L589.2 624.9L588.7 625L588.2 624.8L587.7 625.2L587.2 621.2L586.7 620.9L586.2 620.9L585.7 621L585.2 621.9L584.7 622.3L584.2 622.6L583.7 622.7L583.2 622.3L582.7 624.5L582.2 625.6L581.7 624.5L581.2 624.9L580.7 625.1L580.2 624.1L579.7 623.8L579.2 621L578.7 620.9L578.2 620.9L577.7 621.5L577.2 622.7L576.7 623L576.2 623L575.7 624.2L575.2 625.2L574.7 625.4L574.2 625.2L573.7 626.1L573.2 625.5L572.7 621.1L572.2 620.9L571.7 620.9L571.2 620.9L570.7 622.6L570.2 622.7L569.7 623.4L569.2 623.6L568.7 625.8L568.2 626.5L567.7 626L567.2 628L566.7 629L566.2 625.7L565.7 622.8L565.2 621.2L564.7 620.9L564.2 620.9L563.7 620.9L563.2 621.4L562.7 622.1L562.2 622.5L561.7 622.9L561.2 623.3L560.7 623.7L560.2 623.7L559.7 624.4L559.2 626.5L558.7 626.6L558.2 627.1L557.7 626.5L557.2 626.1L556.7 626.9L556.2 626L555.7 626.8L555.2 627.2L554.7 625.4L554.2 629.1L553.7 628.8Z" fill="#387ac8"/>
<path d="M663.8 612.2L664.3 612.2L664.8 614.7L665.3 614L665.8 614.3L666.3 614.1L666.8 614.2L667.3 614.9L667.8 613.7L668.3 614.2L668.8 613.9L669.3 614.1L669.8 616.4L670.3 617.1L670.8 617.2L671.3 617.3L671.8 617.9L672.3 618.1L672.8 618.6L673.3 619.4L673.8 619.9L674.3 619.9L674.8 619.9L675.3 619.5L675.8 617.9L676.3 614.5L676.8 612L677.3 612L677.8 614.3L678.3 614.5L678.8 614.8L679.3 617.1L679.8 617.4L680.3 618.1L680.8 618.1L681.3 619.9L681.8 619.9L682.3 619.9L682.8 619.6L683.3 615L683.8 615L684.3 615.2L684.8 614.9L685.3 615.2L685.8 616.2L686.3 617.9L686.8 617.9L687.3 618.1L687.8 619.4L688.3 619.9L688.8 619.9L689.3 619.8L689.8 617L690.3 616.4L690.8 615.6L691.3 615.7L691.8 616.4L692.3 615.4L692.8 616.3L693.3 618.3L693.8 618.1L694.3 618.3L694.8 618.5L695.3 618.7L695.8 619.8L696.3 619.9L696.8 619.9L697.3 619.6L697.8 615.7L698.3 616L698.8 616L699.3 615.6L699.8 615L700.3 615.2L700.8 612.2L701.3 610.6L701.8 611.4L702.3 617.1L702.8 617.5L703.3 617.8L703.8 618.5L704.3 618.8L704.8 619.8L705.3 619.6L705.8 619.2L706.3 619.4L706.8 619.4L707.3 619.6L707.8 619.8L708.3 619.9L708.8 619.9L709.3 619.9L709.8 619.9L710.3 619.9L710.8 619.9L711.3 619.9L711.8 619.9L712.3 619.9L712.8 619.9L713.3 619.9L713.8 619.9L714.3 619.9L714.8 619.9L715.3 619.9L715.8 619.9L716.3 619.9L716.8 619.9L717.3 619.5L717.8 614.5L718.3 613.6L718.8 613.7L719.3 614.5L719.8 614.3L720.3 614.1L720.8 614.3L721.3 614L721.8 613.7L722.3 614.2L722.8 614.3L723.3 613.3L723.8 614.4L724.3 616.7L724.8 616.8L725.3 617.1L725.8 617.5L726.3 618.1L726.8 618.2L727.3 618.3L727.8 618.7L728.3 619.9L728.8 619.9L729.3 619.9L729.8 619.9L730.3 619.9L730.8 619.5L731.3 614.8L731.8 615.3L732.3 614.4L732.8 615.2L733.3 615.2L733.8 614.6L734.3 614.3L734.8 617.4L735.3 617.4L735.8 617.5L736.3 617.9L736.8 619.1L737.3 619.9L737.8 619.5L738.3 618.2L738.8 613.7L739.3 612.2L739.8 613L740.3 614L740.8 614L741.3 613.8L741.8 614.6L742.3 614.4L742.8 614.6L743.3 613.7L743.8 617L744.3 616.8L744.8 617.2L745.3 617.8L745.8 617.9L746.3 618.3L746.8 619.1L747.3 619.9L747.8 619.3L748.3 619.2L748.8 619.3L749.3 619.4L749.8 619.5L750.3 619.6L750.8 619.7L751.3 619.9L751.8 619.9L752.3 619.9L752.8 619.9L753.3 619.9L753.8 619.9L754.3 619.9L754.8 619.9L755.3 619.9L755.8 619.9L756.3 619.9L756.8 619.9L757.3 619.9L757.8 619.9L758.3 619.9L758.8 619.9L759.3 619.9L759.8 619.9L760.3 619.9L760.8 619.9L761.3 619.9L761.8 619.9L762.3 619.9L762.8 619.9L763.3 619.9L763.8 619.9L764.3 619.9L764.8 619.9L765.3 619.9L765.8 619.9L766.3 619.9L766.8 619.9L767.3 619.9L767.8 619.9L768.3 619.9L768.8 619.9L769.3 619.9L769.8 619.9L770.3 619.9L770.8 619.9L771.3 619.9L771.8 619.9L772.3 619.9L772.8 619.9L773.3 619.9L773.8 619.9L773.8 620.9L773.3 620.9L772.8 620.9L772.3 620.9L771.8 620.9L771.3 620.9L770.8 620.9L770.3 620.9L769.8 620.9L769.3 620.9L768.8 620.9L768.3 620.9L767.8 620.9L767.3 620.9L766.8 620.9L766.3 620.9L765.8 620.9L765.3 620.9L764.8 620.9L764.3 620.9L763.8 620.9L763.3 620.9L762.8 620.9L762.3 620.9L761.8 620.9L761.3 620.9L760.8 620.9L760.3 620.9L759.8 620.9L759.3 620.9L758.8 620.9L758.3 620.9L757.8 620.9L757.3 620.9L756.8 620.9L756.3 620.9L755.8 620.9L755.3 620.9L754.8 620.9L754.3 620.9L753.8 620.9L753.3 620.9L752.8 620.9L752.3 620.9L751.8 620.9L751.3 620.9L750.8 621L750.3 621.2L749.8 621.3L749.3 621.3L748.8 621.6L748.3 621.6L747.8 621.4L747.3 620.9L746.8 621.8L746.3 622.5L745.8 623.1L745.3 623.1L744.8 623.4L744.3 623.7L743.8 623.6L743.3 626.5L742.8 625.9L742.3 625.8L741.8 626.3L741.3 626.8L740.8 626.7L740.3 626.8L739.8 627L739.3 628.6L738.8 626.3L738.3 622.5L737.8 621.4L737.3 620.9L736.8 621.7L736.3 622.9L735.8 623L735.3 623.2L734.8 623.3L734.3 626.4L733.8 626.7L733.3 625.4L732.8 625.8L732.3 626.8L731.8 625.7L731.3 625.6L730.8 621.3L730.3 620.9L729.8 620.9L729.3 620.9L728.8 620.9L728.3 620.9L727.8 622L727.3 622.6L726.8 622.3L726.3 622.6L725.8 623.4L725.3 623.7L724.8 623.8L724.3 624L723.8 626.6L723.3 627L722.8 626.6L722.3 626.1L721.8 626.8L721.3 626.1L720.8 626.2L720.3 626.7L719.8 626.4L719.3 626.3L718.8 626.6L718.3 626.5L717.8 626.5L717.3 621.3L716.8 620.9L716.3 620.9L715.8 620.9L715.3 620.9L714.8 620.9L714.3 620.9L713.8 620.9L713.3 620.9L712.8 620.9L712.3 620.9L711.8 620.9L711.3 620.9L710.8 620.9L710.3 620.9L709.8 620.9L709.3 620.9L708.8 620.9L708.3 620.9L707.8 621L707.3 621.2L706.8 621.3L706.3 621.3L705.8 621.4L705.3 621.2L704.8 621.1L704.3 621.9L703.8 622.3L703.3 622.7L702.8 623.3L702.3 623.8L701.8 628.8L701.3 629.5L700.8 627.8L700.3 625.8L699.8 626L699.3 624.9L698.8 625L698.3 624.8L697.8 625.2L697.3 621.2L696.8 620.9L696.3 620.9L695.8 621L695.3 621.9L694.8 622.3L694.3 622.6L693.8 622.7L693.3 622.3L692.8 624.5L692.3 625.6L691.8 624.5L691.3 624.9L690.8 625.1L690.3 624.1L689.8 623.8L689.3 621L688.8 620.9L688.3 620.9L687.8 621.5L687.3 622.7L686.8 623L686.3 623L685.8 624.2L685.3 625.2L684.8 625.4L684.3 625.2L683.8 626.1L683.3 625.5L682.8 621.1L682.3 620.9L681.8 620.9L681.3 620.9L680.8 622.6L680.3 622.7L679.8 623.4L679.3 623.6L678.8 625.8L678.3 626.5L677.8 626L677.3 628L676.8 629L676.3 625.7L675.8 622.8L675.3 621.2L674.8 620.9L674.3 620.9L673.8 620.9L673.3 621.4L672.8 622.1L672.3 622.5L671.8 622.9L671.3 623.3L670.8 623.7L670.3 623.7L669.8 624.4L669.3 626.5L668.8 626.6L668.3 627.1L667.8 626.5L667.3 626.1L666.8 626.9L666.3 626L665.8 626.8L665.3 627.2L664.8 625.4L664.3 629.1L663.8 628.8Z" fill="#387ac8"/>
<path d="M773.9 612.2L774.4 612.2L774.9 614.7L775.4 614L775.9 614.3L776.4 614.1L776.9 614.2L777.4 614.9L777.9 613.7L778.4 614.2L778.9 613.9L779.4 614.1L779.9 616.4L780.4 617.1L780.9 617.2L781.4 617.3L781.9 617.9L782.4 618.1L782.9 618.6L783.4 619.4L783.9 619.9L784.4 619.9L784.9 619.9L785.4 619.5L785.9 617.9L786.4 614.5L786.9 612L787.4 612L787.9 614.3L788.4 614.5L788.9 614.8L789.4 617.1L789.9 617.4L790.4 618.1L790.9 618.1L791.4 619.9L791.9 619.9L792.4 619.9L792.9 619.6L793.4 615L793.9 615L794.4 615.2L794.9 614.9L795.4 615.2L795.9 616.2L796.4 617.9L796.9 617.9L797.4 618.1L797.9 619.4L798.4 619.9L798.9 619.9L799.4 619.8L799.9 617L800.4 616.4L800.9 615.6L801.4 615.7L801.9 616.4L802.4 615.4L802.9 616.3L803.4 618.3L803.9 618.1L804.4 618.3L804.9 618.5L805.4 618.7L805.9 619.8L806.4 619.9L806.9 619.9L807.4 619.6L807.9 615.7L808.4 616L808.9 616L809.4 615.6L809.9 615L810.4 615.2L810.9 612.2L811.4 610.6L811.9 611.4L812.4 617.1L812.9 617.5L813.4 617.8L813.9 618.5L814.4 618.8L814.9 619.8L815.4 619.6L815.9 619.2L816.4 619.4L816.9 619.4L817.4 619.6L817.9 619.8L818.4 619.9L818.9 619.9L819.4 619.9L819.9 619.9L820.4 619.9L820.9 619.9L821.4 619.9L821.9 619.9L822.4 619.9L822.9 619.9L823.4 619.9L823.9 619.9L824.4 619.9L824.9 619.9L825.4 619.9L825.9 619.9L826.4 619.9L826.9 619.9L827.4 619.5L827.9 614.5L828.4 613.6L828.9 613.7L829.4 614.5L829.9 614.3L830.4 614.1L830.9 614.3L831.4 614L831.9 613.7L832.4 614.2L832.9 614.3L833.4 613.3L833.9 614.4L834.4 616.7L834.9 616.8L835.4 617.1L835.9 617.5L836.4 618.1L836.9 618.2L837.4 618.3L837.9 618.7L838.4 619.9L838.9 619.9L839.4 619.9L839.9 619.9L840.4 619.9L840.9 619.5L841.4 614.8L841.9 615.3L842.4 614.4L842.9 615.2L843.4 615.2L843.9 614.6L844.4 614.3L844.9 617.4L845.4 617.4L845.9 617.5L846.4 617.9L846.9 619.1L847.4 619.9L847.9 619.5L848.4 618.2L848.9 613.7L849.4 612.2L849.9 613L850.4 614L850.9 614L851.4 613.8L851.9 614.6L852.4 614.4L852.9 614.6L853.4 613.7L853.9 617L854.4 616.8L854.9 617.2L855.4 617.8L855.9 617.9L856.4 618.3L856.9 619.1L857.4 619.9L857.9 619.3L858.4 619.2L858.9 619.3L859.4 619.4L859.9 619.5L860.4 619.6L860.9 619.7L861.4 619.9L861.9 619.9L862.4 619.9L862.9 619.9L863.4 619.9L863.9 619.9L864.4 619.9L864.9 619.9L865.4 619.9L865.9 619.9L866.4 619.9L866.9 619.9L867.4 619.9L867.9 619.9L868.4 619.9L868.9 619.9L869.4 619.9L869.9 619.9L870.4 619.9L870.9 619.9L871.4 619.9L871.9 619.9L872.4 619.9L872.9 619.9L873.4 619.9L873.9 619.9L874.4 619.9L874.9 619.9L875.4 619.9L875.9 619.9L876.4 619.9L876.9 619.9L877.4 619.9L877.9 619.9L878.4 619.9L878.9 619.9L879.4 619.9L879.9 619.9L880.4 619.9L880.9 619.9L881.4 619.9L881.9 619.9L882.4 619.9L882.9 619.9L883.4 619.9L883.9 619.9L883.9 620.9L883.4 620.9L882.9 620.9L882.4 620.9L881.9 620.9L881.4 620.9L880.9 620.9L880.4 620.9L879.9 620.9L879.4 620.9L878.9 620.9L878.4 620.9L877.9 620.9L877.4 620.9L876.9 620.9L876.4 620.9L875.9 620.9L875.4 620.9L874.9 620.9L874.4 620.9L873.9 620.9L873.4 620.9L872.9 620.9L872.4 620.9L871.9 620.9L871.4 620.9L870.9 620.9L870.4 620.9L869.9 620.9L869.4 620.9L868.9 620.9L868.4 620.9L867.9 620.9L867.4 620.9L866.9 620.9L866.4 620.9L865.9 620.9L865.4 620.9L864.9 620.9L864.4 620.9L863.9 620.9L863.4 620.9L862.9 620.9L862.4 620.9L861.9 620.9L861.4 620.9L860.9 621L860.4 621.2L859.9 621.3L859.4 621.3L858.9 621.6L858.4 621.6L857.9 621.4L857.4 620.9L856.9 621.8L856.4 622.5L855.9 623.1L855.4 623.1L854.9 623.4L854.4 623.7L853.9 623.6L853.4 626.5L852.9 625.9L852.4 625.8L851.9 626.3L851.4 626.8L850.9 626.7L850.4 626.8L849.9 627L849.4 628.6L848.9 626.3L848.4 622.5L847.9 621.4L847.4 620.9L846.9 621.7L846.4 622.9L845.9 623L845.4 623.2L844.9 623.3L844.4 626.4L843.9 626.7L843.4 625.4L842.9 625.8L842.4 626.8L841.9 625.7L841.4 625.6L840.9 621.3L840.4 620.9L839.9 620.9L839.4 620.9L838.9 620.9L838.4 620.9L837.9 622L837.4 622.6L836.9 622.3L836.4 622.6L835.9 623.4L835.4 623.7L834.9 623.8L834.4 624L833.9 626.6L833.4 627L832.9 626.6L832.4 626.1L831.9 626.8L831.4 626.1L830.9 626.2L830.4 626.7L829.9 626.4L829.4 626.3L828.9 626.6L828.4 626.5L827.9 626.5L827.4 621.3L826.9 620.9L826.4 620.9L825.9 620.9L825.4 620.9L824.9 620.9L824.4 620.9L823.9 620.9L823.4 620.9L822.9 620.9L822.4 620.9L821.9 620.9L821.4 620.9L820.9 620.9L820.4 620.9L819.9 620.9L819.4 620.9L818.9 620.9L818.4 620.9L817.9 621L817.4 621.2L816.9 621.3L816.4 621.3L815.9 621.4L815.4 621.2L814.9 621.1L814.4 621.9L813.9 622.3L813.4 622.7L812.9 623.3L812.4 623.8L811.9 628.8L811.4 629.5L810.9 627.8L810.4 625.8L809.9 626L809.4 624.9L808.9 625L808.4 624.8L807.9 625.2L807.4 621.2L806.9 620.9L806.4 620.9L805.9 621L805.4 621.9L804.9 622.3L804.4 622.6L803.9 622.7L803.4 622.3L802.9 624.5L802.4 625.6L801.9 624.5L801.4 624.9L800.9 625.1L800.4 624.1L799.9 623.8L799.4 621L798.9 620.9L798.4 620.9L797.9 621.5L797.4 622.7L796.9 623L796.4 623L795.9 624.2L795.4 625.2L794.9 625.4L794.4 625.2L793.9 626.1L793.4 625.5L792.9 621.1L792.4 620.9L791.9 620.9L791.4 620.9L790.9 622.6L790.4 622.7L789.9 623.4L789.4 623.6L788.9 625.8L788.4 626.5L787.9 626L787.4 628L786.9 629L786.4 625.7L785.9 622.8L785.4 621.2L784.9 620.9L784.4 620.9L783.9 620.9L783.4 621.4L782.9 622.1L782.4 622.5L781.9 622.9L781.4 623.3L780.9 623.7L780.4 623.7L779.9 624.4L779.4 626.5L778.9 626.6L778.4 627.1L777.9 626.5L777.4 626.1L776.9 626.9L776.4 626L775.9 626.8L775.4 627.2L774.9 625.4L774.4 629.1L773.9 628.8Z" fill="#387ac8"/>
<path d="M884 612.2L884.5 612.2L885 614.7L885.5 614L886 614.3L886.5 614.1L887 614.2L887.5 614.9L888 613.7L888.5 614.2L889 613.9L889.5 614.1L890 616.4L890.5 617.1L891 617.2L891.5 617.3L892 617.9L892.5 618.1L893 618.6L893.5 619.4L894 619.9L894.5 619.9L895 619.9L895.5 619.5L896 617.9L896.5 614.5L897 612L897.5 612L898 614.3L898.5 614.5L899 614.8L899.5 617.1L900 617.4L900.5 618.1L901 618.1L901.5 619.9L902 619.9L902.5 619.9L903 619.6L903.5 615L904 615L904.5 615.2L905 614.9L905.5 615.2L906 616.2L906.5 617.9L907 617.9L907.5 618.1L908 619.4L908.5 619.9L909 619.9L909.5 619.8L910 617L910.5 616.4L911 615.6L911.5 615.7L912 616.4L912.5 615.4L913 616.3L913.5 618.3L914 618.1L914.5 618.3L915 618.5L915.5 618.7L916 619.8L916.5 619.9L917 619.9L917.5 619.6L918 615.7L918.5 616L919 616L919.5 615.6L920 615L920.5 615.2L921 612.2L921.5 610.6L922 611.4L922.5 617.1L923 617.5L923.5 617.8L924 618.5L924.5 618.8L925 619.8L925.5 619.6L926 619.2L926.5 619.4L927 619.4L927.5 619.6L928 619.8L928.5 619.9L929 619.9L929.5 619.9L930 619.9L930.5 619.9L931 619.9L931.5 619.9L932 619.9L932.5 619.9L933 619.9L933.5 619.9L934 619.9L934.5 619.9L935 619.9L935.5 619.9L936 619.9L936.5 619.9L937 619.9L937.5 619.5L938 614.5L938.5 613.6L939 613.7L939.5 614.5L940 614.3L940.5 614.1L941 614.3L941.5 614L942 613.7L942.5 614.2L943 614.3L943.5 613.3L944 614.4L944.5 616.7L945 616.8L945.5 617.1L946 617.5L946.5 618.1L947 618.2L947.5 618.3L948 618.7L948.5 619.9L949 619.9L949.5 619.9L950 619.9L950.5 619.9L951 619.5L951.5 614.8L952 615.3L952.5 614.4L953 615.2L953.5 615.2L954 614.6L954.5 614.3L955 617.4L955.5 617.4L956 617.5L956.5 617.9L957 619.1L957.5 619.9L958 619.5L958.5 618.2L959 613.7L959.5 612.2L960 613L960.5 614L961 614L961.5 613.8L962 614.6L962.5 614.4L963 614.6L963.5 613.7L964 617L964.5 616.8L965 617.2L965.5 617.8L966 617.9L966.5 618.3L967 619.1L967.5 619.9L968 619.3L968.5 619.2L969 619.3L969.5 619.4L970 619.5L970.5 619.6L971 619.7L971.5 619.9L972 619.9L972.5 619.9L973 619.9L973.5 619.9L974 619.9L974.5 619.9L975 619.9L975.5 619.9L976 619.9L976.5 619.9L977 619.9L977.5 619.9L978 619.9L978.5 619.9L979 619.9L979.5 619.9L980 619.9L980.5 619.9L981 619.9L981.5 619.9L982 619.9L982.5 619.9L983 619.9L983.5 619.9L984 619.9L984.5 619.9L985 619.9L985.5 619.9L986 619.9L986.5 619.9L987 619.9L987.5 619.9L988 619.9L988.5 619.9L989 619.9L989.5 619.9L990 619.9L990.5 619.9L991 619.9L991.5 619.9L992 619.9L992.5 619.9L993 619.9L993.5 619.9L994 619.9L994 620.9L993.5 620.9L993 620.9L992.5 620.9L992 620.9L991.5 620.9L991 620.9L990.5 620.9L990 620.9L989.5 620.9L989 620.9L988.5 620.9L988 620.9L987.5 620.9L987 620.9L986.5 620.9L986 620.9L985.5 620.9L985 620.9L984.5 620.9L984 620.9L983.5 620.9L983 620.9L982.5 620.9L982 620.9L981.5 620.9L981 620.9L980.5 620.9L980 620.9L979.5 620.9L979 620.9L978.5 620.9L978 620.9L977.5 620.9L977 620.9L976.5 620.9L976 620.9L975.5 620.9L975 620.9L974.5 620.9L974 620.9L973.5 620.9L973 620.9L972.5 620.9L972 620.9L971.5 620.9L971 621L970.5 621.2L970 621.3L969.5 621.3L969 621.6L968.5 621.6L968 621.4L967.5 620.9L967 621.8L966.5 622.5L966 623.1L965.5 623.1L965 623.4L964.5 623.7L964 623.6L963.5 626.5L963 625.9L962.5 625.8L962 626.3L961.5 626.8L961 626.7L960.5 626.8L960 627L959.5 628.6L959 626.3L958.5 622.5L958 621.4L957.5 620.9L957 621.7L956.5 622.9L956 623L955.5 623.2L955 623.3L954.5 626.4L954 626.7L953.5 625.4L953 625.8L952.5 626.8L952 625.7L951.5 625.6L951 621.3L950.5 620.9L950 620.9L949.5 620.9L949 620.9L948.5 620.9L948 622L947.5 622.6L947 622.3L946.5 622.6L946 623.4L945.5 623.7L945 623.8L944.5 624L944 626.6L943.5 627L943 626.6L942.5 626.1L942 626.8L941.5 626.1L941 626.2L940.5 626.7L940 626.4L939.5 626.3L939 626.6L938.5 626.5L938 626.5L937.5 621.3L937 620.9L936.5 620.9L936 620.9L935.5 620.9L935 620.9L934.5 620.9L934 620.9L933.5 620.9L933 620.9L932.5 620.9L932 620.9L931.5 620.9L931 620.9L930.5 620.9L930 620.9L929.5 620.9L929 620.9L928.5 620.9L928 621L927.5 621.2L927 621.3L926.5 621.3L926 621.4L925.5 621.2L925 621.1L924.5 621.9L924 622.3L923.5 622.7L923 623.3L922.5 623.8L922 628.8L921.5 629.5L921 627.8L920.5 625.8L920 626L919.5 624.9L919 625L918.5 624.8L918 625.2L917.5 621.2L917 620.9L916.5 620.9L916 621L915.5 621.9L915 622.3L914.5 622.6L914 622.7L913.5 622.3L913 624.5L912.5 625.6L912 624.5L911.5 624.9L911 625.1L910.5 624.1L910 623.8L909.5 621L909 620.9L908.5 620.9L908 621.5L907.5 622.7L907 623L906.5 623L906 624.2L905.5 625.2L905 625.4L904.5 625.2L904 626.1L903.5 625.5L903 621.1L902.5 620.9L902 620.9L901.5 620.9L901 622.6L900.5 622.7L900 623.4L899.5 623.6L899 625.8L898.5 626.5L898 626L897.5 628L897 629L896.5 625.7L896 622.8L895.5 621.2L895 620.9L894.5 620.9L894 620.9L893.5 621.4L893 622.1L892.5 622.5L892 622.9L891.5 623.3L891 623.7L890.5 623.7L890 624.4L889.5 626.5L889 626.6L888.5 627.1L888 626.5L887.5 626.1L887 626.9L886.5 626L886 626.8L885.5 627.2L885 625.4L884.5 629.1L884 628.8Z" fill="#387ac8"/>
<path d="M994.1 612.2L994.6 612.2L995.1 614.7L995.6 614L996.1 614.3L996.6 614.1L997.1 614.2L997.6 614.9L998.1 613.7L998.6 614.2L999.1 613.9L999.6 614.1L1000.1 616.4L1000.6 617.1L1001.1 617.2L1001.6 617.3L1002.1 617.9L1002.6 618.1L1003.1 618.6L1003.6 619.4L1004.1 619.9L1004.6 619.9L1005.1 619.9L1005.6 619.5L1006.1 617.9L1006.6 614.5L1007.1 612L1007.6 612L1008.1 614.3L1008.6 614.5L1009.1 614.8L1009.6 617.1L1010.1 617.4L1010.6 618.1L1011.1 618.1L1011.6 619.9L1012.1 619.9L1012.1 620.9L1011.6 620.9L1011.1 622.6L1010.6 622.7L1010.1 623.4L1009.6 623.6L1009.1 625.8L1008.6 626.5L1008.1 626L1007.6 628L1007.1 629L1006.6 625.7L1006.1 622.8L1005.6 621.2L1005.1 620.9L1004.6 620.9L1004.1 620.9L1003.6 621.4L1003.1 622.1L1002.6 622.5L1002.1 622.9L1001.6 623.3L1001.1 623.7L1000.6 623.7L1000.1 624.4L999.6 626.5L999.1 626.6L998.6 627.1L998.1 626.5L997.6 626.1L997.1 626.9L996.6 626L996.1 626.8L995.6 627.2L995.1 625.4L994.6 629.1L994.1 628.8Z" fill="#387ac8"/>
<path d="M334.1 675.3L334.6 675.1L335.1 674.7L335.6 674.3L336.1 675.1L336.6 675.2L337.1 675L337.6 674.2L338.1 675.2L338.6 674.3L339.1 674.4L339.6 675.2L340.1 674.6L340.6 674.8L341.1 674.8L341.6 674L342.1 675.3L342.6 675.4L343.1 674.1L343.6 674.9L344.1 675.2L344.6 675L345.1 675L345.6 674.1L346.1 675.2L346.6 675.2L347.1 674.7L347.6 674.8L348.1 674.2L348.6 674.4L349.1 675.1L349.6 675.3L350.1 674.4L350.6 674.2L351.1 675.6L351.6 674.6L352.1 674.4L352.6 674.7L353.1 675.3L353.6 674.5L354.1 674.6L354.6 675.4L355.1 674.8L355.6 675.4L356.1 675.6L356.6 675.2L357.1 675.3L357.6 675.2L358.1 674.8L358.6 674.6L359.1 674.4L359.6 674.4L360.1 679.2L360.6 679.4L361.1 675.4L361.6 675.6L362.1 674.9L362.6 675.1L363.1 674.9L363.6 675.7L364.1 675.6L364.6 679.3L365.1 679.5L365.6 674.9L366.1 675.8L366.6 675.3L367.1 674.6L367.6 675L368.1 674.6L368.6 679.8L369.1 679.7L369.6 674.9L370.1 675.4L370.6 674.9L371.1 675.2L371.6 675.8L372.1 675.9L372.6 674.7L373.1 679.9L373.6 679.9L374.1 675.6L374.6 675.1L375.1 674.9L375.6 675.4L376.1 675.4L376.6 675L377.1 679.8L377.6 679.8L378.1 679.6L378.6 675.3L379.1 676.1L379.6 676L380.1 676L380.6 675.2L381.1 675.2L381.6 679.5L382.1 679.6L382.6 675.9L383.1 675.2L383.6 674.9L384.1 675.8L384.6 676.2L385.1 675.7L385.6 675.9L386.1 680L386.6 680.1L387.1 676.1L387.6 675.2L388.1 676.2L388.6 675.5L389.1 676.1L389.6 676.1L390.1 679.6L390.6 679.9L391.1 676.1L391.6 675.8L392.1 675.5L392.6 675.7L393.1 675.3L393.6 675.9L394.1 675.7L394.6 679.7L395.1 679.9L395.6 675.5L396.1 675.9L396.6 676.3L397.1 676.3L397.6 675.5L398.1 675.5L398.6 679.6L399.1 679.8L399.6 679.9L400.1 676.3L400.6 675.5L401.1 676.4L401.6 676L402.1 676.4L402.6 676.1L403.1 680L403.6 680L404.1 675.7L404.6 675.9L405.1 676.3L405.6 675.7L406.1 675.7L406.6 675.6L407.1 676.6L407.6 679.9L408.1 679.8L408.6 676.4L409.1 676.4L409.6 675.7L410.1 676.3L410.6 676.2L411.1 675.7L411.6 680.1L412.1 680.2L412.6 676.5L413.1 676.3L413.6 675.9L414.1 676.3L414.6 675.9L415.1 676.7L415.6 676.5L416.1 680L416.6 680.1L417.1 676.2L417.6 675.7L418.1 676.5L418.6 676.7L419.1 676.8L419.6 676.3L420.1 680.2L420.6 680.1L421.1 680.4L421.6 676.9L422.1 676.5L422.6 676L423.1 676.6L423.6 675.9L424.1 676.3L424.6 680.2L425.1 680L425.6 676.7L426.1 676.3L426.6 676L427.1 676.4L427.6 676.7L428.1 676.9L428.6 676.4L429.1 680.3L429.6 680.3L430.1 676.5L430.6 676L431.1 676.3L431.6 676.5L432.1 676.1L432.6 676.8L433.1 680.3L433.6 680.1L434.1 676.5L434.6 676.9L435.1 676.7L435.6 676.3L436.1 676.9L436.6 676.4L437.1 677.2L437.6 680L438.1 680.2L438.6 676.9L439.1 676.2L439.6 676.4L440.1 677.2L440.6 677L441.1 676.8L441.6 680L442.1 680.5L442.6 680.5L443.1 677L443.6 677.3L444.1 676.9L444.6 676.8L445.1 676.9L445.6 677.2L446.1 680.6L446.6 680.2L447.1 676.9L447.6 676.9L448.1 676.9L448.6 676.7L449.1 676.5L449.6 676.6L450.1 676.7L450.6 680.5L451.1 680.6L451.6 677.4L452.1 676.6L452.6 677.5L453.1 676.9L453.6 676.6L454.1 677.2L454.6 680.4L455.1 680.4L455.6 676.6L456.1 676.9L456.6 676.7L457.1 677.6L457.6 676.8L458.1 677.2L458.6 677.2L459.1 680L459.6 680L460.1 676.7L460.6 676.9L461.1 676.7L461.6 677.3L462.1 677.1L462.6 676.9L463.1 679.9L463.6 680.1L464.1 679.8L464.6 676.9L465.1 676.9L465.6 677.6L466.1 677.4L466.6 677.6L467.1 677.5L467.6 679.4L468.1 679.7L468.6 677.5L469.1 677.6L469.6 677.4L470.1 677.2L470.6 677.5L471.1 677.7L471.6 677.7L472.1 679.6L472.6 679.1L473.1 677.8L473.6 677.2L474.1 677.8L474.6 677.2L475.1 677.7L475.6 677.2L476.1 679.3L476.6 679.5L477.1 677.9L477.6 677.2L478.1 677.5L478.6 677.6L479.1 677.7L479.6 677.4L480.1 677.6L480.6 679.4L481.1 678.9L481.6 677.8L482.1 677.3L482.6 677.6L483.1 677.4L483.6 678L484.1 677.5L484.6 678.8L485.1 678.6L485.6 678.5L486.1 677.7L486.6 677.6L487.1 677.5L487.6 678L488.1 677.7L488.6 677.5L489.1 678.6L489.6 678.6L490.1 677.5L490.6 677.4L491.1 678L491.6 678.2L492.1 677.7L492.6 678.2L493.1 677.4L493.6 678.5L494.1 678.4L494.6 677.6L495.1 677.6L495.6 678.2L496.1 678L496.6 678.2L497.1 678L497.6 678.6L498.1 678L498.6 678.1L499.1 678.1L499.6 677.6L500.1 677.7L500.6 678.2L501.1 678L501.6 677.9L502.1 678.4L502.6 678.5L503.1 677.8L503.6 678.4L504.1 677.9L504.6 677.9L505.1 678L505.6 678.3L506.1 677.8L506.6 677.9L507.1 678.5L507.6 677.8L508.1 678.1L508.6 678.4L509.1 678.5L509.6 678.6L510.1 678L510.6 677.9L511.1 678.4L511.6 678.5L512.1 678.6L512.6 678.4L513.1 678.5L513.6 678.7L514.1 678.5L514.6 678.1L515.1 678.7L515.6 678.4L516.1 678.3L516.6 678.7L517.1 678.8L517.6 678.7L518.1 678.7L518.6 678L519.1 678.1L519.6 678.3L520.1 678.1L520.6 678.6L521.1 678.7L521.6 678.2L522.1 678.4L522.6 678.2L523.1 678.6L523.6 678.6L524.1 678.4L524.6 678.2L525.1 678.8L525.6 678.8L526.1 679L526.6 678.5L527.1 678.3L527.6 678.6L528.1 678.9L528.6 678.5L529.1 678.5L529.6 679L530.1 678.3L530.6 678.6L531.1 678.7L531.6 678.8L532.1 679L532.6 678.7L533.1 678.8L533.6 679L534.1 678.6L534.6 678.6L535.1 678.4L535.6 678.4L536.1 678.8L536.6 678.6L537.1 678.9L537.6 678.9L538.1 678.8L538.6 678.5L539.1 679.2L539.6 678.9L540.1 679L540.6 678.7L541.1 678.6L541.6 678.9L542.1 679.3L542.6 678.9L543.1 678.9L543.6 678.8L544.1 678.8L544.6 679L545.1 679L545.6 678.8L546.1 679.4L546.6 679.2L547.1 678.9L547.6 678.7L548.1 678.8L548.6 679.2L549.1 678.8L549.6 679.3L550.1 679.2L550.6 679.4L551.1 679.1L551.6 679.2L552.1 679L552.6 678.9L553.1 679.5L553.6 679.1L554.1 679.1L554.6 679.4L555.1 679.6L555.6 678.9L556.1 679.1L556.6 679.2L557.1 679.6L557.6 679L558.1 679.4L558.6 679.3L559.1 679.3L559.6 679.4L560.1 679.1L560.6 679.4L561.1 679.3L561.6 679.2L562.1 679.1L562.6 679.6L563.1 679.5L563.6 679.1L564.1 679.4L564.6 679.5L565.1 679.2L565.6 679.7L566.1 679.7L566.6 679.8L567.1 679.4L567.6 679.5L568.1 679.7L568.6 679.6L569.1 679.7L569.6 679.4L570.1 679.4L570.6 679.7L571.1 679.4L571.6 679.9L572.1 679.6L572.6 679.9L573.1 679.9L573.6 679.6L574.1 679.9L574.6 680L575.1 679.9L575.6 679.8L576.1 679.5L576.6 679.9L577.1 680L577.6 679.6L578.1 679.6L578.6 679.5L579.1 680.1L579.6 680L580.1 679.9L580.6 679.6L581.1 679.8L581.6 679.6L582.1 680L582.6 679.9L583.1 679.8L583.6 680.1L584.1 679.9L584.6 679.8L585.1 679.8L585.6 679.9L586.1 679.8L586.6 679.7L587.1 679.9L587.6 680.2L588.1 680.2L588.6 680.3L589.1 679.8L589.6 680L590.1 680L590.6 679.9L591.1 680L591.6 680.2L592.1 680.1L592.6 680.4L593.1 680.3L593.6 680.2L594.1 680L594.6 680.1L595.1 680.1L595.6 680.3L596.1 680.3L596.6 680.3L597.1 680.5L597.6 680.3L598.1 680.1L598.6 680.1L599.1 680.4L599.6 680.3L600.1 680.2L600.6 680.5L601.1 680.4L601.6 680.3L602.1 680.5L602.6 680.2L603.1 680.6L603.6 680.2L604.1 680.3L604.6 680.5L605.1 680.6L605.6 680.3L606.1 680.4L606.6 680.6L607.1 680.6L607.6 680.7L608.1 680.5L608.6 680.6L609.1 680.6L609.6 680.5L610.1 680.7L610.6 680.8L611.1 680.5L611.6 680.5L612.1 680.5L612.6 680.6L613.1 680.6L613.6 680.5L614.1 680.9L614.6 680.8L615.1 680.8L615.6 680.6L616.1 680.8L616.6 680.7L617.1 680.9L617.6 680.6L618.1 680.8L618.6 680.8L619.1 680.8L619.6 680.7L620.1 680.9L620.6 681L621.1 680.9L621.6 680.9L622.1 681.1L622.1 685.3L621.6 685.4L621.1 685.2L620.6 685.3L620.1 685.3L619.6 685.4L619.1 685.6L618.6 685.6L618.1 685.5L617.6 685.9L617.1 685.5L616.6 685.6L616.1 685.3L615.6 685.6L615.1 685.3L614.6 685.8L614.1 685.7L613.6 685.8L613.1 685.6L612.6 685.4L612.1 685.8L611.6 685.9L611.1 686L610.6 685.4L610.1 685.4L609.6 686L609.1 685.9L608.6 685.7L608.1 685.8L607.6 685.6L607.1 685.7L606.6 685.9L606.1 686.1L605.6 686.4L605.1 685.5L604.6 685.6L604.1 685.8L603.6 685.7L603.1 685.6L602.6 686L602.1 685.7L601.6 686.3L601.1 686L600.6 685.6L600.1 685.8L599.6 686.3L599.1 686.1L598.6 686.6L598.1 685.9L597.6 685.9L597.1 685.6L596.6 685.9L596.1 685.9L595.6 686.1L595.1 686.1L594.6 685.9L594.1 686.5L593.6 686.3L593.1 686.1L592.6 685.8L592.1 685.9L591.6 685.8L591.1 685.9L590.6 686L590.1 686.7L589.6 686.3L589.1 686.5L588.6 685.8L588.1 686.3L587.6 686.3L587.1 686.6L586.6 687L586.1 686.5L585.6 686.1L585.1 686.5L584.6 686.7L584.1 686.1L583.6 686L583.1 686.2L582.6 686.7L582.1 686.5L581.6 686.5L581.1 686.4L580.6 686.9L580.1 686.6L579.6 686.7L579.1 686.6L578.6 686.4L578.1 686.3L577.6 686.7L577.1 686.3L576.6 686.7L576.1 687L575.6 686.2L575.1 686.3L574.6 686.7L574.1 686.1L573.6 686.3L573.1 686.6L572.6 686.3L572.1 686.8L571.6 686.4L571.1 686.7L570.6 686.8L570.1 687.3L569.6 687.2L569.1 686.4L568.6 687L568.1 687L567.6 686.7L567.1 686.9L566.6 686.8L566.1 686.5L565.6 686.3L565.1 687.4L564.6 686.4L564.1 687.2L563.6 687.7L563.1 687.2L562.6 686.9L562.1 687.4L561.6 686.7L561.1 687.3L560.6 686.8L560.1 687L559.6 687.2L559.1 687.4L558.6 686.6L558.1 686.6L557.6 687.5L557.1 686.7L556.6 687.5L556.1 687.1L555.6 687.6L555.1 686.4L554.6 687.1L554.1 687L553.6 687L553.1 686.6L552.6 687.4L552.1 687.4L551.6 687.3L551.1 687.4L550.6 687.1L550.1 687.3L549.6 687.3L549.1 687.6L548.6 687.5L548.1 688L547.6 687.2L547.1 687.8L546.6 687L546.1 687.1L545.6 687.9L545.1 687.6L544.6 687.3L544.1 687.1L543.6 687.1L543.1 687.1L542.6 687.2L542.1 687.2L541.6 686.8L541.1 687.9L540.6 688.1L540.1 687.3L539.6 686.9L539.1 687.5L538.6 687.4L538.1 687.1L537.6 687L537.1 687.6L536.6 687.3L536.1 687.7L535.6 687.3L535.1 688.3L534.6 687.3L534.1 687.1L533.6 687.2L533.1 687.5L532.6 688L532.1 687.1L531.6 686.9L531.1 688L530.6 687.3L530.1 687.9L529.6 687L529.1 687.8L528.6 688.2L528.1 687.6L527.6 687.6L527.1 687.9L526.6 687.5L526.1 687L525.6 687.3L525.1 687.2L524.6 687.9L524.1 687.9L523.6 687.3L523.1 688L522.6 687.9L522.1 688L521.6 687.6L521.1 687.6L520.6 687.1L520.1 687.6L519.6 688.3L519.1 688.5L518.6 688.8L518.1 687.1L517.6 687.3L517.1 687.4L516.6 687.8L516.1 688.1L515.6 688.3L515.1 687.2L514.6 687.8L514.1 688L513.6 687.3L513.1 688.1L512.6 687.4L512.1 688.2L511.6 688L511.1 687.9L510.6 688.6L510.1 688.1L509.6 687.2L509.1 688.3L508.6 688.4L508.1 688.3L507.6 688.2L507.1 687.5L506.6 688.3L506.1 688.9L505.6 687.9L505.1 688.2L504.6 688.9L504.1 688.1L503.6 687.7L503.1 688.1L502.6 687.4L502.1 688.2L501.6 687.7L501.1 688.7L500.6 688L500.1 689L499.6 688.9L499.1 687.6L498.6 687.7L498.1 688.1L497.6 688L497.1 687.7L496.6 688.6L496.1 688.7L495.6 687.5L495.1 688.7L494.6 688.7L494.1 687.8L493.6 687L493.1 688.4L492.6 687.6L492.1 689L491.6 688.3L491.1 688.4L490.6 689L490.1 688.5L489.6 687.7L489.1 687.2L488.6 689.4L488.1 688.5L487.6 688.1L487.1 688.6L486.6 689.2L486.1 688.7L485.6 686.9L485.1 686.8L484.6 686.5L484.1 688.4L483.6 687.8L483.1 689.6L482.6 688.8L482.1 689.6L481.6 689.1L481.1 686.5L480.6 686.1L480.1 688L479.6 688.8L479.1 688.8L478.6 688.5L478.1 688.6L477.6 688.6L477.1 688L476.6 686L476.1 686.3L475.6 688.7L475.1 688.8L474.6 688.9L474.1 688.7L473.6 689.4L473.1 689.2L472.6 686.4L472.1 685.6L471.6 688.7L471.1 687.9L470.6 689.4L470.1 688.9L469.6 689L469.1 688.4L468.6 688.5L468.1 685.3L467.6 685.5L467.1 689.3L466.6 689.3L466.1 688.8L465.6 689.1L465.1 690.1L464.6 690.2L464.1 685.2L463.6 684.8L463.1 685.2L462.6 689L462.1 689.2L461.6 688.9L461.1 690.2L460.6 689.8L460.1 689.1L459.6 684.8L459.1 684.9L458.6 689.1L458.1 688.4L457.6 690.1L457.1 688.8L456.6 689.4L456.1 689.7L455.6 689.8L455.1 684.2L454.6 684.2L454.1 688.5L453.6 690.4L453.1 689.8L452.6 689L452.1 689.1L451.6 688.2L451.1 684.1L450.6 684.1L450.1 689.5L449.6 689L449.1 689.5L448.6 689.6L448.1 690.1L447.6 689.6L447.1 689.6L446.6 684.1L446.1 684L445.6 688.6L445.1 689.7L444.6 689.8L444.1 689.5L443.6 689.4L443.1 688.8L442.6 684.2L442.1 684L441.6 684.2L441.1 690.1L440.6 689.9L440.1 689.5L439.6 689.5L439.1 690.1L438.6 688.7L438.1 684.3L437.6 684.3L437.1 689.8L436.6 689.6L436.1 690L435.6 690L435.1 689.7L434.6 689.9L434.1 689.7L433.6 684.3L433.1 684.2L432.6 690L432.1 689.3L431.6 689.5L431.1 689.9L430.6 689.8L430.1 689.8L429.6 684.1L429.1 684.1L428.6 689.2L428.1 689.8L427.6 689.8L427.1 690.3L426.6 689.7L426.1 690L425.6 689.4L425.1 684.1L424.6 684.3L424.1 690.6L423.6 690.3L423.1 689.5L422.6 691L422.1 689.3L421.6 688.8L421.1 684.1L420.6 684.2L420.1 684.2L419.6 690.7L419.1 690L418.6 689.8L418.1 690.2L417.6 690.8L417.1 689.2L416.6 684.2L416.1 684.3L415.6 690L415.1 689.4L414.6 691.2L414.1 690.6L413.6 691.1L413.1 689.5L412.6 690.3L412.1 684.1L411.6 684.3L411.1 691.2L410.6 689.7L410.1 690.7L409.6 691.3L409.1 689.7L408.6 689.1L408.1 684.3L407.6 684.2L407.1 690.3L406.6 690.9L406.1 690.1L405.6 690.3L405.1 690.7L404.6 689.4L404.1 690.7L403.6 684.3L403.1 684.1L402.6 689.5L402.1 690L401.6 690.7L401.1 690.6L400.6 690.1L400.1 689.3L399.6 684.3L399.1 684.2L398.6 684.3L398.1 690.6L397.6 690.1L397.1 690.6L396.6 689.7L396.1 689.5L395.6 691.4L395.1 684.4L394.6 684.3L394.1 689.6L393.6 690.7L393.1 690.1L392.6 691L392.1 689.9L391.6 691L391.1 690.2L390.6 684.2L390.1 684.3L389.6 689.4L389.1 689.8L388.6 689.8L388.1 690L387.6 691.8L387.1 690.7L386.6 684.2L386.1 684.4L385.6 689.9L385.1 690.7L384.6 690.5L384.1 690.9L383.6 690.8L383.1 692L382.6 690.4L382.1 684.4L381.6 684.3L381.1 690.9L380.6 691.8L380.1 691.1L379.6 689.8L379.1 690.9L378.6 691.6L378.1 684.4L377.6 684.4L377.1 684.4L376.6 691.1L376.1 689.9L375.6 691.1L375.1 690.7L374.6 690.8L374.1 690.6L373.6 684.2L373.1 684.4L372.6 692.5L372.1 690.3L371.6 689.5L371.1 690.9L370.6 691.9L370.1 690.2L369.6 690.3L369.1 684.2L368.6 684.2L368.1 691.6L367.6 691.7L367.1 690.9L366.6 691.7L366.1 690.5L365.6 691.7L365.1 684.5L364.6 684.3L364.1 690.1L363.6 690.7L363.1 691.7L362.6 691.2L362.1 692L361.6 690.8L361.1 691.3L360.6 684.4L360.1 684.6L359.6 692.1L359.1 692.1L358.6 690.6L358.1 690.9L357.6 690.4L357.1 690.7L356.6 691.2L356.1 691L355.6 690.8L355.1 691.2L354.6 691.5L354.1 692.1L353.6 691.3L353.1 691.5L352.6 690.5L352.1 691.1L351.6 691.1L351.1 690.7L350.6 693.1L350.1 691.6L349.6 691.7L349.1 690.6L348.6 691.9L348.1 693.1L347.6 690.7L347.1 691L346.6 691L346.1 692L345.6 692.2L345.1 690.4L344.6 690.6L344.1 690.2L343.6 690.7L343.1 692.6L342.6 691.4L342.1 690.1L341.6 693L341.1 691.9L340.6 691.7L340.1 691.5L339.6 691.4L339.1 691.6L338.6 691.5L338.1 691.2L337.6 691L337.1 690.2L336.6 691.4L336.1 690.8L335.6 692.4L335.1 692.4L334.6 690.8L334.1 691.7Z" fill="#5cabf8"/>
<path d="M169.2 306.6H182.2M183.8 306.6H185M186.2 305.4H191.2M193.2 304H199.2M223.2 306.6H237.2M239 306.6H240.2M244.2 305H251.2M253.2 303.8H259.2M260.2 302H264.2M264.7 300.4H268.2M268.7 301.8H271.2M271.7 304H273.7M274.2 306.6H276.2M276.7 309.6H279.2M280.2 306.6H295.2M296.8 306.6H298M300.2 304.8H307.2M308.2 303.8H312.7M333.2 306.6H349.2M351.2 306.6H352.4M355.2 304.8H363.2M364.2 303.8H369.2M369.7 313.6H374.7M375.2 314.8H379.7M380.2 317.4H383.2M383.7 320.2H386.2M386.7 322.6H389.2" stroke="#3fd24c" stroke-width="1.3"/>
<path d="M389.4 306.6H402.4M404 306.6H405.2M406.4 305.4H411.4M413.4 304H419.4M443.4 306.6H457.4M459.2 306.6H460.4M464.4 305H471.4M473.4 303.8H479.4M480.4 302H484.4M484.9 300.4H488.4M488.9 301.8H491.4M491.9 304H493.9M494.4 306.6H496.4M496.9 309.6H499.4M500.4 306.6H515.4M517 306.6H518.2M520.4 304.8H527.4M528.4 303.8H532.9M553.4 306.6H569.4M571.4 306.6H572.6M575.4 304.8H583.4M584.4 303.8H589.4M589.9 313.6H594.9M595.4 314.8H599.9M600.4 317.4H603.4M603.9 320.2H606.4M606.9 322.6H609.4" stroke="#27923a" stroke-width="1.1"/>
<path d="M609.6 306.6H622.6M624.2 306.6H625.4M626.6 305.4H631.6M633.6 304H639.6M663.6 306.6H677.6M679.4 306.6H680.6M684.6 305H691.6M693.6 303.8H699.6M700.6 302H704.6M705.1 300.4H708.6M709.1 301.8H711.6M712.1 304H714.1M714.6 306.6H716.6M717.1 309.6H719.6M720.6 306.6H735.6M737.2 306.6H738.4M740.6 304.8H747.6M748.6 303.8H753.1M773.6 306.6H789.6M791.6 306.6H792.8M795.6 304.8H803.6M804.6 303.8H809.6M810.1 313.6H815.1M815.6 314.8H820.1M820.6 317.4H823.6M824.1 320.2H826.6M827.1 322.6H829.6" stroke="#27923a" stroke-width="1.1"/>
<path d="M829.8 306.6H842.8M844.4 306.6H845.6M846.8 305.4H851.8M853.8 304H859.8M883.8 306.6H897.8M899.6 306.6H900.8M904.8 305H911.8M913.8 303.8H919.8M920.8 302H924.8M925.3 300.4H928.8M929.3 301.8H931.8M932.3 304H934.3M934.8 306.6H936.8M937.3 309.6H939.8M940.8 306.6H955.8M957.4 306.6H958.6M960.8 304.8H967.8M968.8 303.8H973.3M993.8 306.6H1009.8M1011.8 306.6H1012.6" stroke="#27923a" stroke-width="1.1"/>
<path d="M223.6 508.5H241.6M389.6 508.5H402.8" stroke="#3fd24c" stroke-width="1.4"/>
<rect x="243.9" y="500.8" width="1.2" height="1.2" fill="#3fd24c"/><rect x="408.9" y="501" width="1.2" height="1.2" fill="#3fd24c"/>
<path d="M250.8 486.6H276.8M250.8 488.5H276.8M250.8 490.4H276.8" stroke="#3fd24c" stroke-width="1.15"/>
<path d="M423 486.6H428.8M423 488.5H428.8M423 490.4H428.8" stroke="#3fd24c" stroke-width="1.15"/>
</svg>
<div class="hdr sel" style="top:151.5px;height:61.8px"></div>
<div class="hdr" style="top:213.3px;height:61.8px"></div>
<div class="hdr" style="top:275.1px;height:61.8px"></div>
<div class="hsep" style="top:274.6px"></div>
<div class="hdr" style="top:336.9px;height:61.8px"></div>
<div class="hsep" style="top:336.4px"></div>
<div class="hdr" style="top:398.7px;height:61.8px"></div>
<div class="hsep" style="top:398.2px"></div>
<div class="hdr" style="top:460.5px;height:61.8px"></div>
<div class="hsep" style="top:460px"></div>
<div class="hdr" style="top:522.3px;height:61.8px"></div>
<div class="hsep" style="top:521.8px"></div>
<div class="hdr" style="top:584.1px;height:61.8px"></div>
<div class="hsep" style="top:583.6px"></div>
<div class="hdr" style="top:645.9px;height:61.8px"></div>
<div class="hsep" style="top:645.4px"></div>
<div style="left:163.8px;top:420px;width:2.2px;height:17px;border-radius:1.1px;background:#6d6d6f"></div>
<svg style="left:0;top:0" width="1076" height="782" viewBox="0 0 1076 782" fill="none">
<defs>
<linearGradient id="gCym" x1="0" y1="0" x2="1" y2="0"><stop offset="0" stop-color="#6f541a"/><stop offset=".45" stop-color="#9a7830"/><stop offset="1" stop-color="#62491a"/></linearGradient>
<linearGradient id="gTom" x1="0" y1="0" x2="1" y2="0"><stop offset="0" stop-color="#0e1fa6"/><stop offset=".4" stop-color="#2a47e6"/><stop offset=".7" stop-color="#162cc6"/><stop offset="1" stop-color="#08127c"/></linearGradient>
<radialGradient id="gKick" cx=".5" cy=".5" r=".5"><stop offset="0" stop-color="#7c7e85"/><stop offset=".4" stop-color="#999ba2"/><stop offset=".8" stop-color="#b3b5bb"/><stop offset="1" stop-color="#85878e"/></radialGradient>
<linearGradient id="gSyn" x1="0" y1="0" x2="0" y2="1"><stop offset="0" stop-color="#dededc"/><stop offset="1" stop-color="#c6c6c4"/></linearGradient>
<linearGradient id="gNeck" gradientUnits="userSpaceOnUse" x1="121" y1="434" x2="142" y2="411"><stop offset="0" stop-color="#b98d2e"/><stop offset="1" stop-color="#dcb44c"/></linearGradient>
<radialGradient id="gBody" gradientUnits="userSpaceOnUse" cx="110.500" cy="443.500" r="11"><stop offset="0" stop-color="#c97f2a"/><stop offset=".35" stop-color="#96501a"/><stop offset=".7" stop-color="#2e1408"/><stop offset="1" stop-color="#140a04"/></radialGradient>
<linearGradient id="gTT" x1="0" y1="0" x2="1" y2="1"><stop offset="0" stop-color="#d2d8de"/><stop offset=".5" stop-color="#c2c8cf"/><stop offset="1" stop-color="#b2b8c0"/></linearGradient>
<filter id="fBlur" x="-20%" y="-100%" width="140%" height="300%"><feGaussianBlur stdDeviation="1.6"/></filter>
</defs><g transform="translate(0 0)">
<g stroke-linecap="round" fill="none">
<path d="M107.800 166V186.500M142.200 170V188M145.500 166.500V190" stroke="#5d5e62" stroke-width="1.100"/>
<path d="M107.800 186l-3.800 10.300M107.800 186l5.500 11M107.800 186.500l-1 8" stroke="#8e8f94" stroke-width=".95"/>
<path d="M145.500 189l-8.200 8M145.500 189l5.900 8M145.500 189l.600 8.500M142.200 187.500l-4 6.500" stroke="#8e8f94" stroke-width=".95"/>
<path d="M142.200 166.600L152 173.600" stroke="#85868a" stroke-width="1.150"/>
<path d="M103 167.600l6-1" stroke="#8a8b8f" stroke-width="1"/>
<path d="M117.500 193l-3.300 4.600M135 193l3.200 4.600" stroke="#9a9ba0" stroke-width="1.100"/>
<path d="M126.200 172.500v6.500" stroke="#77787c" stroke-width="1"/>
</g>
<ellipse cx="113" cy="163.500" rx="9.400" ry="2.300" transform="rotate(17 113 163.500)" fill="url(#gCym)"/>
<ellipse cx="141.100" cy="163.400" rx="6.800" ry="1.700" transform="rotate(-6 141.100 163.400)" fill="url(#gCym)"/>
<ellipse cx="141" cy="169.300" rx="4.100" ry="1.250" transform="rotate(-4 141 169.300)" fill="#85651f"/>
<rect x="109.900" y="172.400" width="7" height="13" rx=".8" fill="url(#gTom)"/>
<path d="M112.600 173.600v11.400" stroke="#6f9bff" stroke-width="1.100" opacity=".85"/>
<ellipse cx="113.400" cy="172.600" rx="3.500" ry="1.100" fill="#d9def3"/>
<ellipse cx="120.400" cy="171.900" rx="4.600" ry="4.300" fill="url(#gTom)"/>
<path d="M118.600 168.600l2.400 6.400M121.400 168l1.600 6" stroke="#86a6ff" stroke-width=".9" opacity=".75"/>
<ellipse cx="131.700" cy="172.100" rx="4.300" ry="4" fill="url(#gTom)"/>
<path d="M130.200 169l1.400 6M133 168.800l.8 5.600" stroke="#86a6ff" stroke-width=".9" opacity=".7"/>
<path d="M116.200 174.600q4.200 2.600 8.400 0M127.800 174.800q3.900 2.400 7.800 0" stroke="#b9c0dc" stroke-width=".7" fill="none" opacity=".8"/>
<ellipse cx="139.100" cy="177.700" rx="3.700" ry="1.900" fill="#1c2fd0"/>
<ellipse cx="139.100" cy="177" rx="3.500" ry="1.200" fill="#3d58ea"/>
<ellipse cx="126.200" cy="188" rx="9.700" ry="9.500" fill="#3c3e48"/>
<ellipse cx="126.200" cy="187.600" rx="9.100" ry="8.900" fill="url(#gKick)"/>
<path d="M118.200 191.600a9 8.800 0 0 0 16 0" stroke="#56639e" stroke-width="1.700" fill="none" stroke-dasharray="1.300 .7"/>
<circle cx="126.200" cy="188.200" r="3.300" fill="#7b7d83"/>
<path d="M126.200 185.400v5" stroke="#5c5e64" stroke-width=".9"/>
</g><g transform="translate(0 61.8)">
<g stroke-linecap="round" fill="none">
<path d="M107.800 166V186.500M142.200 170V188M145.500 166.500V190" stroke="#5d5e62" stroke-width="1.100"/>
<path d="M107.800 186l-3.800 10.300M107.800 186l5.500 11M107.800 186.500l-1 8" stroke="#8e8f94" stroke-width=".95"/>
<path d="M145.500 189l-8.200 8M145.500 189l5.900 8M145.500 189l.600 8.500M142.200 187.500l-4 6.500" stroke="#8e8f94" stroke-width=".95"/>
<path d="M142.200 166.600L152 173.600" stroke="#85868a" stroke-width="1.150"/>
<path d="M103 167.600l6-1" stroke="#8a8b8f" stroke-width="1"/>
<path d="M117.500 193l-3.300 4.600M135 193l3.200 4.600" stroke="#9a9ba0" stroke-width="1.100"/>
<path d="M126.200 172.500v6.500" stroke="#77787c" stroke-width="1"/>
</g>
<ellipse cx="113" cy="163.500" rx="9.400" ry="2.300" transform="rotate(17 113 163.500)" fill="url(#gCym)"/>
<ellipse cx="141.100" cy="163.400" rx="6.800" ry="1.700" transform="rotate(-6 141.100 163.400)" fill="url(#gCym)"/>
<ellipse cx="141" cy="169.300" rx="4.100" ry="1.250" transform="rotate(-4 141 169.300)" fill="#85651f"/>
<rect x="109.900" y="172.400" width="7" height="13" rx=".8" fill="url(#gTom)"/>
<path d="M112.600 173.600v11.400" stroke="#6f9bff" stroke-width="1.100" opacity=".85"/>
<ellipse cx="113.400" cy="172.600" rx="3.500" ry="1.100" fill="#d9def3"/>
<ellipse cx="120.400" cy="171.900" rx="4.600" ry="4.300" fill="url(#gTom)"/>
<path d="M118.600 168.600l2.400 6.400M121.400 168l1.600 6" stroke="#86a6ff" stroke-width=".9" opacity=".75"/>
<ellipse cx="131.700" cy="172.100" rx="4.300" ry="4" fill="url(#gTom)"/>
<path d="M130.200 169l1.400 6M133 168.800l.8 5.600" stroke="#86a6ff" stroke-width=".9" opacity=".7"/>
<path d="M116.200 174.600q4.200 2.600 8.400 0M127.800 174.800q3.900 2.400 7.800 0" stroke="#b9c0dc" stroke-width=".7" fill="none" opacity=".8"/>
<ellipse cx="139.100" cy="177.700" rx="3.700" ry="1.900" fill="#1c2fd0"/>
<ellipse cx="139.100" cy="177" rx="3.500" ry="1.200" fill="#3d58ea"/>
<ellipse cx="126.200" cy="188" rx="9.700" ry="9.500" fill="#3c3e48"/>
<ellipse cx="126.200" cy="187.600" rx="9.100" ry="8.900" fill="url(#gKick)"/>
<path d="M118.200 191.600a9 8.800 0 0 0 16 0" stroke="#56639e" stroke-width="1.700" fill="none" stroke-dasharray="1.300 .7"/>
<circle cx="126.200" cy="188.200" r="3.300" fill="#7b7d83"/>
<path d="M126.200 185.400v5" stroke="#5c5e64" stroke-width=".9"/>
</g><g transform="translate(103.8 294.4)">
<path d="M.2 19.4l1-2 44 0 1 2v1.6h-46z" fill="#0e0e0f"/>
<path d="M1.5 0h43.2l1.6 19.4h-46.4z" fill="url(#gSyn)"/>
<path d="M1.5 0h43.2" stroke="#f4f4f4" stroke-width=".8"/>
<g stroke="#3a3a3c" stroke-width=".9" stroke-dasharray="1.6 1" fill="none">
<path d="M5 2.6h8M14.5 2.6h14" stroke-dasharray="2.2 .7"/><path d="M34 2.8h8" stroke-dasharray="1 .8"/>
<path d="M3.6 15.2h2.5M33 15.6h10" stroke-dasharray="1.2 .9"/>
<path d="M30 11.2h13" stroke="#6a6a6c" stroke-dasharray="none"/>
</g>
<g fill="#3c3c3e"><circle cx="7.6" cy="7.1" r="1.5"/><circle cx="14.4" cy="7.1" r="1.5"/><circle cx="21.2" cy="7.1" r="1.5"/><circle cx="40.6" cy="7.3" r="1.3"/></g>
<path d="M24.5 7.2h13" stroke="#7c7c7e" stroke-width=".7"/>
<rect x="7" y="11.4" width="24.4" height="3" fill="#121213"/>
<path d="M10.4 12.9h2.2M14 12.9h1.4M17.2 12.9h1.4M20.2 12.9h1.4M22.6 12.9h1.4" stroke="#e8e8e8" stroke-width="1.5"/>
<rect x="8.6" y="15.8" width="24.4" height="1.7" fill="#1c1c1d"/>
<path d="M3.4 11.2v5" stroke="#555" stroke-width="1.2"/><path d="M2.400 5h41.600M2 9.800h42.400" stroke="#a9a9a7" stroke-width=".6"/><path d="M5 17.700h3M34 17.800h9" stroke="#5a5a5c" stroke-width=".8" stroke-dasharray="1 .7"/><rect x="37.400" y="15" width="1.400" height="1.200" fill="#b03a34"/>
</g><g transform="translate(103.8 356.2)">
<path d="M.2 19.4l1-2 44 0 1 2v1.6h-46z" fill="#0e0e0f"/>
<path d="M1.5 0h43.2l1.6 19.4h-46.4z" fill="url(#gSyn)"/>
<path d="M1.5 0h43.2" stroke="#f4f4f4" stroke-width=".8"/>
<g stroke="#3a3a3c" stroke-width=".9" stroke-dasharray="1.6 1" fill="none">
<path d="M5 2.6h8M14.5 2.6h14" stroke-dasharray="2.2 .7"/><path d="M34 2.8h8" stroke-dasharray="1 .8"/>
<path d="M3.6 15.2h2.5M33 15.6h10" stroke-dasharray="1.2 .9"/>
<path d="M30 11.2h13" stroke="#6a6a6c" stroke-dasharray="none"/>
</g>
<g fill="#3c3c3e"><circle cx="7.6" cy="7.1" r="1.5"/><circle cx="14.4" cy="7.1" r="1.5"/><circle cx="21.2" cy="7.1" r="1.5"/><circle cx="40.6" cy="7.3" r="1.3"/></g>
<path d="M24.5 7.2h13" stroke="#7c7c7e" stroke-width=".7"/>
<rect x="7" y="11.4" width="24.4" height="3" fill="#121213"/>
<path d="M10.4 12.9h2.2M14 12.9h1.4M17.2 12.9h1.4M20.2 12.9h1.4M22.6 12.9h1.4" stroke="#e8e8e8" stroke-width="1.5"/>
<rect x="8.6" y="15.8" width="24.4" height="1.7" fill="#1c1c1d"/>
<path d="M3.4 11.2v5" stroke="#555" stroke-width="1.2"/><path d="M2.400 5h41.600M2 9.800h42.400" stroke="#a9a9a7" stroke-width=".6"/><path d="M5 17.700h3M34 17.800h9" stroke="#5a5a5c" stroke-width=".8" stroke-dasharray="1 .7"/><rect x="37.400" y="15" width="1.400" height="1.200" fill="#b03a34"/>
</g><g>
<path d="M121.200 434L141.600 411.200" stroke="#17100a" stroke-width="4.200" stroke-linecap="butt"/>
<path d="M121 434.200L141.800 411" stroke="url(#gNeck)" stroke-width="2.900" stroke-linecap="butt"/>
<path d="M123 432L139.800 413.200" stroke="#8a6a22" stroke-width="2.900" stroke-dasharray=".35 1.500" opacity=".55"/>
<path d="M139.800 410.800q2.400-.8 4.600-2.600q3.200-2.400 5.800-2.400q1.800.4 1.200 2.200q-.8 2-3.600 2.800q-2.200 1-3.200 2.800q-1 1.600-2.400 1.200z" fill="#e2ba50" stroke="#6e5218" stroke-width=".4"/>
<path d="M120.400 425.200q1.400 2.400-.6 6.200l1.600 1.400l6 4.200q2-1 2.600.2q-1.400 3.200-5.600 5q-1.600 1.400-1.800 4.200q-.6 5.800-5 6.800q-6.200 1.400-10.800-2.800q-4-4-2-8.200q2.600-4.600 8.400-6.600q3-1.200 3.800-4.600q.8-4 3.400-5.800z" fill="url(#gBody)" stroke="#0c0604" stroke-width=".7"/>
<path d="M119.600 431.800l1.800 1.200l7.600 4.200q-2.400 3-5.600 4.400q-1.800 1.400-2 4.400q-.4 3.600-2.400 4.800q-2.200.8-4.400-.2q-1-3.200-3.800-7q1-3.400 2.800-5.600q3.400-1.800 6-6.200z" fill="#efefec" stroke="#a2a29e" stroke-width=".35"/>
<path d="M111.900 444.300l3.600 3.200M114.200 441.400l3.800 3.200M116.600 438.600l3.800 3.200" stroke="#6f7378" stroke-width="1"/>
<path d="M113.600 449.600l1.600 1.600" stroke="#8c9298" stroke-width="1.400"/>
</g><g transform="translate(0 0)">
<ellipse cx="127.500" cy="506" rx="17" ry="3.400" fill="#0d0d0e" opacity=".26" filter="url(#fBlur)"/>
<path d="M121.4 484.8L137.200 508.600M131.800 487.4L119.4 504.2" stroke="#161617" stroke-width="1.150" stroke-linecap="round"/>
<path d="M131 509.400l9-2.600M114.400 505l7.600-1.800" stroke="#131314" stroke-width="1.100" stroke-linecap="round" opacity=".7"/>
<g transform="translate(0 0.0)">
<path d="M105.700 480.700L112.300 476.700L143.800 480.600L147.800 483.500L147.700 484.500L139.700 488.500L106 482.400z" fill="#740914"/>
<path d="M105.700 480.600L112.300 476.600L143.800 480.500L147.800 483.400L139.600 487.500L105.900 481.600z" fill="#cc1428"/>
<path d="M112.300 476.700L143.800 480.600" stroke="#ec3f4b" stroke-width=".6"/>
<path d="M113.400 477.300l15.400 1.900l-2.600 2.700l-15.400-2.400z" fill="#3b2a78"/><path d="M115 478.300l9.600 1.250" stroke="#8f86c8" stroke-width=".5" stroke-dasharray=".8 .9" opacity=".8"/>
<path d="M111.400 480.700L140.600 485.700" stroke="#f3f3f3" stroke-width="1.700"/>
<path d="M111.200 481.800L140.200 486.800" stroke="#0c0c0c" stroke-width=".6"/>
</g>
</g><g transform="translate(0 61.8)">
<ellipse cx="127.500" cy="506" rx="17" ry="3.400" fill="#0d0d0e" opacity=".26" filter="url(#fBlur)"/>
<path d="M121.4 484.8L137.200 508.600M131.800 487.4L119.4 504.2" stroke="#161617" stroke-width="1.150" stroke-linecap="round"/>
<path d="M131 509.400l9-2.600M114.400 505l7.600-1.800" stroke="#131314" stroke-width="1.100" stroke-linecap="round" opacity=".7"/>
<g transform="translate(0 0.0)">
<path d="M105.700 480.700L112.300 476.700L143.800 480.600L147.800 483.500L147.700 484.500L139.700 488.500L106 482.400z" fill="#740914"/>
<path d="M105.700 480.600L112.300 476.600L143.800 480.500L147.800 483.400L139.600 487.500L105.900 481.600z" fill="#cc1428"/>
<path d="M112.300 476.700L143.800 480.600" stroke="#ec3f4b" stroke-width=".6"/>
<path d="M113.400 477.300l15.400 1.900l-2.600 2.700l-15.400-2.400z" fill="#3b2a78"/><path d="M115 478.300l9.600 1.250" stroke="#8f86c8" stroke-width=".5" stroke-dasharray=".8 .9" opacity=".8"/>
<path d="M111.400 480.700L140.600 485.700" stroke="#f3f3f3" stroke-width="1.700"/>
<path d="M111.200 481.800L140.200 486.800" stroke="#0c0c0c" stroke-width=".6"/>
</g>
</g><g transform="translate(0 123.6)">
<ellipse cx="127.500" cy="506" rx="17" ry="3.400" fill="#0d0d0e" opacity=".26" filter="url(#fBlur)"/>
<path d="M119.6 481.2L137.200 508.600M131.800 483.79999999999995L121.4 500.6" stroke="#161617" stroke-width="1.150" stroke-linecap="round"/>
<path d="M131 509.400l9-2.600M114.400 505l7.600-1.800" stroke="#131314" stroke-width="1.100" stroke-linecap="round" opacity=".7"/>
<g transform="translate(0 -3.6)">
<path d="M105.700 480.700L112.300 476.700L143.800 480.600L147.800 483.500L147.700 484.500L139.700 488.500L106 482.400z" fill="#0f0a09"/>
<path d="M105.700 480.600L112.300 476.600L143.800 480.500L147.800 483.400L139.600 487.500L105.900 481.600z" fill="#33241f"/>
<path d="M112.300 476.700L143.800 480.600" stroke="#54403a" stroke-width=".6"/>
<path d="M113.400 477.300l15.400 1.900l-2.600 2.700l-15.400-2.400z" fill="#1a1211"/><path d="M115 478.300l9.600 1.250" stroke="#8f86c8" stroke-width=".5" stroke-dasharray=".8 .9" opacity=".8"/>
<path d="M111.400 480.700L140.600 485.700" stroke="#c9c9c9" stroke-width="1.700"/>
<path d="M111.200 481.800L140.200 486.800" stroke="#0c0c0c" stroke-width=".6"/>
</g>
</g><g>
<path d="M107.800 658.700H147.100L148.900 689.200H106z" fill="url(#gTT)"/>
<path d="M106.200 687.200H148.800L148.900 689.200H106z" fill="#8d949c"/>
<path d="M107.800 658.900H147.100" stroke="#e9edf1" stroke-width=".7"/>
<ellipse cx="123.200" cy="673" rx="14.500" ry="13" fill="#8b9199"/>
<ellipse cx="123.200" cy="672.700" rx="14" ry="12.500" fill="#17171c"/>
<ellipse cx="123.200" cy="672.700" rx="11" ry="9.800" fill="none" stroke="#2a2933" stroke-width="1.600"/>
<ellipse cx="123.200" cy="672.700" rx="7.600" ry="6.800" fill="none" stroke="#302e3a" stroke-width="1"/>
<path d="M128.900 661.800L117.500 683.600" stroke="#e6e8ee" stroke-width="1.300" opacity=".9"/>
<path d="M123.200 660.400v24.400" stroke="#3a3946" stroke-width=".8" opacity=".7"/>
<ellipse cx="123.200" cy="672.200" rx="4.700" ry="4.300" fill="#8e1820"/>
<ellipse cx="123.300" cy="672.300" rx="3" ry="2.700" fill="#ecebee"/>
<circle cx="123.300" cy="672.300" r=".8" fill="#33333a"/>
<circle cx="140.900" cy="665.600" r="4.900" fill="#15151a"/>
<circle cx="140.900" cy="665.600" r="2.300" fill="#33333a"/>
<path d="M143.400 661.700L137.400 673.200L130.400 678.600" stroke="#9c9a90" stroke-width="1.100" stroke-linecap="round" stroke-linejoin="round" fill="none"/>
<path d="M129.400 679.500l3.600-2.800" stroke="#1c1c20" stroke-width="2.200"/>
<rect x="143.600" y="674.200" width="2.400" height="9.600" rx=".4" fill="#17171a"/>
<rect x="143.900" y="678.200" width="1.800" height="1.900" fill="#e8e8ea"/>
<circle cx="108.800" cy="681.300" r="1" fill="#1c1c20"/>
<rect x="109.800" y="680" width="2.200" height="1.500" fill="#c0525a"/>
<rect x="130.200" y="683.400" width="2.400" height="2" fill="#3c52e0"/>
<path d="M109.300 661.400h2.400v1.600h-2.400zM144.400 660.600l1.200.8" stroke="#2a2a30" stroke-width=".8" fill="#2a2a30"/>
<path d="M108 685.800h6M116 686.200h14" stroke="#8a9098" stroke-width=".8" stroke-dasharray="1.400 .8"/>
</g></svg>
<svg style="left:0;top:0" width="1076" height="782" viewBox="0 0 1076 782" fill="none"><defs><linearGradient id="gPh" x1="0" y1="0" x2="1" y2="0"><stop offset="0" stop-color="#3a3a3b"/><stop offset="1" stop-color="#565657"/></linearGradient></defs><path d="M167.4 129.8H177.6Q178.5 129.8 178.5 130.7V139.5L168.3 150.8H167.4z" fill="url(#gPh)"/><path d="M167.6 130.2H177.4Q178.2 130.2 178.2 131V139.3L168.3 150.4V708" stroke="#c6c6c6" stroke-width="1.25" stroke-linejoin="round"/></svg>
<div class="st cj" style="left:100.8px">上午</div>
<div class="st dg" style="left:121.5px">9:41</div>
<div class="st dg" style="left:148px">4</div><div class="st cj" style="left:153.7px">月</div><div class="st dg" style="left:163.2px">1</div><div class="st cj" style="left:168.6px">日</div><div class="st cj" style="left:180.7px">週二</div>
<div class="st" style="left:952.7px;font-size:9.9px;letter-spacing:.05px;font-weight:400;-webkit-text-stroke:.38px #fff">100%</div>
<div class="grp" style="left:146px;width:101.2px"><i style="left:33px"></i><i style="left:67.2px"></i></div>
<div class="grp" style="left:264.2px;width:67px"><i style="left:33px"></i></div>
<div class="grp" style="left:482.4px;width:136.8px"><i style="left:40.6px"></i><i style="left:95.8px"></i></div>
<div class="fx">效果</div>
<div class="slider"></div><div class="knob"></div>
<div class="help">?</div>
<div class="rnum" style="left:171.9px;color:#cfcfcf">1</div>
<div class="rnum" style="left:226.95px;color:#b9b9b9">2</div>
<div class="rnum" style="left:282px;color:#b9b9b9">3</div>
<div class="rnum" style="left:337.05px;color:#b9b9b9">4</div>
<div class="rnum" style="left:392.1px;color:#b9b9b9">5</div>
<div class="rnum" style="left:447.15px;color:#b9b9b9">6</div>
<div class="rnum" style="left:502.2px;color:#b9b9b9">7</div>
<div class="rnum" style="left:557.25px;color:#b9b9b9">8</div>
<div class="rnum" style="left:612.3px;color:#b9b9b9">9</div>
<div class="rnum" style="left:667.35px;color:#b9b9b9">10</div>
<div class="rnum" style="left:722.4px;color:#b9b9b9">11</div>
<div class="rnum" style="left:777.45px;color:#b9b9b9">12</div>
<div class="rnum" style="left:832.5px;color:#b9b9b9">13</div>
<div class="rnum" style="left:887.55px;color:#b9b9b9">14</div>
<div class="rnum" style="left:942.6px;color:#b9b9b9">15</div>
<svg style="left:0;top:0" width="1076" height="782" viewBox="0 0 1076 782" fill="none" stroke-linecap="round" stroke-linejoin="round">
<circle cx="930.9" cy="74.7" r="3.2" fill="#f4a11d"/>
<g stroke="#fff" stroke-width="1.55" stroke-linecap="butt"><path d="M939.4 73.6a6.6 6.6 0 0 1 9.2 0"/><path d="M941.3 75.7a3.9 3.9 0 0 1 5.4 0"/></g><circle cx="944" cy="77.7" r="1.15" fill="#fff"/>
<rect x="980.2" y="70.6" width="18.6" height="8.9" rx="2.6" stroke="#8c8c8c" stroke-width="1"/><rect x="981.8" y="72.2" width="15.4" height="5.7" rx="1.3" fill="#fff"/><path d="M1000.1 73.6v2.9" stroke="#8c8c8c" stroke-width="1.3"/>
<path d="M110 93.5h5.6v5.2a1.9 1.9 0 0 0 1.9 1.9h4.8v9.7a2.1 2.1 0 0 1-2.1 2.1h-10.2a2.1 2.1 0 0 1-2.1-2.1v-14.7a2.1 2.1 0 0 1 2.1-2.1z" fill="#cfcfcf"/><path d="M116.7 94l5.2 5.5h-4.2a1 1 0 0 1-1-1z" fill="#e2e2e2"/>
<g stroke="#d6d6d6" stroke-width="1.3"><rect x="156.4" y="97.4" width="11.4" height="11.6" rx="2.2"/><rect x="148.7" y="100" width="5.6" height="6.1" rx="1.7"/><rect x="169.8" y="100" width="5.6" height="6.1" rx="1.7"/></g>
<rect x="193.8" y="93.8" width="5.4" height="12" rx="2.7" fill="#cfcfcf"/><path d="M191.1 101.4v1.6a5.4 5.4 0 0 0 10.8 0v-1.6M196.5 108.5v2.7M192.8 111.4h7.4" stroke="#d6d6d6" stroke-width="1.15"/>
<rect x="222.1" y="96.4" width="3" height="3" fill="#e6e6e6"/><rect x="227.1" y="96.4" width="3" height="3" fill="#e6e6e6"/><rect x="232.1" y="96.4" width="3" height="3" fill="#e6e6e6"/><rect x="237.1" y="96.4" width="3" height="3" fill="#e6e6e6"/><rect x="222.1" y="101.45" width="3" height="3" fill="#e6e6e6"/><rect x="227.1" y="101.45" width="3" height="3" fill="#e6e6e6"/><rect x="232.1" y="101.45" width="3" height="3" fill="#e6e6e6"/><rect x="237.1" y="101.45" width="3" height="3" fill="#e6e6e6"/><rect x="222.1" y="106.5" width="3" height="3" fill="#e6e6e6"/><rect x="227.1" y="106.5" width="3" height="3" fill="#e6e6e6"/><rect x="232.1" y="106.5" width="3" height="3" fill="#e6e6e6"/><rect x="237.1" y="106.5" width="3" height="3" fill="#e6e6e6"/>
<g stroke="#d6d6d6" stroke-width="1.15"><path d="M274.2 96.2v7.2M274.2 107.6v2.8M280.1 96.2v2M280.1 102.4v8M286 96.2v7.2M286 107.6v2.8"/><circle cx="274.2" cy="105.5" r="1.9"/><circle cx="280.1" cy="100.3" r="1.9"/><circle cx="286" cy="105.5" r="1.9"/></g>
<path d="M359.2 95.9L354.2 101l5 5.1M354.6 101h10.2a4.6 4.6 0 0 1 0 9.2H361" stroke="#d6d6d6" stroke-width="1.25"/>
<rect x="494" y="96.1" width="2.9" height="14" fill="#d2d2d2"/><path d="M510.3 96.1v14L497.6 103.1z" fill="#d2d2d2"/>
<path d="M544.7 95.6v15.4l13.3-7.7z" fill="#d2d2d2"/>
<circle cx="599" cy="103.4" r="9.2" fill="#ff3b30"/>
<g stroke="#d6d6d6" stroke-width="1.25"><path d="M781.7 96.1q1.1-1.8 2.2 0l5.9 11.9q.9 3-1.6 3h-10.8q-2.5 0-1.6-3z"/><path d="M776.9 106.8h11.8M783.4 106.5l7.3-8M782.8 99.2v4.6"/></g>
<g stroke="#d6d6d6" stroke-width="1.2"><path d="M895 110.8h9.4a7.9 7.9 0 1 0-1.2 0"/><path d="M909.2 110.8h4.6"/></g>
<g stroke="#d6d6d6"><circle cx="944.8" cy="102.8" r="6.7" stroke-width="1.15"/><circle cx="944.8" cy="102.8" r="8" stroke-width="1.7" stroke-dasharray="1.25 1.263" stroke-linecap="butt"/><path d="M944.6 102.8h6.6M944.4 102.8l-3.6-5.6M944.4 102.8l-3.6 5.6" stroke-width="1.2"/><path d="M943.2 100.6l3.4 2.2-3.4 2.2z" stroke-width=".9"/></g>
<path d="M996 139.6h10.2M1001.1 134.5v10.2" stroke="#f0f0f0" stroke-width="1.5" stroke-linecap="butt"/>
<g stroke-linecap="butt"><path d="M223.35 130v20.6M278.4 130v20.6M333.45 130v20.6M388.5 130v20.6M443.55 130v20.6M498.6 130v20.6M553.65 130v20.6M608.7 130v20.6M663.75 130v20.6M718.8 130v20.6M773.85 130v20.6M828.9 130v20.6M883.95 130v20.6M939 130v20.6" stroke="#9a9a9a" stroke-width="1"/><path d="M182.06 144.4v6M195.83 144.4v6M209.59 144.4v6M237.11 144.4v6M250.88 144.4v6M264.64 144.4v6M292.16 144.4v6M305.92 144.4v6M319.69 144.4v6M347.21 144.4v6M360.97 144.4v6M374.74 144.4v6M402.26 144.4v6M416.02 144.4v6M429.79 144.4v6M457.31 144.4v6M471.07 144.4v6M484.84 144.4v6M512.36 144.4v6M526.12 144.4v6M539.89 144.4v6M567.41 144.4v6M581.17 144.4v6M594.94 144.4v6M622.46 144.4v6M636.23 144.4v6M649.99 144.4v6M677.51 144.4v6M691.27 144.4v6M705.04 144.4v6M732.56 144.4v6M746.32 144.4v6M760.09 144.4v6M787.61 144.4v6M801.37 144.4v6M815.14 144.4v6M842.66 144.4v6M856.42 144.4v6M870.19 144.4v6M897.71 144.4v6M911.48 144.4v6M925.24 144.4v6M952.76 144.4v6M966.52 144.4v6M980.29 144.4v6" stroke="#8a8a8a" stroke-width="1"/></g>
</svg>
</div><div class="homebar"></div>
</div>
</body>
</html>
